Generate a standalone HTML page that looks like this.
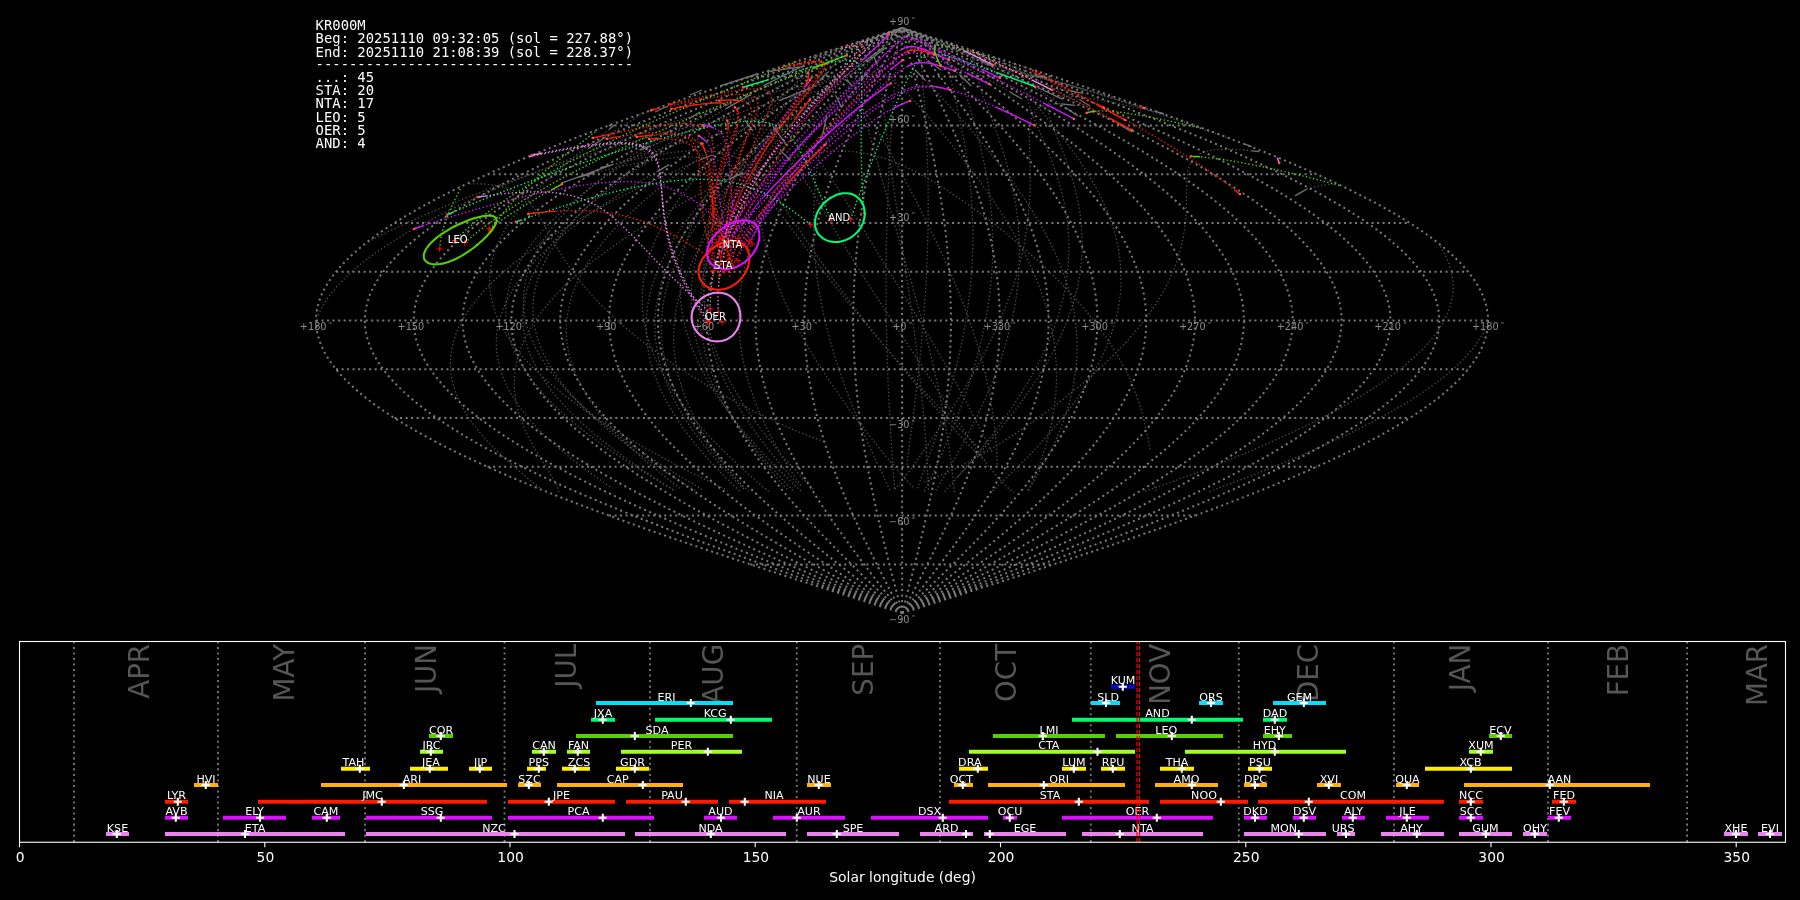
<!DOCTYPE html>
<html><head><meta charset="utf-8"><title>KR000M radiants</title>
<style>html,body{margin:0;padding:0;background:#000;overflow:hidden}svg{display:block;will-change:transform;opacity:0.999}</style>
</head><body>
<svg width="1800" height="900" viewBox="0 0 1800 900">
<rect width="1800" height="900" fill="#000"/>
<path d="M902.1,613.2 922.5,606.7 942.9,600.2 963.3,593.7 983.6,587.2 1003.8,580.7 1023.9,574.2 1043.8,567.7 1063.6,561.1 1083.2,554.6 1102.5,548.1 1121.6,541.6 1140.4,535.1 1159.0,528.6 1177.2,522.1 1195.1,515.6 1212.6,509.1 1229.8,502.6 1246.5,496.1 1262.9,489.6 1278.8,483.1 1294.2,476.6 1309.2,470.1 1323.7,463.6 1337.6,457.1 1351.0,450.6 1363.9,444.1 1376.2,437.6 1387.9,431.1 1399.1,424.6 1409.6,418.1 1419.5,411.6 1428.8,405.1 1437.5,398.5 1445.5,392.0 1452.8,385.5 1459.5,379.0 1465.4,372.5 1470.7,366.0 1475.3,359.5 1479.2,353.0 1482.4,346.5 1484.9,340.0 1486.7,333.5 1487.8,327.0 1488.1,320.5 1487.8,314.0 1486.7,307.5 1484.9,301.0 1482.4,294.5 1479.2,288.0 1475.3,281.5 1470.7,275.0 1465.4,268.5 1459.5,262.0 1452.8,255.5 1445.5,249.0 1437.5,242.5 1428.8,235.9 1419.5,229.4 1409.6,222.9 1399.1,216.4 1387.9,209.9 1376.2,203.4 1363.9,196.9 1351.0,190.4 1337.6,183.9 1323.7,177.4 1309.2,170.9 1294.2,164.4 1278.8,157.9 1262.9,151.4 1246.5,144.9 1229.8,138.4 1212.6,131.9 1195.1,125.4 1177.2,118.9 1159.0,112.4 1140.4,105.9 1121.6,99.4 1102.5,92.9 1083.2,86.4 1063.6,79.9 1043.8,73.3 1023.9,66.8 1003.8,60.3 983.6,53.8 963.3,47.3 942.9,40.8 922.5,34.3 902.1,27.8M902.1,613.2 920.8,606.7 939.5,600.2 958.2,593.7 976.8,587.2 995.4,580.7 1013.8,574.2 1032.0,567.7 1050.1,561.1 1068.1,554.6 1085.8,548.1 1103.3,541.6 1120.6,535.1 1137.6,528.6 1154.3,522.1 1170.7,515.6 1186.8,509.1 1202.5,502.6 1217.8,496.1 1232.8,489.6 1247.4,483.1 1261.5,476.6 1275.3,470.1 1288.5,463.6 1301.3,457.1 1313.6,450.6 1325.4,444.1 1336.7,437.6 1347.5,431.1 1357.7,424.6 1367.3,418.1 1376.4,411.6 1384.9,405.1 1392.9,398.5 1400.2,392.0 1406.9,385.5 1413.0,379.0 1418.5,372.5 1423.3,366.0 1427.6,359.5 1431.1,353.0 1434.1,346.5 1436.4,340.0 1438.0,333.5 1439.0,327.0 1439.3,320.5 1439.0,314.0 1438.0,307.5 1436.4,301.0 1434.1,294.5 1431.1,288.0 1427.6,281.5 1423.3,275.0 1418.5,268.5 1413.0,262.0 1406.9,255.5 1400.2,249.0 1392.9,242.5 1384.9,235.9 1376.4,229.4 1367.3,222.9 1357.7,216.4 1347.5,209.9 1336.7,203.4 1325.4,196.9 1313.6,190.4 1301.3,183.9 1288.5,177.4 1275.3,170.9 1261.5,164.4 1247.4,157.9 1232.8,151.4 1217.8,144.9 1202.5,138.4 1186.8,131.9 1170.7,125.4 1154.3,118.9 1137.6,112.4 1120.6,105.9 1103.3,99.4 1085.8,92.9 1068.1,86.4 1050.1,79.9 1032.0,73.3 1013.8,66.8 995.4,60.3 976.8,53.8 958.2,47.3 939.5,40.8 920.8,34.3 902.1,27.8M902.1,613.2 919.1,606.7 936.1,600.2 953.1,593.7 970.0,587.2 986.9,580.7 1003.6,574.2 1020.2,567.7 1036.7,561.1 1053.0,554.6 1069.1,548.1 1085.0,541.6 1100.7,535.1 1116.2,528.6 1131.3,522.1 1146.3,515.6 1160.9,509.1 1175.2,502.6 1189.1,496.1 1202.7,489.6 1216.0,483.1 1228.9,476.6 1241.3,470.1 1253.4,463.6 1265.0,457.1 1276.2,450.6 1286.9,444.1 1297.2,437.6 1307.0,431.1 1316.2,424.6 1325.0,418.1 1333.3,411.6 1341.0,405.1 1348.2,398.5 1354.9,392.0 1361.0,385.5 1366.6,379.0 1371.5,372.5 1376.0,366.0 1379.8,359.5 1383.0,353.0 1385.7,346.5 1387.8,340.0 1389.3,333.5 1390.2,327.0 1390.5,320.5 1390.2,314.0 1389.3,307.5 1387.8,301.0 1385.7,294.5 1383.0,288.0 1379.8,281.5 1376.0,275.0 1371.5,268.5 1366.6,262.0 1361.0,255.5 1354.9,249.0 1348.2,242.5 1341.0,235.9 1333.3,229.4 1325.0,222.9 1316.2,216.4 1307.0,209.9 1297.2,203.4 1286.9,196.9 1276.2,190.4 1265.0,183.9 1253.4,177.4 1241.3,170.9 1228.9,164.4 1216.0,157.9 1202.7,151.4 1189.1,144.9 1175.2,138.4 1160.9,131.9 1146.3,125.4 1131.3,118.9 1116.2,112.4 1100.7,105.9 1085.0,99.4 1069.1,92.9 1053.0,86.4 1036.7,79.9 1020.2,73.3 1003.6,66.8 986.9,60.3 970.0,53.8 953.1,47.3 936.1,40.8 919.1,34.3 902.1,27.8M902.1,613.2 917.4,606.7 932.7,600.2 948.0,593.7 963.2,587.2 978.4,580.7 993.4,574.2 1008.4,567.7 1023.2,561.1 1037.9,554.6 1052.4,548.1 1066.7,541.6 1080.8,535.1 1094.8,528.6 1108.4,522.1 1121.8,515.6 1135.0,509.1 1147.9,502.6 1160.4,496.1 1172.7,489.6 1184.6,483.1 1196.2,476.6 1207.4,470.1 1218.3,463.6 1228.7,457.1 1238.8,450.6 1248.4,444.1 1257.7,437.6 1266.5,431.1 1274.8,424.6 1282.7,418.1 1290.2,411.6 1297.1,405.1 1303.6,398.5 1309.6,392.0 1315.1,385.5 1320.1,379.0 1324.6,372.5 1328.6,366.0 1332.0,359.5 1334.9,353.0 1337.3,346.5 1339.2,340.0 1340.5,333.5 1341.4,327.0 1341.6,320.5 1341.4,314.0 1340.5,307.5 1339.2,301.0 1337.3,294.5 1334.9,288.0 1332.0,281.5 1328.6,275.0 1324.6,268.5 1320.1,262.0 1315.1,255.5 1309.6,249.0 1303.6,242.5 1297.1,235.9 1290.2,229.4 1282.7,222.9 1274.8,216.4 1266.5,209.9 1257.7,203.4 1248.4,196.9 1238.8,190.4 1228.7,183.9 1218.3,177.4 1207.4,170.9 1196.2,164.4 1184.6,157.9 1172.7,151.4 1160.4,144.9 1147.9,138.4 1135.0,131.9 1121.8,125.4 1108.4,118.9 1094.8,112.4 1080.8,105.9 1066.7,99.4 1052.4,92.9 1037.9,86.4 1023.2,79.9 1008.4,73.3 993.4,66.8 978.4,60.3 963.2,53.8 948.0,47.3 932.7,40.8 917.4,34.3 902.1,27.8M902.1,613.2 915.7,606.7 929.3,600.2 942.9,593.7 956.4,587.2 969.9,580.7 983.3,574.2 996.6,567.7 1009.8,561.1 1022.8,554.6 1035.7,548.1 1048.4,541.6 1061.0,535.1 1073.3,528.6 1085.5,522.1 1097.4,515.6 1109.1,509.1 1120.5,502.6 1131.7,496.1 1142.6,489.6 1153.2,483.1 1163.5,476.6 1173.5,470.1 1183.1,463.6 1192.4,457.1 1201.4,450.6 1210.0,444.1 1218.2,437.6 1226.0,431.1 1233.4,424.6 1240.4,418.1 1247.0,411.6 1253.2,405.1 1259.0,398.5 1264.3,392.0 1269.2,385.5 1273.7,379.0 1277.6,372.5 1281.2,366.0 1284.2,359.5 1286.8,353.0 1289.0,346.5 1290.6,340.0 1291.8,333.5 1292.5,327.0 1292.8,320.5 1292.5,314.0 1291.8,307.5 1290.6,301.0 1289.0,294.5 1286.8,288.0 1284.2,281.5 1281.2,275.0 1277.6,268.5 1273.7,262.0 1269.2,255.5 1264.3,249.0 1259.0,242.5 1253.2,235.9 1247.0,229.4 1240.4,222.9 1233.4,216.4 1226.0,209.9 1218.2,203.4 1210.0,196.9 1201.4,190.4 1192.4,183.9 1183.1,177.4 1173.5,170.9 1163.5,164.4 1153.2,157.9 1142.6,151.4 1131.7,144.9 1120.5,138.4 1109.1,131.9 1097.4,125.4 1085.5,118.9 1073.3,112.4 1061.0,105.9 1048.4,99.4 1035.7,92.9 1022.8,86.4 1009.8,79.9 996.6,73.3 983.3,66.8 969.9,60.3 956.4,53.8 942.9,47.3 929.3,40.8 915.7,34.3 902.1,27.8M902.1,613.2 914.0,606.7 925.9,600.2 937.8,593.7 949.6,587.2 961.4,580.7 973.1,574.2 984.8,567.7 996.3,561.1 1007.7,554.6 1019.0,548.1 1030.1,541.6 1041.1,535.1 1051.9,528.6 1062.6,522.1 1073.0,515.6 1083.2,509.1 1093.2,502.6 1103.0,496.1 1112.5,489.6 1121.8,483.1 1130.8,476.6 1139.5,470.1 1148.0,463.6 1156.1,457.1 1164.0,450.6 1171.5,444.1 1178.6,437.6 1185.5,431.1 1192.0,424.6 1198.1,418.1 1203.9,411.6 1209.3,405.1 1214.4,398.5 1219.0,392.0 1223.3,385.5 1227.2,379.0 1230.7,372.5 1233.8,366.0 1236.5,359.5 1238.7,353.0 1240.6,346.5 1242.1,340.0 1243.1,333.5 1243.7,327.0 1243.9,320.5 1243.7,314.0 1243.1,307.5 1242.1,301.0 1240.6,294.5 1238.7,288.0 1236.5,281.5 1233.8,275.0 1230.7,268.5 1227.2,262.0 1223.3,255.5 1219.0,249.0 1214.4,242.5 1209.3,235.9 1203.9,229.4 1198.1,222.9 1192.0,216.4 1185.5,209.9 1178.6,203.4 1171.5,196.9 1164.0,190.4 1156.1,183.9 1148.0,177.4 1139.5,170.9 1130.8,164.4 1121.8,157.9 1112.5,151.4 1103.0,144.9 1093.2,138.4 1083.2,131.9 1073.0,125.4 1062.6,118.9 1051.9,112.4 1041.1,105.9 1030.1,99.4 1019.0,92.9 1007.7,86.4 996.3,79.9 984.8,73.3 973.1,66.8 961.4,60.3 949.6,53.8 937.8,47.3 925.9,40.8 914.0,34.3 902.1,27.8M902.1,613.2 912.3,606.7 922.5,600.2 932.7,593.7 942.8,587.2 952.9,580.7 963.0,574.2 973.0,567.7 982.8,561.1 992.6,554.6 1002.3,548.1 1011.8,541.6 1021.3,535.1 1030.5,528.6 1039.6,522.1 1048.6,515.6 1057.3,509.1 1065.9,502.6 1074.3,496.1 1082.5,489.6 1090.4,483.1 1098.1,476.6 1105.6,470.1 1112.9,463.6 1119.8,457.1 1126.5,450.6 1133.0,444.1 1139.1,437.6 1145.0,431.1 1150.6,424.6 1155.8,418.1 1160.8,411.6 1165.4,405.1 1169.8,398.5 1173.8,392.0 1177.4,385.5 1180.8,379.0 1183.7,372.5 1186.4,366.0 1188.7,359.5 1190.6,353.0 1192.2,346.5 1193.5,340.0 1194.4,333.5 1194.9,327.0 1195.1,320.5 1194.9,314.0 1194.4,307.5 1193.5,301.0 1192.2,294.5 1190.6,288.0 1188.7,281.5 1186.4,275.0 1183.7,268.5 1180.8,262.0 1177.4,255.5 1173.8,249.0 1169.8,242.5 1165.4,235.9 1160.8,229.4 1155.8,222.9 1150.6,216.4 1145.0,209.9 1139.1,203.4 1133.0,196.9 1126.5,190.4 1119.8,183.9 1112.9,177.4 1105.6,170.9 1098.1,164.4 1090.4,157.9 1082.5,151.4 1074.3,144.9 1065.9,138.4 1057.3,131.9 1048.6,125.4 1039.6,118.9 1030.5,112.4 1021.3,105.9 1011.8,99.4 1002.3,92.9 992.6,86.4 982.8,79.9 973.0,73.3 963.0,66.8 952.9,60.3 942.8,53.8 932.7,47.3 922.5,40.8 912.3,34.3 902.1,27.8M902.1,613.2 910.6,606.7 919.1,600.2 927.6,593.7 936.0,587.2 944.5,580.7 952.8,574.2 961.1,567.7 969.4,561.1 977.5,554.6 985.6,548.1 993.5,541.6 1001.4,535.1 1009.1,528.6 1016.7,522.1 1024.2,515.6 1031.5,509.1 1038.6,502.6 1045.6,496.1 1052.4,489.6 1059.0,483.1 1065.5,476.6 1071.7,470.1 1077.7,463.6 1083.5,457.1 1089.1,450.6 1094.5,444.1 1099.6,437.6 1104.5,431.1 1109.2,424.6 1113.5,418.1 1117.7,411.6 1121.5,405.1 1125.1,398.5 1128.5,392.0 1131.5,385.5 1134.3,379.0 1136.8,372.5 1139.0,366.0 1140.9,359.5 1142.6,353.0 1143.9,346.5 1144.9,340.0 1145.7,333.5 1146.1,327.0 1146.3,320.5 1146.1,314.0 1145.7,307.5 1144.9,301.0 1143.9,294.5 1142.6,288.0 1140.9,281.5 1139.0,275.0 1136.8,268.5 1134.3,262.0 1131.5,255.5 1128.5,249.0 1125.1,242.5 1121.5,235.9 1117.7,229.4 1113.5,222.9 1109.2,216.4 1104.5,209.9 1099.6,203.4 1094.5,196.9 1089.1,190.4 1083.5,183.9 1077.7,177.4 1071.7,170.9 1065.5,164.4 1059.0,157.9 1052.4,151.4 1045.6,144.9 1038.6,138.4 1031.5,131.9 1024.2,125.4 1016.7,118.9 1009.1,112.4 1001.4,105.9 993.5,99.4 985.6,92.9 977.5,86.4 969.4,79.9 961.1,73.3 952.8,66.8 944.5,60.3 936.0,53.8 927.6,47.3 919.1,40.8 910.6,34.3 902.1,27.8M902.1,613.2 908.9,606.7 915.7,600.2 922.5,593.7 929.2,587.2 936.0,580.7 942.7,574.2 949.3,567.7 955.9,561.1 962.4,554.6 968.9,548.1 975.2,541.6 981.5,535.1 987.7,528.6 993.8,522.1 999.7,515.6 1005.6,509.1 1011.3,502.6 1016.9,496.1 1022.3,489.6 1027.6,483.1 1032.8,476.6 1037.8,470.1 1042.6,463.6 1047.2,457.1 1051.7,450.6 1056.0,444.1 1060.1,437.6 1064.0,431.1 1067.7,424.6 1071.2,418.1 1074.6,411.6 1077.6,405.1 1080.5,398.5 1083.2,392.0 1085.6,385.5 1087.9,379.0 1089.9,372.5 1091.6,366.0 1093.2,359.5 1094.5,353.0 1095.5,346.5 1096.3,340.0 1096.9,333.5 1097.3,327.0 1097.4,320.5 1097.3,314.0 1096.9,307.5 1096.3,301.0 1095.5,294.5 1094.5,288.0 1093.2,281.5 1091.6,275.0 1089.9,268.5 1087.9,262.0 1085.6,255.5 1083.2,249.0 1080.5,242.5 1077.6,235.9 1074.6,229.4 1071.2,222.9 1067.7,216.4 1064.0,209.9 1060.1,203.4 1056.0,196.9 1051.7,190.4 1047.2,183.9 1042.6,177.4 1037.8,170.9 1032.8,164.4 1027.6,157.9 1022.3,151.4 1016.9,144.9 1011.3,138.4 1005.6,131.9 999.7,125.4 993.8,118.9 987.7,112.4 981.5,105.9 975.2,99.4 968.9,92.9 962.4,86.4 955.9,79.9 949.3,73.3 942.7,66.8 936.0,60.3 929.2,53.8 922.5,47.3 915.7,40.8 908.9,34.3 902.1,27.8M902.1,613.2 907.2,606.7 912.3,600.2 917.4,593.7 922.5,587.2 927.5,580.7 932.5,574.2 937.5,567.7 942.4,561.1 947.3,554.6 952.2,548.1 956.9,541.6 961.7,535.1 966.3,528.6 970.8,522.1 975.3,515.6 979.7,509.1 984.0,502.6 988.2,496.1 992.3,489.6 996.2,483.1 1000.1,476.6 1003.8,470.1 1007.5,463.6 1010.9,457.1 1014.3,450.6 1017.5,444.1 1020.6,437.6 1023.5,431.1 1026.3,424.6 1029.0,418.1 1031.4,411.6 1033.8,405.1 1035.9,398.5 1037.9,392.0 1039.7,385.5 1041.4,379.0 1042.9,372.5 1044.2,366.0 1045.4,359.5 1046.4,353.0 1047.2,346.5 1047.8,340.0 1048.2,333.5 1048.5,327.0 1048.6,320.5 1048.5,314.0 1048.2,307.5 1047.8,301.0 1047.2,294.5 1046.4,288.0 1045.4,281.5 1044.2,275.0 1042.9,268.5 1041.4,262.0 1039.7,255.5 1037.9,249.0 1035.9,242.5 1033.8,235.9 1031.4,229.4 1029.0,222.9 1026.3,216.4 1023.5,209.9 1020.6,203.4 1017.5,196.9 1014.3,190.4 1010.9,183.9 1007.5,177.4 1003.8,170.9 1000.1,164.4 996.2,157.9 992.3,151.4 988.2,144.9 984.0,138.4 979.7,131.9 975.3,125.4 970.8,118.9 966.3,112.4 961.7,105.9 956.9,99.4 952.2,92.9 947.3,86.4 942.4,79.9 937.5,73.3 932.5,66.8 927.5,60.3 922.5,53.8 917.4,47.3 912.3,40.8 907.2,34.3 902.1,27.8M902.1,613.2 905.5,606.7 908.9,600.2 912.3,593.7 915.7,587.2 919.0,580.7 922.4,574.2 925.7,567.7 929.0,561.1 932.2,554.6 935.5,548.1 938.7,541.6 941.8,535.1 944.9,528.6 947.9,522.1 950.9,515.6 953.8,509.1 956.7,502.6 959.5,496.1 962.2,489.6 964.8,483.1 967.4,476.6 969.9,470.1 972.3,463.6 974.7,457.1 976.9,450.6 979.0,444.1 981.1,437.6 983.0,431.1 984.9,424.6 986.7,418.1 988.3,411.6 989.9,405.1 991.3,398.5 992.6,392.0 993.8,385.5 995.0,379.0 996.0,372.5 996.8,366.0 997.6,359.5 998.3,353.0 998.8,346.5 999.2,340.0 999.5,333.5 999.7,327.0 999.7,320.5 999.7,314.0 999.5,307.5 999.2,301.0 998.8,294.5 998.3,288.0 997.6,281.5 996.8,275.0 996.0,268.5 995.0,262.0 993.8,255.5 992.6,249.0 991.3,242.5 989.9,235.9 988.3,229.4 986.7,222.9 984.9,216.4 983.0,209.9 981.1,203.4 979.0,196.9 976.9,190.4 974.7,183.9 972.3,177.4 969.9,170.9 967.4,164.4 964.8,157.9 962.2,151.4 959.5,144.9 956.7,138.4 953.8,131.9 950.9,125.4 947.9,118.9 944.9,112.4 941.8,105.9 938.7,99.4 935.5,92.9 932.2,86.4 929.0,79.9 925.7,73.3 922.4,66.8 919.0,60.3 915.7,53.8 912.3,47.3 908.9,40.8 905.5,34.3 902.1,27.8M902.1,613.2 903.8,606.7 905.5,600.2 907.2,593.7 908.9,587.2 910.5,580.7 912.2,574.2 913.9,567.7 915.5,561.1 917.2,554.6 918.8,548.1 920.4,541.6 921.9,535.1 923.5,528.6 925.0,522.1 926.5,515.6 927.9,509.1 929.4,502.6 930.8,496.1 932.1,489.6 933.5,483.1 934.7,476.6 936.0,470.1 937.2,463.6 938.4,457.1 939.5,450.6 940.5,444.1 941.6,437.6 942.6,431.1 943.5,424.6 944.4,418.1 945.2,411.6 946.0,405.1 946.7,398.5 947.3,392.0 948.0,385.5 948.5,379.0 949.0,372.5 949.4,366.0 949.8,359.5 950.2,353.0 950.4,346.5 950.6,340.0 950.8,333.5 950.9,327.0 950.9,320.5 950.9,314.0 950.8,307.5 950.6,301.0 950.4,294.5 950.2,288.0 949.8,281.5 949.4,275.0 949.0,268.5 948.5,262.0 948.0,255.5 947.3,249.0 946.7,242.5 946.0,235.9 945.2,229.4 944.4,222.9 943.5,216.4 942.6,209.9 941.6,203.4 940.5,196.9 939.5,190.4 938.4,183.9 937.2,177.4 936.0,170.9 934.7,164.4 933.5,157.9 932.1,151.4 930.8,144.9 929.4,138.4 927.9,131.9 926.5,125.4 925.0,118.9 923.5,112.4 921.9,105.9 920.4,99.4 918.8,92.9 917.2,86.4 915.5,79.9 913.9,73.3 912.2,66.8 910.5,60.3 908.9,53.8 907.2,47.3 905.5,40.8 903.8,34.3 902.1,27.8M902.1,613.2 902.1,606.7 902.1,600.2 902.1,593.7 902.1,587.2 902.1,580.7 902.1,574.2 902.1,567.7 902.1,561.1 902.1,554.6 902.1,548.1 902.1,541.6 902.1,535.1 902.1,528.6 902.1,522.1 902.1,515.6 902.1,509.1 902.1,502.6 902.1,496.1 902.1,489.6 902.1,483.1 902.1,476.6 902.1,470.1 902.1,463.6 902.1,457.1 902.1,450.6 902.1,444.1 902.1,437.6 902.1,431.1 902.1,424.6 902.1,418.1 902.1,411.6 902.1,405.1 902.1,398.5 902.1,392.0 902.1,385.5 902.1,379.0 902.1,372.5 902.1,366.0 902.1,359.5 902.1,353.0 902.1,346.5 902.1,340.0 902.1,333.5 902.1,327.0 902.1,320.5 902.1,314.0 902.1,307.5 902.1,301.0 902.1,294.5 902.1,288.0 902.1,281.5 902.1,275.0 902.1,268.5 902.1,262.0 902.1,255.5 902.1,249.0 902.1,242.5 902.1,235.9 902.1,229.4 902.1,222.9 902.1,216.4 902.1,209.9 902.1,203.4 902.1,196.9 902.1,190.4 902.1,183.9 902.1,177.4 902.1,170.9 902.1,164.4 902.1,157.9 902.1,151.4 902.1,144.9 902.1,138.4 902.1,131.9 902.1,125.4 902.1,118.9 902.1,112.4 902.1,105.9 902.1,99.4 902.1,92.9 902.1,86.4 902.1,79.9 902.1,73.3 902.1,66.8 902.1,60.3 902.1,53.8 902.1,47.3 902.1,40.8 902.1,34.3 902.1,27.8M902.1,613.2 900.4,606.7 898.7,600.2 897.0,593.7 895.3,587.2 893.6,580.7 891.9,574.2 890.2,567.7 888.6,561.1 887.0,554.6 885.4,548.1 883.8,541.6 882.2,535.1 880.6,528.6 879.1,522.1 877.6,515.6 876.2,509.1 874.7,502.6 873.4,496.1 872.0,489.6 870.7,483.1 869.4,476.6 868.1,470.1 866.9,463.6 865.8,457.1 864.6,450.6 863.6,444.1 862.5,437.6 861.6,431.1 860.6,424.6 859.8,418.1 858.9,411.6 858.2,405.1 857.4,398.5 856.8,392.0 856.2,385.5 855.6,379.0 855.1,372.5 854.7,366.0 854.3,359.5 854.0,353.0 853.7,346.5 853.5,340.0 853.3,333.5 853.2,327.0 853.2,320.5 853.2,314.0 853.3,307.5 853.5,301.0 853.7,294.5 854.0,288.0 854.3,281.5 854.7,275.0 855.1,268.5 855.6,262.0 856.2,255.5 856.8,249.0 857.4,242.5 858.2,235.9 858.9,229.4 859.8,222.9 860.6,216.4 861.6,209.9 862.5,203.4 863.6,196.9 864.6,190.4 865.8,183.9 866.9,177.4 868.1,170.9 869.4,164.4 870.7,157.9 872.0,151.4 873.4,144.9 874.7,138.4 876.2,131.9 877.6,125.4 879.1,118.9 880.6,112.4 882.2,105.9 883.8,99.4 885.4,92.9 887.0,86.4 888.6,79.9 890.2,73.3 891.9,66.8 893.6,60.3 895.3,53.8 897.0,47.3 898.7,40.8 900.4,34.3 902.1,27.8M902.1,613.2 898.7,606.7 895.2,600.2 891.8,593.7 888.5,587.2 885.1,580.7 881.8,574.2 878.4,567.7 875.1,561.1 871.9,554.6 868.7,548.1 865.5,541.6 862.3,535.1 859.2,528.6 856.2,522.1 853.2,515.6 850.3,509.1 847.4,502.6 844.6,496.1 841.9,489.6 839.3,483.1 836.7,476.6 834.2,470.1 831.8,463.6 829.5,457.1 827.2,450.6 825.1,444.1 823.0,437.6 821.1,431.1 819.2,424.6 817.5,418.1 815.8,411.6 814.3,405.1 812.8,398.5 811.5,392.0 810.3,385.5 809.2,379.0 808.2,372.5 807.3,366.0 806.5,359.5 805.9,353.0 805.3,346.5 804.9,340.0 804.6,333.5 804.4,327.0 804.4,320.5 804.4,314.0 804.6,307.5 804.9,301.0 805.3,294.5 805.9,288.0 806.5,281.5 807.3,275.0 808.2,268.5 809.2,262.0 810.3,255.5 811.5,249.0 812.8,242.5 814.3,235.9 815.8,229.4 817.5,222.9 819.2,216.4 821.1,209.9 823.0,203.4 825.1,196.9 827.2,190.4 829.5,183.9 831.8,177.4 834.2,170.9 836.7,164.4 839.3,157.9 841.9,151.4 844.6,144.9 847.4,138.4 850.3,131.9 853.2,125.4 856.2,118.9 859.2,112.4 862.3,105.9 865.5,99.4 868.7,92.9 871.9,86.4 875.1,79.9 878.4,73.3 881.8,66.8 885.1,60.3 888.5,53.8 891.8,47.3 895.2,40.8 898.7,34.3 902.1,27.8M902.1,613.2 896.9,606.7 891.8,600.2 886.7,593.7 881.7,587.2 876.6,580.7 871.6,574.2 866.6,567.7 861.7,561.1 856.8,554.6 851.9,548.1 847.2,541.6 842.5,535.1 837.8,528.6 833.3,522.1 828.8,515.6 824.4,509.1 820.1,502.6 815.9,496.1 811.9,489.6 807.9,483.1 804.0,476.6 800.3,470.1 796.7,463.6 793.2,457.1 789.8,450.6 786.6,444.1 783.5,437.6 780.6,431.1 777.8,424.6 775.2,418.1 772.7,411.6 770.4,405.1 768.2,398.5 766.2,392.0 764.4,385.5 762.7,379.0 761.2,372.5 759.9,366.0 758.7,359.5 757.8,353.0 757.0,346.5 756.3,340.0 755.9,333.5 755.6,327.0 755.5,320.5 755.6,314.0 755.9,307.5 756.3,301.0 757.0,294.5 757.8,288.0 758.7,281.5 759.9,275.0 761.2,268.5 762.7,262.0 764.4,255.5 766.2,249.0 768.2,242.5 770.4,235.9 772.7,229.4 775.2,222.9 777.8,216.4 780.6,209.9 783.5,203.4 786.6,196.9 789.8,190.4 793.2,183.9 796.7,177.4 800.3,170.9 804.0,164.4 807.9,157.9 811.9,151.4 815.9,144.9 820.1,138.4 824.4,131.9 828.8,125.4 833.3,118.9 837.8,112.4 842.5,105.9 847.2,99.4 851.9,92.9 856.8,86.4 861.7,79.9 866.6,73.3 871.6,66.8 876.6,60.3 881.7,53.8 886.7,47.3 891.8,40.8 896.9,34.3 902.1,27.8M902.1,613.2 895.2,606.7 888.4,600.2 881.6,593.7 874.9,587.2 868.1,580.7 861.4,574.2 854.8,567.7 848.2,561.1 841.7,554.6 835.2,548.1 828.9,541.6 822.6,535.1 816.4,528.6 810.3,522.1 804.4,515.6 798.5,509.1 792.8,502.6 787.2,496.1 781.8,489.6 776.5,483.1 771.3,476.6 766.4,470.1 761.5,463.6 756.9,457.1 752.4,450.6 748.1,444.1 744.0,437.6 740.1,431.1 736.4,424.6 732.9,418.1 729.6,411.6 726.5,405.1 723.6,398.5 720.9,392.0 718.5,385.5 716.3,379.0 714.3,372.5 712.5,366.0 711.0,359.5 709.7,353.0 708.6,346.5 707.8,340.0 707.2,333.5 706.8,327.0 706.7,320.5 706.8,314.0 707.2,307.5 707.8,301.0 708.6,294.5 709.7,288.0 711.0,281.5 712.5,275.0 714.3,268.5 716.3,262.0 718.5,255.5 720.9,249.0 723.6,242.5 726.5,235.9 729.6,229.4 732.9,222.9 736.4,216.4 740.1,209.9 744.0,203.4 748.1,196.9 752.4,190.4 756.9,183.9 761.5,177.4 766.4,170.9 771.3,164.4 776.5,157.9 781.8,151.4 787.2,144.9 792.8,138.4 798.5,131.9 804.4,125.4 810.3,118.9 816.4,112.4 822.6,105.9 828.9,99.4 835.2,92.9 841.7,86.4 848.2,79.9 854.8,73.3 861.4,66.8 868.1,60.3 874.9,53.8 881.6,47.3 888.4,40.8 895.2,34.3 902.1,27.8M902.1,613.2 893.5,606.7 885.0,600.2 876.5,593.7 868.1,587.2 859.7,580.7 851.3,574.2 843.0,567.7 834.7,561.1 826.6,554.6 818.5,548.1 810.6,541.6 802.7,535.1 795.0,528.6 787.4,522.1 780.0,515.6 772.7,509.1 765.5,502.6 758.5,496.1 751.7,489.6 745.1,483.1 738.7,476.6 732.4,470.1 726.4,463.6 720.6,457.1 715.0,450.6 709.6,444.1 704.5,437.6 699.6,431.1 695.0,424.6 690.6,418.1 686.4,411.6 682.6,405.1 679.0,398.5 675.6,392.0 672.6,385.5 669.8,379.0 667.3,372.5 665.1,366.0 663.2,359.5 661.6,353.0 660.2,346.5 659.2,340.0 658.5,333.5 658.0,327.0 657.9,320.5 658.0,314.0 658.5,307.5 659.2,301.0 660.2,294.5 661.6,288.0 663.2,281.5 665.1,275.0 667.3,268.5 669.8,262.0 672.6,255.5 675.6,249.0 679.0,242.5 682.6,235.9 686.4,229.4 690.6,222.9 695.0,216.4 699.6,209.9 704.5,203.4 709.6,196.9 715.0,190.4 720.6,183.9 726.4,177.4 732.4,170.9 738.7,164.4 745.1,157.9 751.7,151.4 758.5,144.9 765.5,138.4 772.7,131.9 780.0,125.4 787.4,118.9 795.0,112.4 802.7,105.9 810.6,99.4 818.5,92.9 826.6,86.4 834.7,79.9 843.0,73.3 851.3,66.8 859.7,60.3 868.1,53.8 876.5,47.3 885.0,40.8 893.5,34.3 902.1,27.8M902.1,613.2 891.8,606.7 881.6,600.2 871.4,593.7 861.3,587.2 851.2,580.7 841.1,574.2 831.2,567.7 821.3,561.1 811.5,554.6 801.8,548.1 792.3,541.6 782.9,535.1 773.6,528.6 764.5,522.1 755.5,515.6 746.8,509.1 738.2,502.6 729.8,496.1 721.6,489.6 713.7,483.1 706.0,476.6 698.5,470.1 691.3,463.6 684.3,457.1 677.6,450.6 671.1,444.1 665.0,437.6 659.1,431.1 653.5,424.6 648.3,418.1 643.3,411.6 638.7,405.1 634.4,398.5 630.4,392.0 626.7,385.5 623.4,379.0 620.4,372.5 617.7,366.0 615.4,359.5 613.5,353.0 611.9,346.5 610.6,340.0 609.7,333.5 609.2,327.0 609.0,320.5 609.2,314.0 609.7,307.5 610.6,301.0 611.9,294.5 613.5,288.0 615.4,281.5 617.7,275.0 620.4,268.5 623.4,262.0 626.7,255.5 630.4,249.0 634.4,242.5 638.7,235.9 643.3,229.4 648.3,222.9 653.5,216.4 659.1,209.9 665.0,203.4 671.1,196.9 677.6,190.4 684.3,183.9 691.3,177.4 698.5,170.9 706.0,164.4 713.7,157.9 721.6,151.4 729.8,144.9 738.2,138.4 746.8,131.9 755.5,125.4 764.5,118.9 773.6,112.4 782.9,105.9 792.3,99.4 801.8,92.9 811.5,86.4 821.3,79.9 831.2,73.3 841.1,66.8 851.2,60.3 861.3,53.8 871.4,47.3 881.6,40.8 891.8,34.3 902.1,27.8M902.1,613.2 890.1,606.7 878.2,600.2 866.3,593.7 854.5,587.2 842.7,580.7 831.0,574.2 819.4,567.7 807.8,561.1 796.4,554.6 785.1,548.1 774.0,541.6 763.0,535.1 752.2,528.6 741.6,522.1 731.1,515.6 720.9,509.1 710.9,502.6 701.1,496.1 691.6,489.6 682.3,483.1 673.3,476.6 664.6,470.1 656.1,463.6 648.0,457.1 640.2,450.6 632.7,444.1 625.5,437.6 618.6,431.1 612.1,424.6 606.0,418.1 600.2,411.6 594.8,405.1 589.7,398.5 585.1,392.0 580.8,385.5 576.9,379.0 573.4,372.5 570.3,366.0 567.7,359.5 565.4,353.0 563.5,346.5 562.1,340.0 561.0,333.5 560.4,327.0 560.2,320.5 560.4,314.0 561.0,307.5 562.1,301.0 563.5,294.5 565.4,288.0 567.7,281.5 570.3,275.0 573.4,268.5 576.9,262.0 580.8,255.5 585.1,249.0 589.7,242.5 594.8,235.9 600.2,229.4 606.0,222.9 612.1,216.4 618.6,209.9 625.5,203.4 632.7,196.9 640.2,190.4 648.0,183.9 656.1,177.4 664.6,170.9 673.3,164.4 682.3,157.9 691.6,151.4 701.1,144.9 710.9,138.4 720.9,131.9 731.1,125.4 741.6,118.9 752.2,112.4 763.0,105.9 774.0,99.4 785.1,92.9 796.4,86.4 807.8,79.9 819.4,73.3 831.0,66.8 842.7,60.3 854.5,53.8 866.3,47.3 878.2,40.8 890.1,34.3 902.1,27.8M902.1,613.2 888.4,606.7 874.8,600.2 861.2,593.7 847.7,587.2 834.2,580.7 820.8,574.2 807.5,567.7 794.4,561.1 781.3,554.6 768.4,548.1 755.7,541.6 743.1,535.1 730.8,528.6 718.6,522.1 706.7,515.6 695.0,509.1 683.6,502.6 672.4,496.1 661.5,489.6 650.9,483.1 640.6,476.6 630.6,470.1 621.0,463.6 611.7,457.1 602.8,450.6 594.2,444.1 586.0,437.6 578.1,431.1 570.7,424.6 563.7,418.1 557.1,411.6 550.9,405.1 545.1,398.5 539.8,392.0 534.9,385.5 530.5,379.0 526.5,372.5 522.9,366.0 519.9,359.5 517.3,353.0 515.1,346.5 513.5,340.0 512.3,333.5 511.6,327.0 511.3,320.5 511.6,314.0 512.3,307.5 513.5,301.0 515.1,294.5 517.3,288.0 519.9,281.5 522.9,275.0 526.5,268.5 530.5,262.0 534.9,255.5 539.8,249.0 545.1,242.5 550.9,235.9 557.1,229.4 563.7,222.9 570.7,216.4 578.1,209.9 586.0,203.4 594.2,196.9 602.8,190.4 611.7,183.9 621.0,177.4 630.6,170.9 640.6,164.4 650.9,157.9 661.5,151.4 672.4,144.9 683.6,138.4 695.0,131.9 706.7,125.4 718.6,118.9 730.8,112.4 743.1,105.9 755.7,99.4 768.4,92.9 781.3,86.4 794.4,79.9 807.5,73.3 820.8,66.8 834.2,60.3 847.7,53.8 861.2,47.3 874.8,40.8 888.4,34.3 902.1,27.8M902.1,613.2 886.7,606.7 871.4,600.2 856.1,593.7 840.9,587.2 825.7,580.7 810.7,574.2 795.7,567.7 780.9,561.1 766.2,554.6 751.7,548.1 737.4,541.6 723.3,535.1 709.4,528.6 695.7,522.1 682.3,515.6 669.1,509.1 656.3,502.6 643.7,496.1 631.4,489.6 619.5,483.1 607.9,476.6 596.7,470.1 585.9,463.6 575.4,457.1 565.3,450.6 555.7,444.1 546.4,437.6 537.6,431.1 529.3,424.6 521.4,418.1 514.0,411.6 507.0,405.1 500.5,398.5 494.5,392.0 489.0,385.5 484.0,379.0 479.5,372.5 475.6,366.0 472.1,359.5 469.2,353.0 466.8,346.5 464.9,340.0 463.6,333.5 462.8,327.0 462.5,320.5 462.8,314.0 463.6,307.5 464.9,301.0 466.8,294.5 469.2,288.0 472.1,281.5 475.6,275.0 479.5,268.5 484.0,262.0 489.0,255.5 494.5,249.0 500.5,242.5 507.0,235.9 514.0,229.4 521.4,222.9 529.3,216.4 537.6,209.9 546.4,203.4 555.7,196.9 565.3,190.4 575.4,183.9 585.9,177.4 596.7,170.9 607.9,164.4 619.5,157.9 631.4,151.4 643.7,144.9 656.3,138.4 669.1,131.9 682.3,125.4 695.7,118.9 709.4,112.4 723.3,105.9 737.4,99.4 751.7,92.9 766.2,86.4 780.9,79.9 795.7,73.3 810.7,66.8 825.7,60.3 840.9,53.8 856.1,47.3 871.4,40.8 886.7,34.3 902.1,27.8M902.1,613.2 885.0,606.7 868.0,600.2 851.0,593.7 834.1,587.2 817.3,580.7 800.5,574.2 783.9,567.7 767.4,561.1 751.1,554.6 735.0,548.1 719.1,541.6 703.4,535.1 688.0,528.6 672.8,522.1 657.9,515.6 643.2,509.1 629.0,502.6 615.0,496.1 601.4,489.6 588.1,483.1 575.3,476.6 562.8,470.1 550.7,463.6 539.1,457.1 527.9,450.6 517.2,444.1 506.9,437.6 497.2,431.1 487.9,424.6 479.1,418.1 470.8,411.6 463.1,405.1 455.9,398.5 449.2,392.0 443.1,385.5 437.6,379.0 432.6,372.5 428.2,366.0 424.3,359.5 421.1,353.0 418.4,346.5 416.3,340.0 414.8,333.5 414.0,327.0 413.7,320.5 414.0,314.0 414.8,307.5 416.3,301.0 418.4,294.5 421.1,288.0 424.3,281.5 428.2,275.0 432.6,268.5 437.6,262.0 443.1,255.5 449.2,249.0 455.9,242.5 463.1,235.9 470.8,229.4 479.1,222.9 487.9,216.4 497.2,209.9 506.9,203.4 517.2,196.9 527.9,190.4 539.1,183.9 550.7,177.4 562.8,170.9 575.3,164.4 588.1,157.9 601.4,151.4 615.0,144.9 629.0,138.4 643.2,131.9 657.9,125.4 672.8,118.9 688.0,112.4 703.4,105.9 719.1,99.4 735.0,92.9 751.1,86.4 767.4,79.9 783.9,73.3 800.5,66.8 817.3,60.3 834.1,53.8 851.0,47.3 868.0,40.8 885.0,34.3 902.1,27.8M902.1,613.2 883.3,606.7 864.6,600.2 845.9,593.7 827.3,587.2 808.8,580.7 790.4,574.2 772.1,567.7 754.0,561.1 736.0,554.6 718.3,548.1 700.8,541.6 683.5,535.1 666.5,528.6 649.8,522.1 633.4,515.6 617.4,509.1 601.6,502.6 586.3,496.1 571.3,489.6 556.7,483.1 542.6,476.6 528.9,470.1 515.6,463.6 502.8,457.1 490.5,450.6 478.7,444.1 467.4,437.6 456.7,431.1 446.5,424.6 436.8,418.1 427.7,411.6 419.2,405.1 411.3,398.5 403.9,392.0 397.2,385.5 391.1,379.0 385.6,372.5 380.8,366.0 376.6,359.5 373.0,353.0 370.0,346.5 367.8,340.0 366.1,333.5 365.1,327.0 364.8,320.5 365.1,314.0 366.1,307.5 367.8,301.0 370.0,294.5 373.0,288.0 376.6,281.5 380.8,275.0 385.6,268.5 391.1,262.0 397.2,255.5 403.9,249.0 411.3,242.5 419.2,235.9 427.7,229.4 436.8,222.9 446.5,216.4 456.7,209.9 467.4,203.4 478.7,196.9 490.5,190.4 502.8,183.9 515.6,177.4 528.9,170.9 542.6,164.4 556.7,157.9 571.3,151.4 586.3,144.9 601.6,138.4 617.4,131.9 633.4,125.4 649.8,118.9 666.5,112.4 683.5,105.9 700.8,99.4 718.3,92.9 736.0,86.4 754.0,79.9 772.1,73.3 790.4,66.8 808.8,60.3 827.3,53.8 845.9,47.3 864.6,40.8 883.3,34.3 902.1,27.8M902.1,613.2 881.6,606.7 861.2,600.2 840.8,593.7 820.5,587.2 800.3,580.7 780.2,574.2 760.3,567.7 740.5,561.1 721.0,554.6 701.6,548.1 682.5,541.6 663.7,535.1 645.1,528.6 626.9,522.1 609.0,515.6 591.5,509.1 574.3,502.6 557.6,496.1 541.2,489.6 525.3,483.1 509.9,476.6 494.9,470.1 480.5,463.6 466.5,457.1 453.1,450.6 440.2,444.1 427.9,437.6 416.2,431.1 405.0,424.6 394.5,418.1 384.6,411.6 375.3,405.1 366.6,398.5 358.7,392.0 351.3,385.5 344.7,379.0 338.7,372.5 333.4,366.0 328.8,359.5 324.9,353.0 321.7,346.5 319.2,340.0 317.4,333.5 316.3,327.0 316.0,320.5 316.3,314.0 317.4,307.5 319.2,301.0 321.7,294.5 324.9,288.0 328.8,281.5 333.4,275.0 338.7,268.5 344.7,262.0 351.3,255.5 358.7,249.0 366.6,242.5 375.3,235.9 384.6,229.4 394.5,222.9 405.0,216.4 416.2,209.9 427.9,203.4 440.2,196.9 453.1,190.4 466.5,183.9 480.5,177.4 494.9,170.9 509.9,164.4 525.3,157.9 541.2,151.4 557.6,144.9 574.3,138.4 591.5,131.9 609.0,125.4 626.9,118.9 645.1,112.4 663.7,105.9 682.5,99.4 701.6,92.9 721.0,86.4 740.5,79.9 760.3,73.3 780.2,66.8 800.3,60.3 820.5,53.8 840.8,47.3 861.2,40.8 881.6,34.3 902.1,27.8M750.4,564.4 1053.7,564.4M609.0,515.6 1195.1,515.6M487.6,466.8 1316.5,466.8M394.5,418.1 1409.6,418.1M336.0,369.3 1468.2,369.3M316.0,320.5 1488.1,320.5M336.0,271.7 1468.2,271.7M394.5,222.9 1409.6,222.9M487.6,174.2 1316.5,174.2M609.0,125.4 1195.1,125.4M750.4,76.6 1053.7,76.6" fill="none" stroke="#797979" stroke-width="2.0" stroke-dasharray="2.08 3.44"/>
<path d="M612.5,164.7 622.8,161.2 632.9,157.9 643.0,154.7 652.8,151.6 662.5,148.7 672.0,145.9 681.2,143.3 690.2,140.9 698.9,138.7 707.2,136.6 715.3,134.8 723.0,133.3 730.4,131.9 737.4,130.9 744.0,130.0 750.3,129.5 756.2,129.2 761.7,129.2 767.0,129.4 771.9,129.9 776.5,130.7 780.8,131.8 784.8,133.1 788.7,134.6 792.3,136.4 795.7,138.4 799.0,140.6 802.1,143.0 805.1,145.5 808.1,148.3 810.9,151.2 813.6,154.2 816.3,157.4 819.0,160.8 821.6,164.2 824.2,167.8 826.8,171.4 829.3,175.2 831.9,179.0 834.4,182.9 837.0,186.9 839.6,191.0 842.2,195.1 844.8,199.2 847.4,203.5 850.1,207.7 852.7,212.1 855.4,216.4 858.1,220.8 860.8,225.3 863.6,229.7 866.3,234.2 869.1,238.7 871.9,243.3 874.7,247.9 877.6,252.5 880.4,257.1 883.3,261.7 886.1,266.3 889.0,271.0 891.9,275.7 894.8,280.4 897.7,285.0 900.6,289.8 903.5,294.5 906.3,299.2 909.2,303.9 912.1,308.6 915.0,313.4 917.9,318.1 920.8,322.8 923.6,327.5 926.4,332.3 929.3,337.0 932.1,341.7 934.9,346.4 937.6,351.2 940.4,355.9 943.1,360.5 945.8,365.2 948.4,369.9 951.1,374.6 953.7,379.2 956.3,383.8 958.8,388.5 961.3,393.0 963.8,397.6 966.3,402.2 968.7,406.7 971.0,411.2 973.4,415.7 975.7,420.1 978.0,424.5 980.2,428.9 982.4,433.2 984.6,437.4 986.8,441.7 988.9,445.8 991.0,450.0 993.1,454.0M657.5,171.3 648.6,176.5 639.8,181.6 631.3,186.8 622.9,192.0 614.7,197.3 606.8,202.5 599.0,207.7 591.5,213.0 584.2,218.3 577.2,223.5 570.4,228.8 563.9,234.1 557.6,239.4 551.7,244.7 546.0,250.0 540.5,255.4 535.4,260.7 530.6,266.0 526.1,271.3 521.8,276.7 517.9,282.0 514.3,287.3 511.1,292.7 508.1,298.0 505.5,303.4 503.2,308.7 501.2,314.1 499.6,319.4 498.2,324.8 497.3,330.1 496.6,335.4 496.3,340.8 496.3,346.1 496.6,351.5 497.3,356.8 498.3,362.1 499.7,367.5 501.3,372.8 503.3,378.1 505.7,383.5 508.3,388.8 511.3,394.1 514.5,399.4 518.1,404.7 522.0,410.0 526.2,415.3 530.6,420.6 535.4,425.8 540.4,431.1 545.8,436.4 551.3,441.6 557.2,446.8 563.3,452.0 569.6,457.2 576.2,462.4 582.9,467.6 589.9,472.7 597.1,477.8 604.5,482.9 612.0,488.0M1044.8,74.0 1028.4,68.5 1011.9,63.0M809.6,57.5 827.2,52.0 844.8,46.5 862.3,41.1 879.4,35.8 894.3,31.3 898.4,32.5 898.2,37.5 897.8,42.8 897.4,48.3 896.9,53.8 896.5,59.3 896.0,64.8 895.6,70.3 895.2,75.8 894.7,81.3 894.3,86.8 893.9,92.4 893.5,97.9 893.1,103.4 892.7,108.9 892.3,114.5 891.9,120.0 891.6,125.5 891.2,131.0 890.9,136.6 890.5,142.1 890.2,147.6 889.9,153.1 889.6,158.7 889.3,164.2 889.0,169.7 888.7,175.3 888.5,180.8 888.2,186.3 888.0,191.8 887.8,197.4 887.6,202.9 887.4,208.4 887.2,213.9 887.0,219.5 886.8,225.0 886.7,230.5 886.6,236.1 886.4,241.6 886.3,247.1 886.2,252.6 886.2,258.2 886.1,263.7 886.0,269.2 886.0,274.7 886.0,280.3 886.0,285.8 886.0,291.3 886.0,296.9 886.0,302.4 886.1,307.9 886.2,313.4 886.2,319.0 886.3,324.5 886.4,330.0 886.6,335.5 886.7,341.1 886.8,346.6 887.0,352.1 887.2,357.7 887.4,363.2 887.6,368.7 887.8,374.2 888.0,379.8 888.2,385.3 888.5,390.8 888.7,396.4 889.0,401.9 889.3,407.4 889.6,412.9 889.9,418.5 890.2,424.0 890.5,429.5 890.9,435.0 891.2,440.6 891.6,446.1 891.9,451.6 892.3,457.2 892.7,462.7 893.1,468.2 893.5,473.7 893.9,479.3 894.3,484.8 894.7,490.3M609.3,129.3 605.2,132.6 600.7,136.1 596.1,139.8 591.2,143.5 586.2,147.4 581.0,151.4 575.8,155.5 570.6,159.7 565.4,164.0 560.2,168.3 555.1,172.7 550.1,177.2 545.2,181.7 540.4,186.3 535.7,190.9 531.2,195.5 526.9,200.2 522.8,205.0 518.8,209.7 515.1,214.5 511.6,219.3 508.3,224.1 505.3,229.0 502.5,233.9 500.0,238.7 497.7,243.7 495.7,248.6 494.0,253.5 492.5,258.5 491.4,263.4 490.5,268.4 489.9,273.4 489.6,278.4 489.6,283.4 489.8,288.4 490.4,293.4 491.3,298.4 492.4,303.4 493.9,308.4 495.7,313.4 497.7,318.4 500.1,323.5 502.7,328.5 505.6,333.5 508.8,338.5 512.3,343.5 516.1,348.5 520.2,353.5 524.5,358.5 529.1,363.5 534.0,368.5 539.1,373.5 544.5,378.5 550.1,383.4 556.0,388.4 562.0,393.3 568.4,398.2 574.9,403.1 581.7,408.0 588.6,412.9 595.8,417.7 603.1,422.6 610.7,427.4 618.3,432.2 626.2,436.9 634.2,441.6 642.3,446.3 650.5,450.9 658.9,455.5 667.3,460.1 675.8,464.6 684.4,469.1 693.0,473.5 701.7,477.8 710.4,482.0 719.1,486.2 727.7,490.3M605.3,137.3 611.8,133.1 618.1,129.1 624.2,125.2 630.1,121.4 635.6,117.8 640.7,114.4M1152.2,111.1 1139.2,108.2 1127.0,105.5 1115.4,103.0 1104.7,100.9 1094.9,99.2 1086.0,97.8 1078.1,96.8 1071.2,96.2 1065.4,96.1 1060.4,96.3 1056.5,97.0 1053.3,98.1 1051.0,99.6 1049.4,101.5 1048.4,103.7 1048.0,106.2 1048.0,109.0 1048.4,112.1 1049.2,115.3 1050.2,118.8 1051.4,122.5 1052.8,126.3 1054.3,130.3 1055.9,134.3 1057.6,138.5 1059.3,142.8 1061.1,147.2 1062.8,151.7 1064.6,156.2 1066.3,160.8 1067.9,165.5 1069.5,170.2 1071.1,174.9 1072.5,179.7 1073.9,184.6 1075.2,189.4 1076.4,194.3 1077.5,199.3 1078.5,204.2 1079.4,209.2 1080.1,214.2 1080.8,219.2 1081.3,224.2 1081.7,229.3 1082.0,234.3 1082.2,239.4 1082.2,244.5 1082.1,249.6 1081.9,254.7 1081.5,259.8 1081.1,264.9 1080.4,270.0 1079.7,275.2 1078.8,280.3 1077.7,285.5 1076.6,290.6 1075.3,295.8 1073.9,300.9 1072.3,306.1 1070.6,311.2 1068.8,316.4 1066.9,321.6 1064.8,326.7 1062.6,331.9 1060.3,337.0 1057.8,342.2 1055.3,347.4 1052.6,352.5 1049.8,357.7 1046.9,362.8 1043.9,367.9 1040.8,373.1 1037.6,378.2 1034.2,383.3 1030.8,388.4 1027.3,393.5 1023.7,398.6 1020.0,403.7 1016.2,408.8 1012.4,413.8 1008.4,418.9 1004.4,423.9 1000.4,428.9 996.2,433.9 992.0,438.8 987.8,443.8 983.5,448.7 979.1,453.6 974.7,458.4 970.3,463.2 965.9,468.0 961.4,472.8 956.9,477.4M764.0,85.3 753.6,90.6 743.3,95.9 733.0,101.2 722.8,106.5 712.7,111.9 702.7,117.3 692.8,122.7 683.2,128.1 673.6,133.6 664.3,139.0 655.1,144.5 646.2,149.9 637.4,155.4 628.9,160.8 620.6,166.3 612.5,171.8 604.7,177.2 597.1,182.7 589.8,188.2 582.7,193.7 576.0,199.2 569.5,204.7 563.3,210.1 557.4,215.6 551.7,221.1 546.4,226.6 541.4,232.1 536.7,237.6 532.4,243.1 528.3,248.6 524.6,254.1 521.2,259.6 518.1,265.1 515.4,270.6 513.0,276.1 510.9,281.6 509.2,287.1 507.8,292.6 506.8,298.1 506.1,303.6 505.7,309.1 505.7,314.6 506.1,320.1 506.8,325.6 507.8,331.1 509.2,336.6 510.9,342.1 513.0,347.6 515.4,353.1 518.1,358.6 521.2,364.1 524.6,369.6 528.3,375.1 532.4,380.6 536.8,386.1 541.5,391.6 546.5,397.1 551.8,402.6 557.4,408.1 563.4,413.6 569.6,419.1 576.1,424.6 582.9,430.1 589.9,435.6 597.3,441.0 604.8,446.5 612.7,452.0 620.8,457.5 629.1,463.0 637.7,468.4 646.5,473.9 655.5,479.4 664.7,484.9 674.1,490.3M808.7,88.7 818.1,85.1 827.2,81.7 835.7,78.8 843.8,76.2 851.2,74.2 858.0,72.8 864.2,72.0 869.8,71.9 874.9,72.4 879.7,73.7 884.2,75.5 888.4,77.8 892.6,80.6 896.7,83.8 900.7,87.4 904.8,91.2 908.8,95.2 912.9,99.5 917.0,103.9 921.1,108.4 925.2,113.0 929.3,117.8 933.4,122.6 937.5,127.5 941.7,132.4 945.8,137.4 949.9,142.4 953.9,147.5 958.0,152.6 962.0,157.7 966.0,162.9 969.9,168.1 973.8,173.3 977.6,178.5 981.4,183.7 985.2,189.0 988.8,194.3 992.4,199.5 996.0,204.8 999.4,210.1 1002.8,215.4 1006.1,220.7 1009.4,226.1 1012.5,231.4 1015.6,236.7 1018.5,242.1 1021.4,247.4 1024.2,252.8 1026.8,258.1 1029.4,263.5 1031.9,268.8 1034.2,274.2 1036.5,279.6 1038.6,284.9 1040.6,290.3 1042.5,295.7 1044.3,301.1 1046.0,306.4 1047.5,311.8 1049.0,317.2 1050.3,322.6 1051.5,327.9 1052.5,333.3 1053.5,338.7 1054.3,344.0 1055.0,349.4 1055.5,354.8 1056.0,360.2 1056.3,365.5 1056.4,370.9 1056.5,376.3 1056.4,381.6 1056.2,387.0 1055.9,392.3 1055.4,397.7 1054.8,403.0 1054.1,408.3 1053.3,413.7 1052.4,419.0 1051.3,424.3 1050.1,429.6 1048.8,434.9 1047.4,440.2 1045.9,445.5 1044.3,450.8 1042.5,456.0 1040.7,461.3 1038.7,466.5 1036.7,471.7 1034.6,476.9 1032.4,482.1 1030.1,487.2 1027.8,492.3M726.0,108.7 716.9,114.0 707.9,119.3 699.0,124.7 690.2,130.0 681.6,135.4 673.1,140.8 664.8,146.2 656.7,151.6 648.8,157.1 641.1,162.5 633.6,167.9 626.3,173.4 619.3,178.8 612.5,184.3 605.9,189.7 599.6,195.2 593.5,200.6 587.7,206.1 582.2,211.6 576.9,217.0 571.9,222.5 567.2,228.0 562.8,233.5 558.7,238.9 554.9,244.4 551.3,249.9 548.1,255.4 545.2,260.9 542.6,266.3 540.3,271.8 538.3,277.3 536.6,282.8 535.3,288.3 534.2,293.8 533.5,299.2 533.1,304.7 533.0,310.2 533.3,315.7 533.8,321.2 534.7,326.7 535.9,332.2 537.4,337.7 539.2,343.1 541.4,348.6 543.8,354.1 546.6,359.6 549.7,365.1 553.1,370.6 556.7,376.0 560.7,381.5 565.0,387.0 569.6,392.5 574.4,398.0 579.6,403.5 585.0,408.9 590.7,414.4 596.6,419.9 602.8,425.3 609.3,430.8 616.0,436.3 623.0,441.7 630.2,447.2 637.6,452.7 645.2,458.1 653.1,463.6 661.2,469.0 669.5,474.5 677.9,479.9 686.6,485.3 695.4,490.7M868.0,61.3 861.1,66.7 854.3,72.0 847.4,77.5 840.6,82.9 833.8,88.4 827.0,93.8 820.3,99.3 813.7,104.8 807.1,110.3 800.6,115.8 794.2,121.3 787.9,126.8 781.7,132.3 775.6,137.8 769.6,143.3 763.7,148.8 757.9,154.3 752.3,159.9 746.8,165.4 741.4,170.9 736.2,176.4 731.1,181.9 726.1,187.4 721.3,192.9 716.7,198.5 712.2,204.0 707.9,209.5 703.8,215.0 699.8,220.5 696.1,226.1 692.5,231.6 689.0,237.1 685.8,242.6 682.8,248.1 679.9,253.7 677.3,259.2 674.8,264.7 672.5,270.2 670.5,275.8 668.6,281.3 667.0,286.8 665.5,292.3 664.3,297.8 663.3,303.4 662.5,308.9 661.9,314.4 661.5,319.9 661.3,325.4 661.3,331.0 661.6,336.5 662.0,342.0 662.7,347.5 663.5,353.1 664.6,358.6 665.9,364.1 667.4,369.6 669.1,375.1 671.0,380.7 673.1,386.2 675.5,391.7 678.0,397.2 680.7,402.7 683.6,408.3 686.7,413.8 689.9,419.3 693.4,424.8 697.1,430.3 700.9,435.9 704.9,441.4 709.1,446.9 713.4,452.4 717.9,457.9 722.6,463.5 727.4,469.0 732.4,474.5 737.6,480.0 742.8,485.5 748.2,491.0M877.3,64.7 878.2,68.9 879.0,73.5 879.8,78.2 880.4,83.0 881.0,88.0 881.7,93.1 882.3,98.2 882.9,103.4 883.5,108.6 884.2,113.9 884.8,119.2 885.4,124.5 886.1,129.8 886.8,135.2 887.4,140.5 888.1,145.9 888.8,151.3 889.5,156.7 890.3,162.1 891.0,167.5 891.7,173.0 892.5,178.4 893.2,183.8 894.0,189.3 894.7,194.7 895.5,200.2 896.3,205.6 897.1,211.1 897.9,216.5 898.7,222.0 899.5,227.5 900.3,232.9 901.1,238.4 901.9,243.9 902.7,249.3 903.5,254.8 904.3,260.3 905.0,265.7 905.8,271.2 906.6,276.7 907.4,282.2 908.2,287.7 909.0,293.1 909.7,298.6 910.5,304.1 911.3,309.6 912.0,315.0 912.8,320.5 913.5,326.0 914.2,331.5 914.9,337.0 915.6,342.4 916.3,347.9 917.0,353.4 917.6,358.9 918.3,364.4 918.9,369.8 919.5,375.3 920.2,380.8 920.7,386.3 921.3,391.7 921.9,397.2 922.4,402.7 922.9,408.1 923.4,413.6 923.9,419.1 924.4,424.5 924.8,430.0 925.3,435.4 925.7,440.9 926.1,446.3 926.4,451.8 926.8,457.2 927.1,462.7 927.4,468.1 927.7,473.5 928.0,478.9 928.2,484.4 928.5,489.8M852.0,85.3 854.1,88.4 855.9,91.8 857.6,95.5 859.2,99.4 860.7,103.5 862.1,107.8 863.5,112.2 864.8,116.8 866.1,121.4 867.4,126.1 868.8,130.9 870.1,135.7 871.4,140.6 872.7,145.6 874.1,150.6 875.4,155.6 876.8,160.7 878.2,165.8 879.6,170.9 881.0,176.0 882.5,181.2 883.9,186.4 885.4,191.6 886.8,196.8 888.3,202.1 889.8,207.3 891.3,212.6 892.8,217.8 894.3,223.1 895.9,228.4 897.4,233.7 898.9,239.0 900.4,244.3 902.0,249.6 903.5,254.9 905.0,260.2 906.6,265.5 908.1,270.9 909.6,276.2 911.1,281.5 912.6,286.9 914.1,292.2 915.6,297.5 917.1,302.9 918.6,308.2 920.0,313.5 921.5,318.9 922.9,324.2 924.3,329.6 925.7,334.9 927.1,340.3 928.4,345.6 929.7,350.9 931.0,356.3 932.3,361.6 933.6,366.9 934.8,372.3 936.0,377.6 937.2,382.9 938.3,388.2 939.4,393.5 940.5,398.8 941.6,404.1 942.6,409.4 943.6,414.7 944.5,420.0 945.5,425.3 946.4,430.5 947.2,435.8 948.1,441.0 948.9,446.3 949.6,451.5 950.3,456.7 951.0,461.8 951.7,467.0 952.3,472.1 952.9,477.2 953.5,482.3 954.0,487.4 954.5,492.4M861.3,78.7 855.1,83.8 848.8,88.9 842.6,94.2 836.3,99.4 830.1,104.7 823.9,110.1 817.7,115.4 811.6,120.8 805.6,126.2 799.6,131.6 793.7,137.0 787.9,142.4 782.2,147.8 776.5,153.3 771.0,158.7 765.6,164.1 760.3,169.6 755.1,175.1 750.0,180.5 745.1,186.0 740.3,191.5 735.6,196.9 731.1,202.4 726.7,207.9 722.5,213.4 718.4,218.8 714.5,224.3 710.7,229.8 707.1,235.3 703.7,240.8 700.5,246.3 697.4,251.8 694.5,257.2 691.8,262.7 689.2,268.2 686.9,273.7 684.7,279.2 682.7,284.7 680.9,290.2 679.3,295.7 677.9,301.2 676.7,306.7 675.7,312.2 674.9,317.7 674.3,323.2 673.9,328.7 673.7,334.2 673.6,339.6 673.8,345.1 674.2,350.6 674.8,356.1 675.5,361.6 676.5,367.1 677.7,372.6 679.0,378.1 680.6,383.6 682.3,389.1 684.3,394.6 686.4,400.1 688.7,405.5 691.2,411.0 693.9,416.5 696.7,422.0 699.7,427.5 702.9,433.0 706.3,438.4 709.9,443.9 713.6,449.4 717.4,454.8 721.5,460.3 725.6,465.8 730.0,471.2 734.4,476.7 739.0,482.1 743.8,487.6M822.7,134.7 821.7,139.7 820.8,144.8 819.9,149.9 819.1,155.1 818.3,160.2 817.5,165.4 816.8,170.6 816.2,175.9 815.6,181.1 815.1,186.4 814.7,191.6 814.3,196.9 814.0,202.2 813.8,207.5 813.6,212.9 813.5,218.2 813.4,223.5 813.5,228.8 813.6,234.2 813.8,239.5 814.0,244.9 814.3,250.2 814.7,255.6 815.2,261.0 815.7,266.3 816.4,271.7 817.0,277.1 817.8,282.5 818.6,287.8 819.5,293.2 820.5,298.6 821.5,304.0 822.6,309.4 823.7,314.7 825.0,320.1 826.3,325.5 827.6,330.9 829.0,336.3 830.5,341.6 832.0,347.0 833.6,352.4 835.3,357.8 837.0,363.2 838.8,368.5 840.6,373.9 842.4,379.3 844.3,384.6 846.3,390.0 848.3,395.4 850.4,400.7 852.4,406.1 854.6,411.4 856.8,416.7 859.0,422.1 861.2,427.4 863.5,432.7 865.8,438.0 868.1,443.3 870.5,448.6 872.8,453.9 875.2,459.1 877.7,464.4 880.1,469.6 882.6,474.8 885.0,480.0 887.5,485.2 890.0,490.4M773.3,126.7 770.5,124.7 767.4,123.0 764.0,121.6 760.2,120.4 756.0,119.5 751.3,118.9 746.2,118.7 740.6,118.7 734.5,119.1 727.9,119.7 720.7,120.7 713.1,121.9 704.9,123.4 696.3,125.2 687.2,127.3 677.7,129.5 667.8,132.0 657.5,134.7 646.9,137.6 636.0,140.7 624.9,143.9 613.5,147.2 601.9,150.7 590.2,154.4 578.4,158.1 566.5,162.0 554.6,165.9 542.6,169.9 530.7,174.0 518.8,178.2 506.9,182.4 495.2,186.7 483.6,191.1 472.1,195.5 460.7,199.9 449.5,204.4 438.6,209.0 427.8,213.5 417.3,218.1 407.0,222.8 397.0,227.4 387.3,232.1 377.9,236.8 368.7,241.6M1440.4,246.3 1443.2,251.1 1445.7,255.9 1447.8,260.7 1449.6,265.5 1451.0,270.3 1452.1,275.2 1452.8,280.0 1453.1,284.9 1453.1,289.7 1452.7,294.6 1451.9,299.5 1450.7,304.3 1449.2,309.2 1447.2,314.1 1444.9,319.0 1442.3,323.9 1439.2,328.8 1435.8,333.6 1432.1,338.5 1427.9,343.4 1423.5,348.3 1418.6,353.1 1413.4,358.0 1407.9,362.8 1402.0,367.7 1395.8,372.5 1389.3,377.3 1382.4,382.1 1375.3,386.9 1367.9,391.7 1360.1,396.5 1352.1,401.2 1343.8,406.0 1335.3,410.7 1326.5,415.3 1317.5,420.0 1308.3,424.6 1298.8,429.2 1289.2,433.8 1279.4,438.3 1269.4,442.8 1259.3,447.2 1249.1,451.6 1238.7,455.9 1228.3,460.2 1217.8,464.4 1207.3,468.6 1196.7,472.6 1186.1,476.6 1175.6,480.5 1165.1,484.3 1154.7,488.0 1144.3,491.6M728.7,179.3 721.3,182.9 713.9,186.6 706.6,190.3 699.2,194.2 691.9,198.1 684.6,202.0 677.3,206.1 670.2,210.1 663.1,214.3 656.0,218.4 649.1,222.7 642.3,226.9 635.5,231.2 628.9,235.5 622.4,239.9 616.1,244.3 609.9,248.7 603.8,253.1 597.9,257.5 592.2,262.0 586.6,266.5 581.2,271.0 576.0,275.5 570.9,280.1 566.1,284.6 561.5,289.2 557.0,293.8 552.8,298.3 548.8,302.9 545.0,307.5 541.4,312.1 538.0,316.7 534.8,321.3 531.9,325.9 529.2,330.5 526.7,335.1 524.5,339.6 522.5,344.2 520.7,348.8 519.1,353.4 517.7,357.9 516.6,362.5 515.7,367.0 515.1,371.5 514.6,376.0 514.3,380.5 514.3,385.0 514.5,389.4 514.9,393.8 515.4,398.2 516.2,402.6 517.1,407.0 518.3,411.3 519.5,415.6 521.0,419.8 522.6,424.0 524.3,428.1 526.1,432.3 528.1,436.3 530.1,440.3 532.3,444.3 534.5,448.1 536.7,451.9 539.0,455.7 541.2,459.3 543.5,462.9 545.7,466.4 547.8,469.8 549.9,473.0 551.8,476.2 553.5,479.2 555.1,482.1 556.4,484.8 557.4,487.4 558.1,489.9 558.5,492.1M1156.0,491.1 1155.1,488.8 1154.4,486.3 1153.9,483.6 1153.7,480.8M960.0,75.3 954.1,69.8 948.3,64.4 942.4,58.9 936.5,53.5 930.7,48.2 925.0,43.0 919.9,38.1 916.9,34.5 922.3,34.4M875.1,37.9 865.5,42.8 855.1,48.0 844.4,53.3 833.6,58.7 822.7,64.1 811.9,69.6 801.1,75.1 790.4,80.6 779.8,86.0 769.2,91.5 758.8,97.1 748.5,102.6 738.3,108.1 728.2,113.6 718.3,119.1 708.6,124.6 699.0,130.1 689.6,135.7 680.4,141.2 671.4,146.7 662.6,152.2 654.0,157.7 645.6,163.3 637.4,168.8 629.5,174.3 621.8,179.8 614.3,185.3 607.1,190.9 600.2,196.4 593.5,201.9 587.1,207.4 581.0,213.0 575.1,218.5 569.6,224.0 564.3,229.5 559.3,235.1 554.7,240.6 550.3,246.1 546.3,251.6 542.5,257.2 539.1,262.7 536.0,268.2 533.2,273.7 530.7,279.3 528.6,284.8 526.8,290.3 525.3,295.8 524.2,301.4 523.4,306.9 522.9,312.4 522.8,317.9 522.9,323.5 523.5,329.0 524.3,334.5 525.5,340.0 527.0,345.6 528.9,351.1 531.1,356.6 533.6,362.1 536.4,367.7 539.5,373.2 543.0,378.7 546.8,384.2 550.9,389.8 555.3,395.3 560.0,400.8 565.0,406.3 570.3,411.9 575.9,417.4 581.8,422.9 588.0,428.4 594.4,434.0 601.1,439.5 608.1,445.0 615.3,450.5 622.8,456.1 630.5,461.6 638.5,467.1 646.7,472.6 655.1,478.2 663.8,483.7 672.6,489.2M1038.7,88.0 1026.8,82.5 1014.8,77.0 1002.6,71.4 990.4,65.9 978.2,60.4 965.8,54.9 953.5,49.4 941.1,43.9 928.9,38.5 917.2,33.3M896.2,30.5 893.5,34.5 888.9,39.8 884.2,45.3 879.4,50.8 874.7,56.3 869.9,61.8 865.2,67.3 860.5,72.8 855.9,78.3 851.2,83.8 846.7,89.4 842.1,94.9 837.7,100.4 833.2,105.9 828.9,111.5 824.6,117.0 820.4,122.5 816.2,128.0 812.1,133.6 808.1,139.1 804.2,144.6 800.4,150.2 796.6,155.7 793.0,161.2 789.4,166.7 786.0,172.3 782.6,177.8 779.3,183.3 776.2,188.8 773.2,194.4 770.3,199.9 767.5,205.4 764.8,211.0 762.2,216.5 759.8,222.0 757.5,227.5 755.3,233.1 753.2,238.6 751.3,244.1 749.5,249.6 747.8,255.2 746.3,260.7 744.9,266.2 743.7,271.8 742.6,277.3 741.6,282.8 740.8,288.3 740.1,293.9 739.5,299.4 739.1,304.9 738.9,310.5 738.8,316.0 738.8,321.5 739.0,327.0 739.3,332.6 739.8,338.1 740.4,343.6 741.1,349.1 742.0,354.7 743.0,360.2 744.2,365.7 745.5,371.3 746.9,376.8 748.5,382.3 750.2,387.8 752.1,393.4 754.1,398.9 756.2,404.4 758.4,410.0 760.8,415.5 763.3,421.0 765.9,426.5 768.6,432.1 771.5,437.6 774.5,443.1 777.5,448.6 780.7,454.2 784.0,459.7 787.4,465.2 790.9,470.8 794.5,476.3 798.2,481.8 802.0,487.3M1062.0,104.0 1056.2,103.9 1051.2,104.1 1046.8,104.8 1043.1,105.8 1040.0,107.1 1037.4,108.8 1035.3,110.8 1033.6,113.1 1032.3,115.6 1031.3,118.5 1030.6,121.5 1030.0,124.7 1029.7,128.1 1029.5,131.7 1029.4,135.4 1029.4,139.3 1029.4,143.3 1029.5,147.4 1029.7,151.5 1029.8,155.8 1029.9,160.2 1030.1,164.6 1030.2,169.1 1030.2,173.6 1030.3,178.2 1030.2,182.8 1030.1,187.5 1030.0,192.3 1029.8,197.0 1029.6,201.8 1029.2,206.6 1028.8,211.5 1028.3,216.3 1027.8,221.2 1027.1,226.2 1026.4,231.1 1025.6,236.0 1024.7,241.0 1023.8,246.0 1022.7,251.0 1021.6,256.0 1020.4,261.0 1019.1,266.0 1017.7,271.1 1016.2,276.1 1014.6,281.2 1013.0,286.2 1011.3,291.3 1009.5,296.3 1007.6,301.4 1005.7,306.5 1003.6,311.6 1001.5,316.6 999.4,321.7 997.1,326.8 994.8,331.9 992.4,336.9 990.0,342.0 987.4,347.1 984.8,352.1 982.2,357.2 979.5,362.2 976.7,367.3 973.9,372.3 971.1,377.4 968.1,382.4 965.2,387.4 962.2,392.4 959.1,397.4 956.1,402.4 952.9,407.3 949.8,412.3 946.6,417.2 943.4,422.1 940.1,427.0 936.9,431.8 933.6,436.7 930.3,441.5 927.0,446.3 923.6,451.0 920.3,455.7 916.9,460.4 913.6,465.0 910.2,469.6 906.9,474.1 903.5,478.5 900.2,482.9 896.8,487.2 893.4,491.5M1066.0,108.0 1058.2,102.9 1050.4,97.8 1042.7,92.9 1035.0,88.0 1027.5,83.2 1020.3,78.6 1013.4,74.2 1007.1,70.0 1001.5,66.2 997.1,62.9 994.3,60.1 993.5,58.1M813.0,57.0 818.8,56.9 821.7,57.8 822.0,59.7 820.5,62.4 817.5,65.6 813.5,69.4 808.8,73.5 803.5,77.9 798.0,82.5 792.2,87.2 786.3,92.1 780.3,97.0 774.3,102.1 768.2,107.2 762.2,112.3 756.2,117.5 750.3,122.8 744.5,128.0 738.7,133.3 733.1,138.6 727.5,143.9 722.1,149.3 716.8,154.6 711.7,160.0 706.7,165.3 701.8,170.7 697.1,176.1 692.6,181.5 688.2,186.9 684.0,192.3 680.0,197.8 676.2,203.2 672.6,208.6 669.1,214.0 665.9,219.5 662.8,224.9 660.0,230.4 657.3,235.8 654.9,241.3 652.7,246.7 650.7,252.2 648.9,257.6 647.3,263.1 645.9,268.5 644.8,274.0 643.8,279.4 643.1,284.9 642.6,290.3 642.4,295.8 642.3,301.3 642.5,306.7 642.9,312.2 643.6,317.7 644.4,323.1 645.5,328.6 646.8,334.0 648.3,339.5 650.0,345.0 652.0,350.4 654.1,355.9 656.5,361.3 659.1,366.8 661.9,372.3 664.9,377.7 668.1,383.2 671.5,388.6 675.1,394.1 678.9,399.5 682.9,405.0 687.0,410.4 691.4,415.9 695.9,421.3 700.6,426.7 705.5,432.2 710.5,437.6 715.7,443.0 721.0,448.4 726.5,453.8 732.2,459.3 737.9,464.7 743.9,470.0 749.9,475.4 756.0,480.8 762.3,486.2 768.7,491.5M1069.3,90.7 1060.5,89.3 1052.8,88.4 1046.3,88.0 1040.8,88.0 1036.5,88.6 1033.2,89.6 1030.8,91.1 1029.2,93.0 1028.3,95.2 1028.1,97.9 1028.3,100.8 1028.9,104.0 1029.9,107.4 1031.2,111.1 1032.6,115.0 1034.3,119.0 1036.0,123.1 1037.9,127.4 1039.8,131.8 1041.7,136.2 1043.7,140.8 1045.6,145.4 1047.5,150.1 1049.4,154.8 1051.3,159.7 1053.1,164.5 1054.8,169.4 1056.4,174.3 1058.0,179.3 1059.5,184.3 1060.9,189.3 1062.1,194.3 1063.3,199.4 1064.4,204.5 1065.4,209.6 1066.2,214.7 1067.0,219.8 1067.6,224.9 1068.1,230.1 1068.5,235.3 1068.7,240.4 1068.9,245.6 1068.9,250.8 1068.7,256.0 1068.5,261.2 1068.1,266.4 1067.6,271.7 1067.0,276.9 1066.2,282.1 1065.3,287.3 1064.3,292.6 1063.1,297.8 1061.8,303.1 1060.4,308.3 1058.9,313.5 1057.3,318.8 1055.5,324.0 1053.6,329.3 1051.6,334.5 1049.4,339.7 1047.2,345.0 1044.8,350.2 1042.3,355.5 1039.7,360.7 1037.0,365.9 1034.2,371.1 1031.3,376.4 1028.3,381.6 1025.2,386.8 1022.0,392.0 1018.7,397.2 1015.4,402.3 1011.9,407.5 1008.4,412.7 1004.7,417.8 1001.1,423.0 997.3,428.1 993.5,433.2 989.6,438.3 985.6,443.4 981.6,448.4 977.5,453.5 973.4,458.5 969.3,463.4 965.1,468.4 960.9,473.3 956.7,478.2 952.4,483.0 948.1,487.8 943.8,492.5M1155.3,111.3 1138.7,106.2 1122.1,101.2 1105.6,96.2 1089.1,91.3 1072.9,86.5 1056.9,81.9 1041.3,77.5 1026.3,73.2 1012.0,69.3 998.7,65.8 986.7,62.8 976.2,60.4 967.5,58.9 960.8,58.3 955.9,58.6 952.7,59.9 950.8,62.1 949.9,65.0 949.7,68.4 949.9,72.2 950.5,76.4 951.3,80.8 952.2,85.4 953.2,90.1 954.3,95.0 955.4,99.9 956.6,104.9 957.7,110.0 958.8,115.2 959.9,120.3 961.0,125.5 962.0,130.8 963.0,136.1 964.0,141.3 964.9,146.7 965.8,152.0 966.7,157.3 967.5,162.7 968.2,168.0 968.9,173.4 969.5,178.8 970.1,184.2 970.7,189.6 971.1,195.0 971.6,200.4 971.9,205.8 972.2,211.2 972.5,216.7 972.7,222.1 972.8,227.5 972.9,233.0 972.9,238.4 972.8,243.8 972.7,249.3 972.5,254.7 972.3,260.2 972.0,265.6 971.7,271.1 971.3,276.5 970.8,282.0 970.3,287.4 969.7,292.9 969.0,298.3 968.3,303.8 967.6,309.2 966.8,314.7 965.9,320.1 965.0,325.6 964.0,331.0 963.0,336.5 961.9,342.0 960.8,347.4 959.6,352.9 958.3,358.3 957.1,363.8 955.7,369.2 954.4,374.7 952.9,380.1 951.5,385.6 950.0,391.0 948.4,396.4 946.8,401.9 945.2,407.3 943.6,412.8 941.9,418.2 940.1,423.6 938.4,429.0 936.6,434.5 934.8,439.9 932.9,445.3 931.1,450.7 929.2,456.1 927.3,461.5 925.3,466.9 923.4,472.2 921.4,477.6 919.4,483.0 917.4,488.3M1230.1,138.7 1215.0,133.3 1199.6,127.8 1183.9,122.3 1168.1,116.9 1152.0,111.5 1135.7,106.0 1119.3,100.6 1102.8,95.2 1086.2,89.9 1069.5,84.5 1052.7,79.2 1036.0,74.0 1019.4,68.8 1003.0,63.7 987.0,58.8 971.5,54.1 957.0,49.8 944.1,46.1 933.8,43.6 926.8,42.9 923.1,44.0 921.5,46.8 921.0,50.6 921.0,55.0 921.2,59.8 921.5,64.7 921.8,69.8 922.3,75.0 922.7,80.3 923.1,85.6 923.5,90.9 923.9,96.3 924.3,101.7 924.7,107.1 925.0,112.6 925.4,118.0 925.7,123.4 926.0,128.9 926.3,134.4 926.6,139.8 926.8,145.3 927.1,150.8 927.3,156.3 927.5,161.8 927.6,167.2 927.8,172.7 927.9,178.2 928.0,183.7 928.1,189.2 928.1,194.7 928.2,200.2 928.2,205.7 928.2,211.2 928.1,216.7 928.1,222.2 928.0,227.7 927.9,233.2 927.8,238.7 927.6,244.3 927.5,249.8 927.3,255.3 927.1,260.8 926.8,266.3 926.6,271.8 926.3,277.3 926.0,282.8 925.7,288.3 925.3,293.8 925.0,299.3 924.6,304.9 924.2,310.4 923.8,315.9 923.3,321.4 922.9,326.9 922.4,332.4 921.9,337.9 921.4,343.4 920.8,348.9 920.3,354.4 919.7,360.0 919.2,365.5 918.6,371.0 918.0,376.5 917.4,382.0 916.7,387.5 916.1,393.0 915.4,398.5 914.7,404.0 914.1,409.5 913.4,415.0 912.7,420.5 912.0,426.0 911.2,431.5 910.5,437.0 909.8,442.5 909.0,448.0 908.3,453.5 907.5,459.0 906.8,464.5M1251.7,150.8 1244.5,150.1 1237.8,149.6 1231.5,149.3 1225.8,149.2 1220.6,149.3 1215.8,149.7 1211.5,150.2 1207.7,151.0 1204.3,152.0 1201.3,153.1 1198.6,154.5 1196.3,156.1 1194.4,157.8 1192.7,159.7 1191.3,161.8 1190.2,164.0 1189.3,166.4 1188.5,169.0 1187.9,171.6 1187.5,174.4 1187.2,177.3 1187.0,180.4 1186.8,183.5 1186.7,186.7 1186.6,190.1 1186.6,193.5 1186.6,197.0 1186.5,200.5 1186.4,204.2 1186.3,207.9 1186.1,211.7 1185.9,215.5 1185.6,219.4 1185.2,223.3 1184.8,227.3 1184.2,231.3 1183.6,235.3 1182.8,239.4 1181.9,243.6 1180.9,247.7 1179.8,251.9 1178.5,256.1 1177.2,260.4 1175.7,264.6 1174.0,268.9 1172.3,273.2 1170.3,277.5 1168.3,281.9 1166.1,286.2 1163.8,290.6 1161.3,294.9 1158.7,299.3 1155.9,303.7 1153.0,308.1 1150.0,312.5 1146.8,316.9 1143.5,321.3 1140.0,325.7 1136.4,330.1 1132.7,334.4 1128.9,338.8 1124.9,343.2 1120.9,347.6 1116.7,351.9 1112.3,356.3 1107.9,360.6 1103.4,365.0 1098.7,369.3 1094.0,373.6 1089.2,377.9 1084.2,382.1 1079.2,386.3 1074.1,390.5 1068.9,394.7 1063.7,398.9 1058.4,403.0 1053.0,407.1 1047.6,411.1 1042.1,415.1 1036.6,419.1 1031.0,423.0 1025.4,426.8 1019.8,430.7 1014.1,434.4 1008.4,438.1 1002.8,441.7 997.1,445.2 991.4,448.7 985.7,452.1 980.0,455.4 974.3,458.6 968.7,461.7 963.0,464.7 957.4,467.6 951.8,470.3 946.2,472.9 940.7,475.4 935.2,477.7 929.7,479.9 924.2,482.0M1306.7,189.2 1309.9,188.0 1313.4,187.0 1317.2,186.1 1321.2,185.4 1325.4,184.8 1330.0,184.3 1334.9,184.0M469.4,183.8 475.0,183.8 480.2,183.9 485.2,184.2 489.9,184.6 494.3,185.2 498.4,185.9 502.3,186.8 505.9,187.8 509.2,188.9 512.4,190.1 515.3,191.5 518.0,193.1 520.6,194.7 523.0,196.5 525.2,198.3 527.4,200.3 529.4,202.4 531.3,204.6 533.1,206.9 534.8,209.3 536.5,211.8 538.2,214.3 539.8,217.0 541.4,219.7 542.9,222.5 544.5,225.4 546.1,228.3 547.8,231.3 549.4,234.3 551.1,237.5 552.9,240.6 554.7,243.8 556.6,247.1 558.5,250.4 560.6,253.8 562.7,257.1 564.9,260.6 567.2,264.0 569.6,267.5 572.1,271.0 574.8,274.6 577.5,278.1 580.3,281.7 583.3,285.3 586.3,289.0 589.5,292.6 592.8,296.3 596.2,299.9 599.7,303.6 603.4,307.3 607.1,311.0 611.0,314.7 615.0,318.4 619.1,322.1 623.3,325.8 627.6,329.5 632.1,333.2 636.6,336.9 641.2,340.5 646.0,344.2 650.8,347.9 655.7,351.5 660.8,355.1 665.9,358.8 671.1,362.4 676.3,365.9 681.7,369.5 687.1,373.0 692.6,376.5 698.1,379.9 703.7,383.4 709.4,386.8 715.1,390.1 720.8,393.4 726.6,396.7 732.4,399.9 738.3,403.1 744.2,406.2 750.1,409.3 756.0,412.3 761.9,415.2 767.8,418.1 773.8,420.9 779.7,423.6 785.6,426.3 791.5,428.9 797.4,431.4 803.3,433.8 809.2,436.1 815.0,438.3 820.8,440.4 826.6,442.4M612.7,164.7 621.5,162.5 630.1,160.5 638.4,158.6 646.5,157.0 654.3,155.5 661.8,154.2 669.0,153.0 675.9,152.1 682.4,151.4 688.7,150.9 694.7,150.6 700.3,150.5 705.7,150.7 710.7,151.0 715.5,151.5 720.1,152.3 724.4,153.3 728.4,154.4 732.3,155.8 735.9,157.3 739.4,159.0 742.7,160.9 745.8,162.9 748.8,165.2 751.8,167.5 754.6,170.0 757.3,172.7 760.0,175.4 762.6,178.3 765.2,181.3 767.7,184.4 770.2,187.6 772.7,190.9 775.1,194.3 777.6,197.7 780.1,201.3 782.6,204.9 785.1,208.6 787.6,212.3 790.1,216.1 792.7,219.9 795.3,223.8 798.0,227.8 800.6,231.8 803.3,235.8 806.1,239.9 808.8,244.0 811.7,248.1 814.5,252.2 817.4,256.4 820.4,260.6 823.3,264.9 826.3,269.1 829.4,273.4 832.5,277.7 835.6,282.0 838.7,286.3 841.9,290.7 845.2,295.0 848.4,299.4 851.7,303.7 855.0,308.1 858.3,312.5 861.7,316.8 865.1,321.2 868.5,325.6 871.9,329.9 875.3,334.3 878.8,338.7 882.2,343.0 885.7,347.4 889.2,351.7 892.7,356.0 896.2,360.4 899.7,364.7 903.2,368.9 906.7,373.2 910.2,377.5 913.7,381.7 917.1,385.9 920.6,390.1 924.1,394.2 927.6,398.4 931.0,402.4 934.5,406.5 937.9,410.5 941.3,414.5 944.7,418.4 948.1,422.3 951.5,426.1 954.8,429.9 958.2,433.6 961.5,437.3 964.9,440.9 968.2,444.4 971.6,447.8 974.9,451.2 978.2,454.4 981.6,457.6 985.0,460.7M594.0,173.0 602.8,170.8 611.4,168.7 619.7,166.8 627.9,165.0 635.8,163.4 643.4,161.9 650.8,160.7 657.9,159.6 664.7,158.7 671.2,158.0 677.5,157.5 683.5,157.2 689.2,157.1 694.6,157.1 699.8,157.4 704.7,157.9 709.4,158.5 713.8,159.4 718.0,160.4 722.0,161.7 725.9,163.1 729.5,164.6 733.1,166.4 736.4,168.3 739.7,170.3 742.8,172.5 745.8,174.8 748.8,177.3 751.7,179.9 754.5,182.6 757.2,185.4 760.0,188.3 762.7,191.4 765.4,194.5 768.0,197.7 770.7,201.0 773.4,204.4 776.0,207.8 778.7,211.3 781.4,214.9 784.1,218.5 786.9,222.2 789.6,226.0 792.4,229.8 795.3,233.6 798.1,237.5 801.0,241.4 804.0,245.4 806.9,249.3 810.0,253.4 813.0,257.4 816.1,261.5 819.2,265.6 822.4,269.7 825.6,273.9 828.8,278.0 832.1,282.2 835.4,286.4 838.7,290.6 842.1,294.8 845.5,299.1 848.9,303.3 852.4,307.5 855.8,311.8 859.4,316.0 862.9,320.3 866.4,324.5 870.0,328.8 873.6,333.0 877.2,337.3 880.8,341.5 884.4,345.7 888.0,349.9 891.7,354.2 895.3,358.4 899.0,362.5 902.6,366.7 906.3,370.8 909.9,375.0 913.5,379.1 917.2,383.2 920.8,387.2 924.4,391.2 928.0,395.2 931.6,399.2 935.2,403.1 938.8,407.0 942.4,410.8 945.9,414.6 949.5,418.4 953.0,422.1 956.6,425.7 960.1,429.3 963.6,432.8 967.1,436.3 970.6,439.7 974.1,443.0 977.6,446.2 981.1,449.3 984.6,452.4M1035.0,76.0 1029.3,75.9 1025.1,76.5 1022.5,77.6 1021.1,79.3 1020.9,81.5 1021.6,84.2 1023.1,87.2 1025.2,90.6 1027.8,94.2 1030.7,98.1 1034.0,102.2 1037.4,106.4 1041.1,110.8 1044.8,115.3 1048.6,119.9 1052.4,124.6 1056.3,129.4 1060.1,134.3 1063.9,139.2 1067.7,144.1 1071.3,149.1 1075.0,154.1 1078.5,159.2 1081.9,164.3 1085.2,169.4 1088.4,174.6 1091.5,179.8 1094.5,184.9 1097.3,190.1 1100.0,195.4 1102.5,200.6 1104.9,205.8 1107.1,211.1 1109.2,216.4 1111.1,221.6 1112.9,226.9 1114.5,232.2 1115.9,237.5 1117.2,242.8 1118.2,248.1 1119.1,253.5 1119.9,258.8 1120.4,264.1 1120.8,269.4 1121.0,274.8 1121.0,280.1 1120.9,285.4 1120.6,290.8 1120.1,296.1 1119.4,301.5 1118.5,306.8 1117.4,312.1 1116.2,317.5 1114.8,322.8 1113.2,328.2 1111.5,333.5 1109.6,338.9 1107.5,344.2 1105.2,349.6 1102.8,354.9 1100.2,360.2 1097.4,365.6 1094.5,370.9 1091.5,376.2 1088.2,381.6 1084.9,386.9 1081.3,392.2 1077.7,397.5 1073.9,402.8 1069.9,408.1 1065.8,413.4 1061.6,418.7 1057.3,424.0 1052.9,429.2 1048.3,434.5 1043.6,439.8 1038.9,445.0 1034.0,450.2 1029.0,455.4 1023.9,460.6 1018.8,465.8 1013.6,470.9 1008.3,476.0 1002.9,481.1 997.5,486.2 992.1,491.3M803.3,66.7 807.1,67.4 809.1,68.8 809.7,70.9 809.1,73.6 807.6,76.7 805.4,80.3 802.7,84.1 799.5,88.2 796.1,92.5 792.5,97.0 788.7,101.6 784.8,106.3 780.9,111.1 777.0,116.0 773.0,120.9 769.1,126.0 765.2,131.0 761.4,136.1 757.6,141.3 753.9,146.4 750.3,151.6 746.8,156.8 743.4,162.1 740.1,167.3 736.9,172.6 733.9,177.9 730.9,183.2 728.1,188.5 725.4,193.8 722.9,199.2 720.5,204.5 718.2,209.9 716.1,215.2 714.2,220.6 712.4,226.0 710.7,231.3 709.2,236.7 707.9,242.1 706.7,247.5 705.7,252.9 704.8,258.3 704.1,263.7 703.6,269.1 703.3,274.5 703.1,279.9 703.1,285.3 703.2,290.7 703.5,296.1 704.0,301.5 704.6,306.9 705.4,312.3 706.4,317.7 707.6,323.1 708.9,328.5 710.3,333.9 712.0,339.3 713.8,344.8 715.7,350.2 717.8,355.6 720.1,361.0 722.5,366.4 725.0,371.8 727.8,377.2 730.6,382.6 733.6,388.0 736.8,393.3 740.0,398.7 743.4,404.1 747.0,409.5 750.6,414.9 754.4,420.2 758.4,425.6 762.4,431.0 766.5,436.3 770.8,441.6 775.1,447.0 779.6,452.3 784.1,457.6 788.7,462.9 793.5,468.2 798.2,473.5 803.1,478.8 808.1,484.0 813.0,489.2M741.3,174.0 748.4,171.3 755.5,168.8 762.5,166.4 769.3,164.1 776.1,162.0 782.7,160.1 789.3,158.4 795.7,156.8 802.0,155.4 808.2,154.1 814.2,153.1 820.2,152.3 826.0,151.7 831.7,151.3 837.4,151.1 842.9,151.1 848.3,151.3 853.7,151.7 859.0,152.4 864.2,153.2 869.4,154.3 874.6,155.5 879.7,156.9 884.8,158.5 889.9,160.3 894.9,162.3 900.0,164.4 905.0,166.7 910.1,169.1 915.2,171.6 920.2,174.3 925.3,177.1 930.4,180.0 935.5,183.1 940.6,186.2 945.7,189.4 950.8,192.7 955.9,196.2 961.0,199.6 966.1,203.2 971.2,206.8 976.3,210.5 981.4,214.3 986.5,218.1 991.5,221.9 996.5,225.8 1001.5,229.8 1006.5,233.8 1011.4,237.8 1016.2,241.9 1021.1,246.0 1025.8,250.1 1030.6,254.3 1035.2,258.5 1039.8,262.7 1044.4,266.9 1048.8,271.2 1053.2,275.5 1057.6,279.8 1061.8,284.1 1066.0,288.4 1070.0,292.7 1074.0,297.0 1077.9,301.4 1081.7,305.7 1085.4,310.1 1089.0,314.5 1092.5,318.8 1095.8,323.2 1099.1,327.5 1102.3,331.9 1105.4,336.3 1108.3,340.6 1111.2,345.0 1113.9,349.3 1116.5,353.6 1119.0,357.9 1121.4,362.2 1123.7,366.5 1125.9,370.8 1127.9,375.0 1129.9,379.3 1131.7,383.5 1133.4,387.7 1135.1,391.8 1136.6,395.9 1138.0,400.0 1139.4,404.1 1140.6,408.1 1141.8,412.1 1142.9,416.1 1143.9,420.0 1144.8,423.8 1145.7,427.6 1146.5,431.3 1147.3,435.0 1148.1,438.6 1148.8,442.2 1149.6,445.6 1150.3,449.0M668.0,106.0 678.1,101.4M1112.7,96.9 1096.7,92.6 1081.2,88.4 1066.2,84.5 1051.9,80.9 1038.6,77.6 1026.2,74.7 1015.2,72.3 1005.5,70.5 997.4,69.4 990.9,68.9 985.9,69.2 982.4,70.2 980.0,71.8 978.7,74.1 978.3,76.8 978.5,80.0 979.1,83.5 980.1,87.4 981.4,91.5 982.9,95.8 984.6,100.2 986.3,104.8 988.1,109.5 989.9,114.2 991.8,119.1 993.6,124.0 995.4,129.0 997.2,134.0 999.0,139.1 1000.7,144.2 1002.4,149.4 1004.0,154.5 1005.6,159.7 1007.0,165.0 1008.5,170.2 1009.8,175.4 1011.1,180.7 1012.2,186.0 1013.3,191.3 1014.3,196.6 1015.3,201.9 1016.1,207.2 1016.9,212.6 1017.5,217.9 1018.1,223.3 1018.6,228.6 1018.9,234.0 1019.2,239.3 1019.4,244.7 1019.5,250.1 1019.5,255.4 1019.4,260.8 1019.2,266.2 1018.9,271.6 1018.5,277.0 1018.0,282.4 1017.4,287.7 1016.7,293.1 1016.0,298.5 1015.1,303.9 1014.1,309.3 1013.0,314.7 1011.9,320.1 1010.6,325.5 1009.3,330.9 1007.9,336.3 1006.3,341.7 1004.7,347.1 1003.0,352.5 1001.3,357.9 999.4,363.2 997.5,368.6 995.4,374.0 993.4,379.4 991.2,384.8 988.9,390.1 986.6,395.5 984.2,400.9 981.8,406.3 979.2,411.6 976.7,417.0 974.0,422.3 971.3,427.7 968.6,433.0 965.8,438.3 962.9,443.6 960.0,448.9 957.0,454.2 954.1,459.5 951.0,464.8 948.0,470.0 944.9,475.3 941.7,480.5 938.6,485.7 935.4,490.9M690.0,118.0 681.9,123.0 673.8,128.0 665.8,133.0 657.8,138.1 650.0,143.2 642.4,148.4 634.8,153.6 627.5,158.8 620.3,164.0 613.3,169.3 606.5,174.6 600.0,179.8 593.6,185.1 587.5,190.4 581.6,195.8 576.0,201.1 570.6,206.4 565.5,211.8 560.7,217.1 556.1,222.5 551.9,227.8 547.9,233.2 544.2,238.6 540.7,244.0 537.6,249.3 534.8,254.7 532.3,260.1 530.1,265.5 528.2,270.9 526.6,276.3 525.4,281.7 524.4,287.1 523.8,292.5 523.5,297.9 523.5,303.3 523.8,308.7 524.4,314.1 525.4,319.5 526.6,324.9 528.2,330.3 530.1,335.7 532.4,341.1 534.9,346.5 537.7,351.9 540.8,357.3 544.3,362.7 548.0,368.1 552.1,373.5 556.4,378.9 561.0,384.3 565.9,389.7 571.1,395.0 576.5,400.4 582.2,405.8 588.2,411.2 594.5,416.5 600.9,421.9 607.7,427.2 614.6,432.6 621.8,437.9 629.2,443.3 636.9,448.6 644.7,453.9 652.7,459.2 660.9,464.5 669.3,469.7 677.9,475.0 686.6,480.2 695.4,485.5 704.4,490.7M836.0,96.0 833.8,93.3 831.3,90.9 828.3,88.9 824.8,87.4 820.8,86.3 816.1,85.7 810.7,85.7 804.5,86.1 797.5,87.0 789.7,88.4 781.1,90.3 771.7,92.5 761.7,95.2 751.1,98.1 739.9,101.3 728.3,104.8 716.2,108.5 703.9,112.4 691.2,116.4 678.4,120.6 665.4,124.9 652.3,129.3 639.1,133.9 626.0,138.5 612.8,143.1 599.6,147.9 586.6,152.6 573.6,157.5 560.8,162.4 548.1,167.3 535.6,172.2 523.3,177.2 511.2,182.2 499.4,187.3 487.8,192.4 476.5,197.5 465.4,202.6 454.7,207.7 444.3,212.8 434.2,218.0 424.4,223.1 415.0,228.3 406.0,233.5 397.3,238.7 389.0,243.9 381.1,249.1 373.6,254.4 366.5,259.6 359.8,264.8 353.6,270.1 347.7,275.3 342.4,280.6 337.4,285.8 332.9,291.1 328.9,296.3 325.3,301.6 322.2,306.9 319.5,312.1 317.3,317.4M1487.7,322.7 1485.6,327.9 1483.0,333.2 1479.9,338.4 1476.4,343.7 1472.5,349.0 1468.0,354.2 1463.2,359.5 1457.9,364.7 1452.1,370.0 1446.0,375.2 1439.4,380.5 1432.3,385.7 1424.9,390.9 1417.1,396.1 1408.8,401.3 1400.2,406.5 1391.2,411.7 1381.9,416.9 1372.2,422.1 1362.1,427.2 1351.8,432.4 1341.1,437.5 1330.1,442.6 1318.8,447.7 1307.2,452.8 1295.4,457.8 1283.4,462.9 1271.1,467.9 1258.6,472.8 1246.0,477.8 1233.2,482.6 1220.2,487.5 1207.2,492.3M925.0,80.0 929.7,84.9 934.5,89.9 939.3,95.0 944.1,100.2 948.9,105.4 953.7,110.6 958.4,115.9 963.2,121.2 967.9,126.5 972.5,131.9 977.1,137.2 981.6,142.6 986.1,148.0 990.6,153.4 994.9,158.8 999.2,164.2 1003.4,169.6 1007.5,175.0 1011.5,180.5 1015.5,185.9 1019.3,191.4 1023.1,196.8 1026.7,202.3 1030.3,207.7 1033.7,213.2 1037.0,218.6 1040.2,224.1 1043.3,229.6 1046.3,235.0 1049.1,240.5 1051.9,246.0 1054.5,251.4 1056.9,256.9 1059.2,262.4 1061.4,267.9 1063.5,273.3 1065.4,278.8 1067.2,284.3 1068.8,289.8 1070.3,295.2 1071.6,300.7 1072.8,306.2 1073.9,311.7 1074.8,317.2 1075.5,322.6 1076.1,328.1 1076.6,333.6 1076.9,339.1 1077.0,344.6 1077.0,350.0 1076.9,355.5 1076.6,361.0 1076.1,366.5 1075.5,371.9 1074.7,377.4 1073.8,382.9 1072.8,388.4 1071.6,393.8 1070.2,399.3 1068.8,404.8 1067.1,410.2 1065.3,415.7 1063.4,421.2 1061.4,426.6 1059.2,432.1 1056.9,437.6 1054.4,443.0 1051.9,448.5 1049.1,453.9 1046.3,459.3 1043.4,464.8 1040.3,470.2 1037.1,475.6 1033.9,481.0 1030.5,486.4 1027.0,491.8M1010.0,92.0 1000.5,86.5 990.9,81.0 981.2,75.5 971.5,70.1 961.8,64.6 952.1,59.2 942.4,53.9 932.8,48.6 923.4,43.5 914.6,38.8 907.0,35.4 901.3,35.2 895.5,38.4 889.1,43.1 882.2,48.1 875.2,53.4 868.1,58.8 861.0,64.2 853.9,69.6 846.8,75.1 839.8,80.5 832.7,86.0 825.8,91.5 818.9,97.0 812.0,102.5 805.3,108.0 798.6,113.5 792.0,119.0 785.5,124.5 779.1,130.1 772.8,135.6 766.6,141.1 760.6,146.6 754.6,152.1 748.8,157.6 743.2,163.2 737.6,168.7 732.2,174.2 727.0,179.7 721.9,185.3 717.0,190.8 712.2,196.3 707.6,201.8 703.1,207.3 698.9,212.9 694.8,218.4 690.9,223.9 687.2,229.4 683.7,235.0 680.3,240.5 677.2,246.0 674.2,251.5 671.5,257.1 669.0,262.6 666.6,268.1 664.5,273.6 662.6,279.1 660.9,284.7 659.4,290.2 658.1,295.7 657.0,301.2 656.2,306.8 655.5,312.3 655.1,317.8 654.9,323.3 654.9,328.9 655.2,334.4 655.6,339.9 656.3,345.4 657.2,351.0 658.3,356.5 659.6,362.0 661.1,367.5 662.8,373.1 664.8,378.6 666.9,384.1 669.3,389.6 671.9,395.2 674.6,400.7 677.6,406.2 680.8,411.7 684.1,417.3 687.7,422.8 691.4,428.3 695.3,433.8 699.4,439.3 703.7,444.9 708.2,450.4 712.8,455.9 717.6,461.4 722.6,467.0 727.7,472.5 732.9,478.0 738.4,483.5 743.9,489.0M790.0,160.0 792.5,163.1 795.0,166.2 797.4,169.5 799.9,172.9 802.2,176.4 804.6,180.1 807.0,183.7 809.4,187.5 811.7,191.4 814.1,195.3 816.5,199.2 818.9,203.3 821.4,207.4 823.9,211.5 826.3,215.7 828.9,219.9 831.4,224.2 834.0,228.5 836.6,232.9 839.2,237.2 841.9,241.6 844.6,246.1 847.3,250.5 850.1,255.0 852.9,259.5 855.7,264.0 858.5,268.6 861.4,273.1 864.3,277.7 867.2,282.3 870.1,286.8 873.1,291.4 876.0,296.0 879.0,300.7 882.0,305.3 885.0,309.9 888.0,314.5 891.1,319.1 894.1,323.8 897.1,328.4 900.2,333.0 903.2,337.6 906.3,342.2 909.3,346.8 912.3,351.4 915.4,356.0 918.4,360.6 921.4,365.2 924.4,369.7 927.4,374.3 930.4,378.8 933.3,383.3 936.3,387.8 939.2,392.3 942.1,396.7 945.0,401.2 947.8,405.5 950.7,409.9 953.5,414.2 956.3,418.5 959.1,422.8 961.8,427.0 964.6,431.2 967.3,435.3 970.0,439.4 972.6,443.4 975.3,447.3 977.9,451.2 980.6,455.0 983.2,458.8 985.9,462.4 988.5,466.0 991.2,469.5 993.9,472.8 996.6,476.1 999.3,479.2 1002.1,482.2 1005.0,485.1 1007.9,487.8 1011.0,490.3 1014.1,492.7M650.0,146.0 661.5,141.5 673.0,137.0 684.5,132.6 695.9,128.4 707.2,124.2 718.4,120.2 729.4,116.3 740.1,112.6 750.6,109.1 760.7,105.8 770.4,102.8 779.7,100.0 788.6,97.6 796.9,95.5 804.7,93.7 811.8,92.4 818.5,91.5 824.5,91.1 830.0,91.2 835.0,91.6 839.5,92.6 843.7,94.0 847.5,95.8 851.0,97.9 854.3,100.4 857.4,103.2 860.3,106.3 863.2,109.6 866.0,113.2 868.7,116.9 871.3,120.8 874.0,124.8 876.6,129.0 879.2,133.3 881.8,137.7 884.4,142.1 887.0,146.7 889.6,151.3 892.2,156.0 894.8,160.7 897.4,165.5 900.0,170.3 902.6,175.2 905.2,180.1 907.8,185.0 910.4,190.0 913.0,195.0 915.6,200.0 918.2,205.0 920.7,210.1 923.3,215.2 925.8,220.2 928.4,225.3 930.9,230.5 933.4,235.6 935.8,240.7 938.3,245.9 940.7,251.0 943.1,256.2 945.4,261.4 947.7,266.6 950.0,271.7 952.3,276.9 954.5,282.1 956.6,287.3 958.8,292.5 960.8,297.7 962.9,303.0 964.9,308.2 966.8,313.4 968.7,318.6 970.5,323.8 972.3,329.0 974.0,334.2 975.7,339.4 977.3,344.6 978.9,349.9 980.4,355.1 981.8,360.3 983.2,365.5 984.5,370.6 985.7,375.8 986.9,381.0 988.0,386.2 989.1,391.3 990.1,396.5 991.0,401.6 991.9,406.8 992.7,411.9 993.4,417.0 994.1,422.1 994.7,427.2 995.2,432.3 995.7,437.3 996.1,442.4 996.4,447.4 996.7,452.3 997.0,457.3 997.1,462.2 997.3,467.1M700.0,160.0 691.2,163.8 682.3,167.6 673.5,171.6 664.6,175.6 655.8,179.7 647.0,183.9 638.2,188.2 629.5,192.5 621.0,196.8 612.5,201.2 604.1,205.6 595.8,210.1 587.7,214.6 579.7,219.2 571.9,223.8 564.3,228.4 556.8,233.0 549.5,237.7 542.5,242.4 535.6,247.1 529.0,251.8 522.6,256.6 516.4,261.3 510.5,266.1 504.8,270.9 499.4,275.7 494.2,280.5 489.4,285.3 484.7,290.1 480.4,294.9 476.3,299.8 472.6,304.6 469.1,309.5 465.9,314.3 463.0,319.1 460.4,324.0 458.1,328.8 456.1,333.7 454.4,338.5 453.0,343.4 451.9,348.2 451.1,353.0 450.6,357.8 450.4,362.6 450.5,367.4 450.9,372.2 451.5,377.0 452.5,381.8 453.7,386.5 455.3,391.3 457.0,396.0 459.1,400.7 461.4,405.4 464.0,410.0 466.8,414.6 469.8,419.2 473.0,423.8 476.5,428.3 480.2,432.9 484.0,437.3 488.0,441.7 492.2,446.1 496.5,450.4 500.9,454.7 505.4,458.9 510.0,463.1 514.7,467.2 519.3,471.2 524.0,475.1 528.6,478.9 533.1,482.6 537.6,486.2 541.8,489.7M864.7,61.3 857.4,66.7 850.1,72.1 842.8,77.5 835.5,83.0 828.3,88.4 821.1,93.9 814.0,99.4 807.0,104.9 800.0,110.4 793.1,115.9 786.3,121.4 779.6,126.9 773.0,132.4 766.6,137.9 760.2,143.4 754.0,148.9 747.8,154.5 741.9,160.0 736.0,165.5 730.3,171.0 724.8,176.5 719.4,182.0 714.2,187.6 709.1,193.1 704.2,198.6 699.5,204.1 695.0,209.6 690.6,215.2 686.4,220.7 682.4,226.2 678.6,231.7 675.1,237.2 671.7,242.8 668.5,248.3 665.5,253.8 662.7,259.3 660.1,264.9 657.7,270.4 655.6,275.9 653.7,281.4 652.0,286.9 650.5,292.5 649.2,298.0 648.1,303.5 647.3,309.0 646.7,314.6 646.3,320.1 646.2,325.6 646.3,331.1 646.5,336.6 647.1,342.2 647.8,347.7 648.8,353.2 650.0,358.7 651.4,364.3 653.0,369.8 654.9,375.3 656.9,380.8 659.2,386.4 661.7,391.9 664.4,397.4 667.3,402.9 670.5,408.4 673.8,414.0 677.3,419.5 681.0,425.0 684.9,430.5 689.1,436.0 693.3,441.6 697.8,447.1 702.5,452.6 707.3,458.1 712.3,463.6 717.5,469.2 722.8,474.7 728.3,480.2 733.9,485.7 739.7,491.2M930.0,62.0 923.4,57.4 917.1,53.1 911.1,49.4 905.5,46.6 900.1,45.1 894.4,45.4 888.1,47.3 881.0,50.4 873.1,54.3 864.7,58.7 856.0,63.5 847.1,68.4 838.0,73.4 828.8,78.6 819.6,83.8 810.3,89.1 801.1,94.4 791.9,99.8 782.8,105.1 773.8,110.5 764.8,115.9 756.0,121.3 747.2,126.8 738.6,132.2 730.0,137.7 721.7,143.1 713.4,148.6 705.4,154.0 697.5,159.5 689.7,165.0 682.2,170.5 674.8,175.9 667.6,181.4 660.7,186.9 653.9,192.4 647.3,197.9 641.0,203.4 634.9,208.9 629.0,214.4 623.3,219.9 617.9,225.4 612.8,230.9 607.9,236.4 603.2,241.9 598.8,247.4 594.7,252.9 590.9,258.4 587.3,263.9 584.0,269.4 580.9,274.9 578.2,280.4 575.7,285.9 573.5,291.4 571.6,296.9 570.0,302.4 568.7,307.9 567.6,313.4 566.9,318.9 566.4,324.4 566.3,329.9 566.4,335.4 566.8,340.9 567.6,346.4 568.6,351.9 569.9,357.4 571.5,362.9 573.4,368.4 575.5,373.9 578.0,379.4 580.7,385.0 583.7,390.5 587.0,396.0 590.6,401.5 594.4,407.0 598.5,412.5 602.9,417.9 607.5,423.4 612.4,428.9 617.6,434.4 622.9,439.9 628.6,445.4 634.4,450.9 640.5,456.4 646.8,461.9 653.3,467.4 660.1,472.8 667.0,478.3 674.1,483.8 681.5,489.3M1120.0,125.0 1110.7,119.7 1101.4,114.5 1091.9,109.2 1082.4,104.1 1072.9,98.9 1063.4,93.8 1053.9,88.9 1044.5,83.9 1035.4,79.2 1026.6,74.6 1018.2,70.1 1010.6,66.0 1004.1,62.3 999.0,59.1M815.6,56.6 825.5,55.0 832.4,54.5 836.4,55.1 837.9,56.8 837.4,59.3 835.6,62.6 832.8,66.3 829.3,70.5 825.4,74.9 821.2,79.5 816.8,84.3 812.3,89.2 807.7,94.2 803.1,99.3 798.5,104.5 793.9,109.6 789.4,114.9 784.9,120.1 780.5,125.4 776.1,130.7 771.8,136.1 767.6,141.4 763.5,146.8 759.5,152.1 755.6,157.5 751.8,162.9 748.2,168.3 744.6,173.7 741.2,179.1 737.9,184.6 734.8,190.0 731.8,195.4 728.9,200.9 726.2,206.3 723.6,211.8 721.2,217.2 718.9,222.7 716.8,228.1 714.9,233.6 713.1,239.0 711.4,244.5 710.0,249.9 708.7,255.4 707.5,260.9 706.5,266.3 705.7,271.8 705.1,277.3 704.6,282.7 704.3,288.2 704.2,293.7 704.2,299.2 704.5,304.6 704.8,310.1 705.4,315.6 706.1,321.0 707.0,326.5 708.1,332.0 709.3,337.5 710.7,342.9 712.3,348.4 714.0,353.9 715.9,359.3 717.9,364.8 720.1,370.3 722.5,375.7 725.0,381.2 727.6,386.7 730.5,392.1 733.4,397.6 736.5,403.1 739.8,408.5 743.2,414.0 746.7,419.4 750.3,424.9 754.1,430.3 758.0,435.8 762.0,441.2 766.2,446.6 770.4,452.1 774.8,457.5 779.3,462.9 783.8,468.3 788.5,473.7 793.3,479.1 798.1,484.5M1085.9,90.0 1070.0,85.5 1054.6,81.3 1039.7,77.2 1025.6,73.5 1012.5,70.2 1000.7,67.4 990.2,65.1 981.4,63.6 974.4,62.8 969.1,63.0 965.4,63.9 963.0,65.7 961.7,68.1 961.3,71.1 961.4,74.6 962.0,78.4 962.9,82.5 963.9,86.8 965.2,91.3 966.5,96.0 967.9,100.7 969.4,105.6 970.8,110.5 972.3,115.6 973.7,120.6 975.1,125.7 976.5,130.9 977.9,136.1 979.2,141.3 980.5,146.5 981.7,151.8 982.9,157.1 984.0,162.4 985.1,167.7 986.1,173.0 987.0,178.3 987.9,183.7 988.7,189.0 989.4,194.4 990.0,199.8 990.6,205.1 991.2,210.5 991.6,215.9 992.0,221.3 992.3,226.7 992.5,232.1 992.6,237.5 992.7,242.9 992.7,248.3 992.6,253.8 992.5,259.2 992.3,264.6 991.9,270.0 991.6,275.4 991.1,280.9 990.6,286.3 990.0,291.7 989.3,297.2 988.5,302.6 987.7,308.0 986.8,313.5 985.8,318.9 984.8,324.3 983.6,329.7 982.5,335.2 981.2,340.6 979.9,346.0 978.5,351.5 977.0,356.9 975.5,362.3 973.9,367.7 972.3,373.2 970.6,378.6 968.9,384.0 967.0,389.4 965.2,394.8 963.3,400.3 961.3,405.7 959.3,411.1 957.2,416.5 955.1,421.9 952.9,427.3 950.7,432.7 948.5,438.0 946.2,443.4 943.9,448.8 941.6,454.1 939.2,459.5 936.8,464.8 934.3,470.2 931.9,475.5 929.4,480.8 926.9,486.1 924.4,491.4M752.0,130.0 752.9,132.9 753.7,136.0 754.2,139.3 754.7,142.7 755.0,146.3 755.3,150.0 755.5,153.8 755.7,157.7 755.8,161.7 756.0,165.8 756.1,169.9 756.2,174.2 756.4,178.5 756.6,182.8 756.9,187.3 757.2,191.7 757.5,196.3 758.0,200.8 758.4,205.4 759.0,210.1 759.6,214.7 760.3,219.4 761.1,224.1 762.0,228.9 762.9,233.7 763.9,238.5 765.0,243.3 766.2,248.1 767.5,252.9 768.9,257.8 770.3,262.7 771.9,267.6 773.5,272.4 775.2,277.4 777.0,282.3 778.9,287.2 780.9,292.1 782.9,297.0 785.1,302.0 787.3,306.9 789.6,311.8 792.0,316.8 794.5,321.7 797.0,326.7 799.6,331.6 802.3,336.5 805.0,341.5 807.9,346.4 810.8,351.3 813.7,356.3 816.7,361.2 819.8,366.1 822.9,371.0 826.1,375.9 829.3,380.8 832.6,385.6 835.9,390.5 839.3,395.3 842.7,400.1 846.1,404.9 849.6,409.7 853.1,414.5 856.7,419.2 860.2,423.9 863.8,428.6 867.4,433.3 871.0,437.9 874.7,442.4 878.3,447.0 882.0,451.5 885.6,455.9 889.3,460.3 893.0,464.7 896.6,468.9 900.3,473.2 904.0,477.3 907.7,481.3 911.4,485.3 915.0,489.1M820.0,80.0 815.0,85.0 810.0,90.0 804.9,95.1 799.8,100.3 794.7,105.5 789.7,110.8 784.7,116.1 779.8,121.4 774.9,126.7 770.1,132.1 765.5,137.4 760.9,142.8 756.4,148.2 752.1,153.6 747.8,159.0 743.7,164.5 739.7,169.9 735.8,175.3 732.1,180.8 728.5,186.2 725.1,191.7 721.8,197.1 718.7,202.6 715.7,208.0 712.9,213.5 710.2,219.0 707.7,224.4 705.4,229.9 703.2,235.4 701.3,240.8 699.4,246.3 697.8,251.8 696.3,257.3 695.0,262.7 693.9,268.2 693.0,273.7 692.2,279.2 691.7,284.7 691.3,290.1 691.1,295.6 691.0,301.1 691.2,306.6 691.5,312.1 692.1,317.5 692.8,323.0 693.6,328.5 694.7,334.0 696.0,339.5 697.4,345.0 699.0,350.4 700.8,355.9 702.7,361.4 704.8,366.9 707.1,372.4 709.6,377.8 712.2,383.3 715.0,388.8 718.0,394.3 721.1,399.7 724.3,405.2 727.8,410.7 731.3,416.2 735.0,421.6 738.9,427.1 742.9,432.5 747.0,438.0 751.3,443.5 755.7,448.9 760.2,454.4 764.8,459.8 769.6,465.2 774.4,470.7 779.4,476.1 784.4,481.5 789.6,486.9 794.8,492.4M1080.0,100.0 1072.4,95.5 1065.1,91.1 1058.2,86.9 1051.7,82.9 1046.0,79.2 1041.1,75.9 1037.4,73.0 1035.1,70.6M779.3,68.7 788.0,67.6 794.6,67.2 799.2,67.6 801.9,68.7 803.0,70.5 802.6,72.8 801.2,75.7 799.0,79.1 796.1,82.7 792.7,86.7 789.0,90.9 785.0,95.2 780.8,99.8 776.4,104.4 772.0,109.2 767.6,114.0 763.1,118.9 758.7,123.9 754.2,128.9 749.9,134.0 745.6,139.1 741.3,144.3 737.2,149.4 733.2,154.6 729.2,159.9 725.4,165.1 721.7,170.4 718.1,175.6 714.7,180.9 711.4,186.2 708.3,191.5 705.3,196.9 702.4,202.2 699.7,207.5 697.2,212.9 694.8,218.3 692.6,223.6 690.6,229.0 688.7,234.4 687.1,239.7 685.6,245.1 684.2,250.5 683.1,255.9 682.1,261.3 681.3,266.7 680.7,272.1 680.3,277.5 680.1,282.9 680.1,288.3 680.2,293.7 680.5,299.1 681.1,304.5 681.8,309.9 682.7,315.3 683.7,320.7 685.0,326.1 686.4,331.5 688.1,336.9 689.9,342.3 691.8,347.7 694.0,353.1 696.3,358.5 698.8,363.9 701.5,369.3 704.4,374.7 707.4,380.1 710.5,385.5 713.9,390.9 717.4,396.3 721.0,401.6 724.8,407.0 728.7,412.4 732.8,417.8 737.0,423.1 741.3,428.5 745.8,433.8 750.4,439.2 755.1,444.5 760.0,449.8 764.9,455.1 769.9,460.4 775.1,465.7 780.3,471.0 785.6,476.3 791.0,481.5 796.5,486.7 802.0,491.9M980.0,60.0 969.9,54.9 960.2,50.1 951.6,45.6 945.1,42.0M867.9,39.8 872.9,40.0 872.6,42.5 869.4,46.3 864.9,50.8 859.9,55.7 854.7,60.8 849.3,66.0 843.8,71.3 838.3,76.7 832.8,82.0 827.3,87.4 821.9,92.9 816.5,98.3 811.2,103.8 806.0,109.2 800.8,114.7 795.7,120.2 790.7,125.6 785.8,131.1 781.0,136.6 776.3,142.1 771.7,147.6 767.2,153.1 762.8,158.6 758.5,164.1 754.4,169.6 750.4,175.1 746.5,180.6 742.7,186.1 739.1,191.6 735.7,197.2 732.4,202.7 729.2,208.2 726.2,213.7 723.3,219.2 720.6,224.7 718.0,230.2 715.7,235.8 713.4,241.3 711.4,246.8 709.5,252.3 707.7,257.8 706.2,263.3 704.8,268.8 703.6,274.4 702.5,279.9 701.7,285.4 701.0,290.9 700.5,296.4 700.2,301.9 700.0,307.5 700.0,313.0 700.2,318.5 700.6,324.0 701.1,329.5 701.9,335.1 702.8,340.6 703.8,346.1 705.1,351.6 706.5,357.1 708.1,362.6 709.9,368.2 711.8,373.7 713.9,379.2 716.2,384.7 718.6,390.2 721.2,395.7 723.9,401.2 726.8,406.8 729.9,412.3 733.1,417.8 736.4,423.3 739.9,428.8 743.6,434.3 747.4,439.8 751.3,445.4 755.3,450.9 759.5,456.4 763.8,461.9 768.2,467.4 772.7,472.9 777.4,478.4 782.1,483.9 787.0,489.4" fill="none" stroke="#808080" stroke-opacity="0.62" stroke-width="1.3" stroke-dasharray="1.39 2.29"/>
<path d="M724.3,267.3 721.9,265.7 719.5,264.1 717.2,262.5 714.8,260.9 712.5,259.3 710.2,257.7 707.9,256.2 705.6,254.7 703.3,253.2 701.0,251.7 698.7,250.2 696.4,248.7 694.1,247.3 691.8,245.9 689.5,244.5 687.3,243.1 685.0,241.8 682.7,240.4 680.4,239.1 678.2,237.8 675.9,236.5 673.6,235.3 671.3,234.1 669.0,232.9 666.7,231.7 664.4,230.6 662.1,229.4 659.8,228.4 657.4,227.3 655.1,226.3 652.7,225.2 650.3,224.3 647.9,223.3 645.5,222.4 643.1,221.5 640.6,220.7 638.2,219.8 635.7,219.0 633.2,218.3 630.6,217.6 628.1,216.9 625.5,216.2 622.8,215.6 620.2,215.0 617.5,214.4 614.8,213.9 612.0,213.4 609.2,213.0 606.4,212.6 603.5,212.2 600.6,211.9 597.7,211.6 594.7,211.3 591.7,211.1 588.7,210.9 585.5,210.8 582.4,210.7 579.2,210.6 576.0,210.6 572.7,210.6 569.4,210.6 566.0,210.7 562.6,210.8 559.1,211.0 555.6,211.2M721.4,261.7 720.7,258.9 719.9,256.2 719.2,253.4 718.5,250.6 717.9,247.8 717.3,245.1 716.7,242.3 716.2,239.5 715.7,236.8 715.3,234.1 714.9,231.3 714.5,228.6 714.1,225.9 713.8,223.2 713.6,220.5 713.3,217.9 713.1,215.2 712.9,212.5 712.8,209.9 712.6,207.3 712.5,204.7 712.5,202.1 712.4,199.5 712.4,196.9 712.4,194.4 712.4,191.9 712.5,189.4 712.5,186.9 712.6,184.4 712.7,182.0 712.7,179.5 712.8,177.1 712.9,174.8 713.1,172.4 713.2,170.1 713.3,167.8 713.4,165.6 713.4,163.4 713.5,161.2 713.6,159.0 713.6,156.9 713.6,154.9 713.6,152.8 713.5,150.9 713.4,148.9 713.3,147.1 713.1,145.2 712.8,143.5 712.5,141.7 712.1,140.1 711.6,138.5 711.1,137.0 710.4,135.5 709.6,134.1 708.8,132.8 707.8,131.6 706.7,130.4 705.4,129.3 704.1,128.4 702.5,127.5 700.8,126.7 699.0,125.9 696.9,125.3 694.7,124.8 692.3,124.4 689.7,124.0 686.9,123.8 683.9,123.7 680.7,123.6 677.2,123.7 673.6,123.9 669.7,124.2 665.6,124.6 661.3,125.0 656.8,125.6 652.1,126.3 647.1,127.0 642.0,127.9 636.6,128.8 631.1,129.9 625.3,131.0 619.4,132.2 613.3,133.4M714.4,263.1 713.5,260.4 712.6,257.7 711.7,254.9 710.9,252.2 710.1,249.5 709.3,246.8 708.6,244.1 708.0,241.5 707.3,238.8 706.7,236.1 706.1,233.5 705.6,230.9 705.1,228.2 704.6,225.6 704.2,223.0 703.8,220.4 703.4,217.8 703.0,215.3 702.7,212.7 702.4,210.2 702.1,207.7 701.9,205.2 701.7,202.7 701.4,200.2 701.3,197.8 701.1,195.3 700.9,192.9 700.8,190.5 700.7,188.2 700.6,185.9 700.4,183.5 700.3,181.3 700.2,179.0 700.1,176.8 700.0,174.6 699.9,172.4 699.8,170.3 699.6,168.2 699.5,166.1 699.3,164.1 699.1,162.2 698.8,160.2 698.5,158.3 698.2,156.5 697.9,154.7 697.4,153.0 697.0,151.3 696.4,149.6 695.8,148.1 695.2,146.5 694.4,145.1 693.6,143.7 692.6,142.4 691.6,141.1 690.5,140.0 689.2,138.9 687.8,137.8 686.3,136.9 684.7,136.0 682.9,135.2 681.0,134.5 678.9,133.9 676.6,133.4 674.2,132.9 671.6,132.6 668.8,132.3 665.8,132.2 662.7,132.1 659.4,132.1 655.8,132.2 652.1,132.4 648.2,132.7 644.1,133.1 639.8,133.6 635.3,134.2 630.6,134.8 625.7,135.6 620.6,136.4M734.8,269.4 733.7,266.7 732.6,264.0 731.5,261.4 730.5,258.7 729.5,256.0 728.5,253.3 727.6,250.7 726.7,248.0 725.8,245.4 725.0,242.7 724.1,240.1 723.4,237.5 722.6,234.9 721.9,232.3 721.2,229.7 720.6,227.1 719.9,224.6 719.3,222.0 718.8,219.5 718.2,216.9 717.7,214.4 717.2,211.9 716.7,209.5 716.2,207.0 715.8,204.6 715.4,202.1 715.0,199.7 714.6,197.3 714.2,195.0 713.9,192.6 713.5,190.3 713.2,188.0 712.8,185.7 712.5,183.5 712.2,181.3 711.9,179.1 711.5,176.9 711.2,174.8 710.9,172.7 710.5,170.6 710.1,168.6 709.7,166.6 709.3,164.7 708.9,162.7 708.4,160.9 707.9,159.1 707.3,157.3 706.8,155.6 706.1,153.9 705.4,152.3 704.7,150.7 703.9,149.2 703.0,147.8 702.0,146.4 700.9,145.1 699.8,143.8 698.6,142.6 697.2,141.5 695.8,140.5 694.2,139.5 692.6,138.6 690.8,137.8 688.8,137.1 686.8,136.4 684.5,135.8 682.2,135.4 679.6,135.0 677.0,134.7 674.1,134.4 671.1,134.3 667.9,134.3 664.6,134.3 661.0,134.4 657.3,134.7 653.4,135.0M734.4,267.8 733.2,265.2 732.1,262.5 730.9,259.9 729.8,257.3 728.8,254.6 727.7,252.0 726.7,249.4 725.8,246.8 724.8,244.3 723.9,241.7 723.0,239.1 722.2,236.6 721.4,234.0 720.6,231.5 719.8,229.0 719.0,226.5 718.3,224.0 717.6,221.5 717.0,219.0 716.3,216.5 715.7,214.1 715.1,211.7 714.5,209.3 714.0,206.9 713.4,204.5 712.9,202.2 712.4,199.8 711.9,197.5 711.4,195.2 710.9,193.0 710.5,190.7 710.0,188.5 709.6,186.3 709.1,184.2 708.6,182.1 708.2,180.0 707.7,177.9 707.2,175.9 706.7,173.8 706.2,171.9 705.7,170.0 705.1,168.1 704.6,166.2 704.0,164.4 703.3,162.7 702.6,160.9 701.9,159.3 701.2,157.7 700.3,156.1 699.5,154.6 698.5,153.1 697.5,151.7 696.4,150.4 695.3,149.1 694.0,147.9 692.7,146.7 691.3,145.7 689.7,144.7 688.1,143.7 686.4,142.9 684.5,142.1 682.5,141.4 680.4,140.7 678.1,140.2 675.8,139.7 673.2,139.3 670.5,139.0 667.7,138.8 664.7,138.6 661.6,138.5M728.4,267.4 728.2,264.3 728.0,261.2 727.9,258.1 727.8,255.0 727.7,251.9 727.7,248.9 727.8,245.8 727.9,242.7 728.0,239.6 728.2,236.6 728.4,233.5 728.7,230.4 729.0,227.4 729.4,224.3 729.8,221.3 730.3,218.2 730.8,215.2 731.3,212.2 731.9,209.1 732.5,206.1 733.2,203.1 733.9,200.1 734.6,197.1 735.4,194.1 736.2,191.1 737.1,188.1 737.9,185.2 738.9,182.2 739.8,179.3 740.8,176.3 741.8,173.4 742.9,170.5 743.9,167.6 745.0,164.7 746.2,161.8 747.3,159.0 748.5,156.1 749.6,153.3 750.8,150.5 752.1,147.7 753.3,144.9 754.5,142.2 755.7,139.5 756.9,136.8 758.2,134.2 759.4,131.5 760.6,129.0 761.7,126.4 762.9,123.9 764.0,121.4 765.1,119.0 766.1,116.6 767.1,114.3 768.0,112.1 768.8,109.9 769.6,107.8 770.2,105.7 770.7,103.8 771.1,101.9 771.4,100.1 771.5,98.4 771.4,96.9 771.1,95.4 770.5,94.1 769.8,92.9 768.7,91.9 767.4,91.0 765.8,90.2 763.8,89.6 761.4,89.2 758.7,88.9 755.7,88.8 752.2,88.9 748.3,89.2 744.0,89.6 739.3,90.2 734.3,90.9 728.8,91.8 722.9,92.9 716.7,94.0 710.1,95.4 703.3,96.8 696.0,98.4 688.5,100.0 680.8,101.8 672.8,103.7M710.8,272.1 710.4,269.0 709.9,266.0 709.5,263.0 709.2,260.0 708.9,257.1 708.6,254.1 708.4,251.1 708.3,248.1 708.2,245.1 708.1,242.1 708.1,239.2 708.2,236.2 708.2,233.2 708.4,230.3 708.5,227.3 708.8,224.4 709.0,221.5 709.3,218.5 709.7,215.6 710.1,212.7 710.5,209.8 711.0,206.9 711.5,204.0 712.0,201.2 712.6,198.3 713.3,195.4 713.9,192.6 714.6,189.8 715.3,186.9 716.1,184.1 716.9,181.4 717.7,178.6 718.5,175.8 719.4,173.1 720.3,170.4 721.2,167.7 722.1,165.0 723.0,162.3 723.9,159.7 724.9,157.1 725.8,154.5 726.8,151.9 727.8,149.4 728.7,146.9 729.6,144.4 730.5,142.0 731.4,139.6 732.3,137.3 733.1,135.0 733.9,132.7 734.7,130.5 735.4,128.4 736.0,126.3 736.5,124.2 737.0,122.3 737.4,120.4 737.7,118.5 737.9,116.8 737.9,115.1 737.8,113.5 737.6,112.0 737.1,110.6 736.5,109.3 735.8,108.1 734.8,107.1 733.5,106.1 732.1,105.2 730.4,104.5 728.4,103.9 726.1,103.5 723.5,103.2M729.5,270.7 729.0,267.7 728.5,264.7 728.1,261.7 727.8,258.7 727.4,255.7 727.2,252.7 726.9,249.8 726.7,246.8 726.6,243.8 726.5,240.8 726.4,237.9 726.4,234.9 726.4,232.0 726.5,229.0 726.6,226.1 726.8,223.1 727.0,220.2 727.2,217.3 727.5,214.4 727.8,211.5 728.1,208.6 728.5,205.7 728.9,202.8 729.3,199.9 729.8,197.0 730.3,194.2 730.9,191.3 731.5,188.5 732.1,185.7 732.7,182.9 733.4,180.1 734.1,177.3 734.8,174.5 735.5,171.8 736.3,169.0 737.1,166.3 737.9,163.6 738.7,161.0 739.5,158.3 740.3,155.7 741.2,153.1 742.0,150.5 742.8,147.9 743.7,145.4 744.5,142.9 745.3,140.5 746.1,138.1 746.8,135.7 747.6,133.3 748.3,131.0 749.0,128.8 749.6,126.6 750.1,124.5 750.6,122.4 751.1,120.4 751.4,118.4 751.7,116.5 751.8,114.7 751.8,113.0 751.8,111.3 751.5,109.8 751.1,108.3 750.6,107.0 749.9,105.7 748.9,104.6 747.8,103.5 746.4,102.6 744.8,101.9 742.9,101.2 740.8,100.7M713.0,253.9 712.7,250.9 712.5,247.9 712.4,245.0 712.3,242.0 712.2,239.0 712.2,236.0 712.3,233.1 712.4,230.1 712.5,227.1 712.7,224.2 712.9,221.3 713.1,218.3 713.4,215.4 713.8,212.5 714.2,209.6 714.6,206.7 715.0,203.8 715.5,200.9 716.1,198.0 716.6,195.2 717.2,192.3 717.9,189.5 718.5,186.7 719.2,183.9 720.0,181.1 720.7,178.3 721.5,175.5 722.3,172.8 723.1,170.1 723.9,167.4 724.8,164.7 725.6,162.0 726.5,159.4 727.4,156.8 728.3,154.2 729.2,151.7 730.0,149.1 730.9,146.6 731.8,144.2 732.6,141.8 733.4,139.4 734.2,137.1 734.9,134.8 735.6,132.5 736.3,130.4 736.9,128.2 737.4,126.1 737.9,124.1 738.3,122.2 738.5,120.3 738.7,118.5 738.8,116.8 738.7,115.1 738.5,113.6 738.1,112.1M714.9,260.5 714.4,257.6 714.0,254.6 713.6,251.7 713.3,248.7 712.9,245.8 712.7,242.9 712.5,240.0 712.3,237.0 712.2,234.1 712.1,231.2 712.0,228.3 712.0,225.4 712.1,222.6 712.1,219.7 712.2,216.8 712.4,214.0 712.6,211.1 712.8,208.3 713.1,205.5 713.4,202.7 713.7,199.9 714.1,197.1 714.5,194.3 714.9,191.6 715.4,188.8 715.8,186.1 716.3,183.4 716.9,180.7 717.4,178.0 718.0,175.4 718.6,172.7 719.2,170.1 719.8,167.5 720.4,165.0 721.0,162.4 721.7,159.9 722.3,157.5 722.9,155.0 723.5,152.6 724.1,150.2 724.7,147.9 725.2,145.6 725.8,143.3 726.3,141.1 726.7,139.0 727.1,136.8 727.5,134.8 727.7,132.8 728.0,130.8M727.5,264.8 726.5,262.1 725.5,259.3 724.5,256.6 723.6,253.9 722.8,251.2 721.9,248.5 721.1,245.8 720.3,243.2 719.6,240.5 718.9,237.8 718.2,235.2 717.6,232.6 717.0,229.9 716.4,227.3 715.9,224.7 715.4,222.1 714.9,219.5 714.4,217.0 714.0,214.4 713.6,211.9 713.2,209.4 712.8,206.8 712.5,204.4 712.2,201.9 711.9,199.4 711.6,197.0 711.3,194.6 711.1,192.2 710.9,189.8 710.6,187.5 710.4,185.1 710.2,182.8 710.0,180.6 709.8,178.3 709.6,176.1 709.4,173.9 709.1,171.8 708.9,169.7 708.7,167.6 708.4,165.5 708.1,163.5 707.8,161.6 707.5,159.7 707.1,157.8 706.7,156.0 706.2,154.2 705.7,152.5 705.1,150.8M729.5,258.5 729.8,255.3 730.1,252.1 730.5,249.0 730.9,245.8 731.3,242.6 731.8,239.4 732.4,236.3 733.0,233.1 733.7,229.9 734.4,226.8 735.1,223.6 735.9,220.4 736.8,217.3 737.7,214.1 738.6,211.0 739.6,207.8 740.6,204.7 741.7,201.5 742.8,198.4 743.9,195.2 745.1,192.1 746.4,189.0 747.7,185.9 749.0,182.7 750.4,179.6 751.8,176.5 753.2,173.4 754.7,170.3 756.2,167.2 757.7,164.1 759.3,161.0 760.9,158.0 762.5,154.9 764.2,151.8 765.9,148.8 767.6,145.8 769.4,142.7 771.2,139.7 772.9,136.7 774.8,133.7 776.6,130.8 778.4,127.8 780.3,124.9 782.1,122.0 784.0,119.1 785.8,116.2 787.7,113.4 789.5,110.6 791.3,107.8 793.1,105.1 794.9,102.4 796.6,99.7 798.3,97.1 799.9,94.6 801.5,92.1 802.9,89.7 804.3,87.3M727.4,269.7 727.8,266.5 728.2,263.2 728.7,260.0 729.2,256.7 729.8,253.5 730.4,250.2 731.1,247.0 731.8,243.8 732.6,240.5 733.4,237.3 734.3,234.1 735.2,230.8 736.2,227.6 737.2,224.4 738.3,221.1 739.4,217.9 740.6,214.7 741.8,211.4 743.0,208.2 744.4,205.0 745.7,201.8 747.1,198.5 748.6,195.3 750.1,192.1 751.6,188.9 753.2,185.7 754.8,182.4 756.5,179.2 758.2,176.0 760.0,172.8 761.7,169.6 763.6,166.4 765.4,163.2 767.4,160.0 769.3,156.8 771.3,153.6 773.3,150.4 775.3,147.3 777.4,144.1 779.5,140.9 781.7,137.8 783.8,134.6 786.0,131.5 788.2,128.3 790.5,125.2 792.8,122.1 795.0,118.9M718.7,279.0 720.3,275.8 721.9,272.7 723.6,269.5 725.4,266.3 727.1,263.1 729.0,260.0 730.9,256.8 732.8,253.6 734.8,250.5 736.8,247.3 738.9,244.1 741.0,241.0 743.2,237.8 745.4,234.7 747.7,231.5 750.0,228.4 752.3,225.2 754.7,222.1 757.1,218.9 759.6,215.8 762.1,212.6 764.6,209.5 767.2,206.4 769.8,203.2 772.5,200.1 775.2,197.0 777.9,193.9 780.7,190.8 783.4,187.7 786.2,184.6M729.2,276.5 730.4,273.3 731.6,270.1 732.8,266.8 734.1,263.6 735.5,260.4 736.9,257.1 738.3,253.9 739.8,250.7 741.4,247.4 743.0,244.2 744.6,241.0 746.3,237.7 748.1,234.5 749.8,231.3 751.7,228.0 753.5,224.8 755.5,221.6 757.4,218.3 759.4,215.1 761.5,211.9 763.6,208.7 765.7,205.4 767.9,202.2 770.1,199.0 772.4,195.7 774.6,192.5 777.0,189.3 779.3,186.1 781.7,182.9 784.2,179.6 786.6,176.4 789.1,173.2 791.7,170.0 794.2,166.8 796.8,163.6 799.5,160.4 802.1,157.2 804.8,154.0 807.5,150.8 810.3,147.6 813.0,144.4 815.8,141.2 818.6,138.0 821.5,134.8 824.3,131.6 827.2,128.5 830.1,125.3 833.0,122.1 835.9,119.0 838.8,115.8 841.8,112.7 844.8,109.5 847.7,106.4 850.7,103.3 853.7,100.2 856.7,97.1 859.7,94.0 862.7,91.0 865.7,87.9 868.7,84.9 871.6,81.9 874.6,79.0 877.6,76.1 880.5,73.2 883.4,70.4 886.3,67.7 889.2,65.0 892.0,62.5 894.8,60.0 897.6,57.8 900.3,55.7 903.0,53.8 905.8,52.3M717.6,257.7 718.1,254.5 718.6,251.3 719.2,248.1 719.9,244.9 720.6,241.8 721.3,238.6 722.1,235.4 722.9,232.2 723.8,229.0 724.8,225.8 725.8,222.7 726.9,219.5 728.0,216.3 729.1,213.1 730.3,210.0 731.6,206.8 732.9,203.6 734.2,200.5 735.6,197.3 737.0,194.2 738.5,191.0 740.1,187.8 741.6,184.7 743.2,181.5 744.9,178.4 746.6,175.3 748.3,172.1 750.1,169.0 751.9,165.9 753.8,162.7 755.7,159.6 757.6,156.5 759.6,153.4 761.6,150.3 763.6,147.2 765.7,144.1 767.8,141.0 769.9,138.0 772.0,134.9 774.2,131.9 776.4,128.8 778.6,125.8 780.8,122.8 783.0,119.8 785.3,116.8 787.5,113.9 789.8,110.9 792.1,108.0 794.3,105.1 796.5,102.3 798.8,99.5 801.0,96.7 803.1,93.9 805.2,91.2 807.3,88.5 809.3,85.9 811.2,83.4 813.0,81.0 814.6,78.6 816.2,76.3 817.5,74.2 818.6,72.2 819.4,70.3 819.9,68.6 820.0,67.1 819.7,65.8 818.9,64.8 817.5,64.0 815.5,63.5 812.7,63.3 809.3,63.4 805.1,63.8 800.1,64.4 794.4,65.3 788.0,66.5 780.9,67.9 773.3,69.5M1036.1,71.3 1039.3,73.2 1042.9,75.3 1046.9,77.5 1051.1,79.9 1055.6,82.3 1060.3,84.8 1065.1,87.3 1070.1,90.0 1075.2,92.7 1080.4,95.4 1085.6,98.2 1090.9,101.0 1096.2,103.8M720.1,264.1 720.5,260.9 721.0,257.6 721.5,254.4 722.0,251.2 722.6,248.0 723.3,244.7 724.0,241.5 724.8,238.3 725.6,235.1 726.5,231.8 727.5,228.6 728.4,225.4 729.5,222.2 730.6,219.0 731.7,215.8 732.9,212.5 734.1,209.3 735.4,206.1 736.7,202.9 738.1,199.7 739.5,196.5 741.0,193.3 742.5,190.1 744.1,186.9 745.7,183.7 747.4,180.5 749.0,177.3 750.8,174.2 752.6,171.0 754.4,167.8 756.2,164.6 758.1,161.5 760.1,158.3 762.0,155.2 764.0,152.0 766.1,148.9 768.1,145.7 770.2,142.6 772.4,139.5 774.5,136.4 776.7,133.2 778.9,130.1 781.1,127.1 783.4,124.0 785.7,120.9 787.9,117.9 790.2,114.9 792.5,111.8 794.8,108.9 797.1,105.9 799.4,102.9 801.7,100.0 804.0,97.1 806.3,94.3 808.5,91.5 810.6,88.7 812.8,86.0 814.8,83.4 816.8,80.8 818.6,78.3 820.3,75.9 821.9,73.6 823.2,71.4 824.3,69.3 825.1,67.5 825.6,65.8 825.6,64.3 825.1,63.1 824.1,62.1 822.4,61.5 819.9,61.1 816.7,61.1 812.7,61.4 807.9,62.0 802.2,62.9 795.8,64.0 788.7,65.4 780.9,67.1M1029.0,68.9 1032.4,70.9 1036.3,73.1 1040.4,75.3 1044.9,77.7 1049.6,80.2 1054.6,82.8 1059.6,85.4 1064.8,88.1 1070.2,90.9 1075.6,93.7 1081.0,96.5 1086.5,99.4 1092.1,102.3 1097.6,105.2M730.9,268.0 731.5,264.8 732.1,261.5 732.8,258.3 733.5,255.0 734.3,251.8 735.1,248.5 736.0,245.3 737.0,242.1 737.9,238.8 739.0,235.6 740.1,232.3 741.2,229.1 742.4,225.8 743.6,222.6 744.9,219.4 746.2,216.1 747.6,212.9 749.0,209.6 750.5,206.4 752.0,203.2 753.6,199.9 755.2,196.7 756.8,193.5 758.5,190.2 760.2,187.0 762.0,183.8 763.8,180.5 765.7,177.3 767.6,174.1 769.5,170.8 771.5,167.6 773.5,164.4 775.6,161.1 777.7,157.9 779.8,154.7 782.0,151.5 784.2,148.2 786.4,145.0 788.7,141.8 790.9,138.6 793.3,135.4 795.6,132.2 798.0,128.9 800.4,125.7 802.9,122.5 805.3,119.3 807.8,116.1 810.3,113.0 812.9,109.8 815.4,106.6 818.0,103.4 820.6,100.2 823.2,97.1 825.8,93.9 828.5,90.8 831.1,87.7 833.8,84.5 836.4,81.4 839.0,78.4 841.7,75.3 844.3,72.3 846.9,69.3 849.4,66.3 851.9,63.4 854.3,60.6 856.6,57.9 858.7,55.2 860.6,52.7 862.2,50.4 863.3,48.4 863.8,46.7 863.4,45.5 861.8,44.8 858.8,44.7 854.1,45.2 848.0,46.3 840.4,47.9M969.7,49.8 974.0,52.0 979.0,54.5 984.3,57.1 990.0,59.8 995.9,62.6 1002.0,65.5 1008.2,68.4 1014.5,71.4 1020.9,74.4 1027.3,77.5 1033.8,80.5 1040.2,83.6 1046.7,86.7 1053.1,89.9 1059.5,93.0 1065.9,96.1 1072.3,99.3 1078.7,102.5 1085.0,105.6 1091.3,108.8 1097.5,112.0 1103.7,115.2 1109.9,118.4M719.5,255.7 719.4,252.6 719.3,249.6 719.3,246.6 719.3,243.6 719.4,240.6 719.5,237.6 719.7,234.6 719.9,231.6 720.1,228.6 720.4,225.6 720.8,222.6 721.1,219.6 721.6,216.7 722.0,213.7 722.5,210.7 723.1,207.8 723.7,204.9 724.3,201.9 725.0,199.0 725.7,196.1 726.4,193.2 727.2,190.2 728.0,187.4 728.9,184.5 729.7,181.6 730.6,178.7 731.6,175.9 732.5,173.1 733.5,170.2 734.5,167.4 735.6,164.7 736.6,161.9 737.7,159.1 738.8,156.4 739.9,153.7 741.0,151.0 742.1,148.3 743.3,145.7 744.4,143.1 745.5,140.5 746.6,138.0 747.7,135.4 748.8,133.0 749.8,130.5 750.9,128.1 751.9,125.7 752.8,123.4 753.7,121.2 754.5,119.0 755.3,116.8 756.0,114.7 756.6,112.7 757.1,110.8 757.5,108.9 757.8,107.2 757.9,105.5 757.8,103.9 757.6,102.4 757.2,101.0 756.6,99.8 755.8,98.6 754.7,97.6 753.4,96.7 751.7,96.0 749.8,95.4 747.6,94.9 745.0,94.6 742.1,94.4 738.9,94.4 735.2,94.6 731.3,94.9 726.9,95.3 722.2,95.9 717.2,96.7 711.8,97.6 706.0,98.6 700.0,99.7 693.6,101.0 686.9,102.3 679.9,103.8 672.7,105.4 665.2,107.1 657.5,108.8M719.1,276.7 719.3,273.5 719.5,270.3 719.8,267.1 720.1,264.0 720.5,260.8 721.0,257.6 721.5,254.4 722.0,251.2 722.6,248.0 723.3,244.8 724.0,241.6 724.7,238.4 725.5,235.2 726.4,232.0 727.3,228.8 728.2,225.6 729.3,222.5 730.3,219.3 731.4,216.1 732.6,212.9 733.8,209.7 735.0,206.6 736.3,203.4 737.7,200.2 739.1,197.0 740.5,193.9 742.0,190.7 743.5,187.5 745.1,184.4 746.7,181.2 748.4,178.1 750.1,174.9 751.8,171.8 753.6,168.6 755.4,165.5 757.3,162.4 759.1,159.2 761.1,156.1 763.0,153.0 765.0,149.9 767.1,146.8 769.1,143.7 771.2,140.6 773.3,137.5 775.5,134.4 777.6,131.4 779.8,128.3 782.0,125.3 784.2,122.2 786.5,119.2 788.7,116.2 791.0,113.2 793.2,110.3 795.5,107.3 797.8,104.4 800.0,101.5 802.2,98.7 804.5,95.8 806.6,93.1 808.8,90.3 810.9,87.6 812.9,85.0 814.9,82.4 816.7,79.9 818.4,77.5 820.0,75.2 821.4,73.0 822.6,70.9 823.5,69.0 824.1,67.2 824.3,65.6 824.1,64.3 823.4,63.2 822.1,62.4 820.1,61.9 817.4,61.7 813.9,61.7 809.6,62.1 804.6,62.8 798.8,63.8 792.2,65.0 785.0,66.5 777.2,68.1M1031.8,70.0 1035.3,72.0 1039.1,74.2 1043.3,76.4 1047.7,78.8 1052.4,81.3 1057.3,83.8 1062.3,86.4 1067.5,89.1 1072.7,91.8 1078.0,94.6 1083.4,97.4 1088.8,100.2 1094.3,103.1 1099.8,106.0 1105.3,109.0 1110.8,111.9 1116.3,114.9 1121.8,117.9 1127.3,120.9 1132.7,123.9 1138.1,126.9 1143.5,130.0 1148.8,133.0 1154.1,136.1 1159.3,139.2 1164.5,142.3 1169.6,145.4 1174.7,148.5 1179.7,151.6 1184.6,154.7 1189.5,157.8 1194.3,161.0 1199.0,164.1 1203.7,167.2 1208.2,170.4 1212.7,173.5 1217.1,176.7 1221.4,179.8 1225.7,183.0 1229.8,186.1 1233.9,189.3" fill="none" stroke="#ff1c00" stroke-width="1.39" stroke-dasharray="1.39 2.29"/>
<path d="M735.6,237.6 733.7,235.7 731.9,233.8 730.0,232.0 728.2,230.1 726.4,228.3 724.6,226.5 722.7,224.8 720.9,223.0 719.1,221.3 717.3,219.6 715.5,218.0 713.7,216.3 711.9,214.7 710.1,213.1 708.3,211.5 706.4,210.0 704.6,208.5 702.8,207.0 700.9,205.6 699.0,204.2 697.1,202.8 695.2,201.5 693.3,200.2 691.4,198.9 689.4,197.7 687.4,196.5 685.4,195.4 683.3,194.3 681.3,193.2 679.2,192.2 677.0,191.2 674.8,190.3 672.6,189.4 670.3,188.5 668.0,187.7 665.7,187.0 663.2,186.3 660.8,185.6 658.3,185.0 655.7,184.4 653.1,183.9 650.4,183.5 647.6,183.1 644.8,182.7 642.0,182.4 639.0,182.1 636.0,181.9 632.9,181.8 629.8,181.7 626.6,181.6 623.3,181.7 619.9,181.7 616.5,181.8 613.0,182.0 609.4,182.2 605.7,182.5 602.0,182.8 598.2,183.2 594.3,183.6 590.3,184.1 586.3,184.6 582.2,185.2 578.0,185.9 573.8,186.5 569.5,187.3 565.1,188.0 560.6,188.9 556.1,189.7 551.5,190.6 546.9,191.6 542.2,192.6 537.5,193.6 532.6,194.7 527.8,195.8 522.9,197.0 517.9,198.2 512.9,199.4 507.9,200.7 502.8,202.0 497.7,203.4 492.5,204.8 487.4,206.2 482.2,207.6 476.9,209.1 471.7,210.6 466.4,212.2 461.1,213.7 455.8,215.3 450.6,217.0 445.2,218.6 439.9,220.3 434.6,222.0 429.3,223.7 424.0,225.5M737.0,231.6 736.5,228.9 735.9,226.2 735.4,223.5 734.9,220.8 734.5,218.2 734.1,215.5 733.7,212.8 733.3,210.2 733.0,207.6 732.6,205.0 732.3,202.4 732.1,199.8 731.8,197.2 731.6,194.7 731.3,192.2 731.1,189.7 731.0,187.2 730.8,184.7 730.6,182.3 730.5,179.9 730.3,177.5 730.2,175.1 730.0,172.8 729.9,170.5 729.7,168.2 729.6,165.9 729.4,163.7 729.3,161.6 729.1,159.4 728.9,157.3 728.6,155.3 728.4,153.3 728.1,151.3 727.7,149.4 727.3,147.5 726.9,145.7 726.4,143.9 725.9,142.2 725.3,140.6 724.6,139.0 723.8,137.5 723.0,136.0 722.0,134.7 721.0,133.4 719.8,132.1 718.5,131.0 717.1,129.9 715.6,129.0 713.9,128.1M733.8,257.0 732.8,254.3 731.9,251.6 731.0,248.8 730.1,246.1 729.3,243.4 728.5,240.7 727.7,238.0 727.0,235.4 726.3,232.7 725.6,230.0 725.0,227.4 724.4,224.8 723.8,222.1 723.2,219.5 722.7,216.9 722.2,214.4 721.7,211.8 721.3,209.2 720.8,206.7 720.4,204.2 720.0,201.7 719.7,199.2 719.3,196.8 719.0,194.3 718.7,191.9 718.4,189.5 718.1,187.1 717.8,184.8 717.5,182.5 717.2,180.2 716.9,177.9 716.6,175.7 716.3,173.5 716.0,171.3 715.7,169.2 715.4,167.1 715.1,165.0 714.7,163.0 714.3,161.0 713.9,159.1 713.5,157.2 713.0,155.4 712.4,153.6 711.8,151.9 711.2,150.2 710.5,148.6 709.7,147.0 708.9,145.5 707.9,144.1 706.9,142.7 705.8,141.4M718.3,242.3 719.6,239.0 721.0,235.8 722.5,232.5 724.0,229.3 725.6,226.0 727.2,222.8 728.9,219.5 730.7,216.3 732.5,213.0 734.3,209.8 736.2,206.5 738.1,203.2 740.1,200.0 742.2,196.7 744.3,193.5 746.4,190.2 748.6,187.0 750.8,183.7 753.1,180.5 755.4,177.2 757.8,174.0 760.2,170.7 762.7,167.5 765.2,164.2 767.7,160.9 770.3,157.7 772.9,154.4 775.6,151.2 778.3,147.9 781.0,144.7 783.8,141.4 786.6,138.2 789.4,134.9 792.3,131.7 795.2,128.4 798.2,125.2 801.1,121.9 804.1,118.7 807.2,115.4 810.2,112.2 813.3,108.9 816.5,105.7 819.6,102.4 822.8,99.2 825.9,95.9 829.2,92.7 832.4,89.4 835.6,86.2 838.9,83.0 842.2,79.7 845.5,76.5 848.8,73.3 852.2,70.0 855.5,66.8 858.8,63.6 862.2,60.4M732.2,236.0 734.6,232.8 737.0,229.5 739.5,226.3 742.0,223.0 744.6,219.7 747.2,216.5 749.9,213.2 752.6,210.0 755.3,206.7 758.1,203.5 761.0,200.2 763.9,197.0M738.8,244.0 741.3,241.0 743.8,238.0 746.4,235.0 749.0,232.0 751.6,229.0 754.3,226.0 757.0,223.0 759.8,220.0 762.5,217.0 765.3,214.1 768.2,211.1 771.1,208.2 774.0,205.2 776.9,202.3 779.8,199.3 782.8,196.4 785.8,193.5 788.8,190.6 791.9,187.7 795.0,184.8 798.1,182.0 801.2,179.1 804.3,176.3 807.4,173.5 810.6,170.7 813.7,167.9 816.9,165.1 820.1,162.4 823.3,159.6 826.5,156.9 829.7,154.2 832.9,151.5 836.1,148.9 839.3,146.3 842.5,143.7 845.7,141.2 848.9,138.7 852.1,136.2 855.3,133.7 858.5,131.3 861.6,129.0 864.8,126.7 867.9,124.4 871.0,122.2 874.2,120.1 877.3,118.0 880.4,116.0 883.4,114.0 886.5,112.2 889.5,110.4 892.6,108.7M721.0,251.7 723.2,248.6 725.5,245.5 727.9,242.4 730.3,239.4 732.7,236.3 735.2,233.2 737.7,230.2 740.3,227.1 742.9,224.1 745.6,221.0 748.3,218.0 751.0,215.0 753.8,211.9 756.6,208.9 759.4,205.9 762.3,202.9 765.2,199.8 768.1,196.8 771.1,193.8 774.1,190.9 777.1,187.9 780.2,184.9 783.3,181.9 786.4,179.0 789.5,176.0 792.7,173.1 795.8,170.2 799.0,167.2 802.2,164.3 805.5,161.5 808.7,158.6 812.0,155.7 815.2,152.9 818.5,150.0 821.8,147.2 825.1,144.5 828.4,141.7 831.7,138.9 835.0,136.2 838.3,133.5 841.6,130.9 844.9,128.2 848.2,125.7 851.4,123.1 854.7,120.6 858.0,118.1 861.2,115.7 864.4,113.3 867.6,111.0 870.8,108.7 874.0,106.5 877.2,104.4 880.3,102.3 883.4,100.4 886.5,98.5 889.6,96.7 892.6,95.0 895.7,93.5 898.7,92.0 901.7,90.7 904.8,89.6 907.8,88.6 910.8,87.7 913.9,87.0 917.0,86.4 920.1,86.1 923.3,85.9 926.6,85.9 929.9,86.0 933.3,86.4M739.9,254.0 741.5,250.7 743.1,247.5 744.8,244.2 746.6,240.9 748.4,237.7 750.2,234.4 752.1,231.2 754.0,227.9 756.0,224.6 758.0,221.4 760.1,218.1 762.2,214.9 764.4,211.6 766.6,208.4 768.8,205.1 771.1,201.9 773.4,198.6 775.8,195.4 778.1,192.1 780.6,188.9 783.0,185.6 785.5,182.4 788.1,179.2 790.6,175.9 793.2,172.7 795.8,169.5 798.5,166.2 801.2,163.0 803.9,159.8 806.6,156.6 809.4,153.4 812.2,150.1 815.0,146.9 817.9,143.7 820.7,140.5 823.6,137.4 826.5,134.2 829.4,131.0 832.4,127.8 835.3,124.7 838.3,121.5 841.2,118.4 844.2,115.2 847.2,112.1 850.2,109.0 853.2,105.9 856.2,102.9 859.3,99.8 862.3,96.8 865.3,93.8 868.3,90.8 871.3,87.9 874.2,84.9 877.2,82.1 880.2,79.3 883.1,76.5 886.0,73.8 888.9,71.3 891.7,68.8M746.2,247.9 748.0,244.7 749.8,241.5 751.7,238.3 753.7,235.0 755.6,231.8 757.6,228.6 759.7,225.4 761.8,222.1 764.0,218.9 766.1,215.7 768.4,212.5 770.6,209.3 772.9,206.1 775.3,202.8 777.7,199.6 780.1,196.4 782.5,193.2 785.0,190.0 787.5,186.8 790.1,183.6 792.6,180.4 795.2,177.3 797.9,174.1 800.5,170.9 803.2,167.7 805.9,164.5 808.7,161.4 811.5,158.2 814.2,155.1 817.1,151.9 819.9,148.8 822.7,145.6 825.6,142.5 828.5,139.4 831.4,136.3 834.3,133.2 837.2,130.1 840.2,127.0 843.1,124.0 846.1,120.9 849.0,117.9 852.0,114.9 854.9,111.9 857.9,108.9 860.9,106.0 863.8,103.0 866.8,100.2 869.7,97.3 872.7,94.5 875.6,91.7 878.5,89.0 881.4,86.3 884.3,83.7 887.2,81.2 890.0,78.8 892.8,76.4 895.6,74.2 898.4,72.1 901.2,70.2 903.9,68.4 906.7,66.8M734.4,232.4 736.3,229.2 738.3,225.9 740.3,222.6 742.3,219.4 744.4,216.1 746.6,212.9 748.8,209.6 751.0,206.3 753.3,203.1 755.6,199.8 758.0,196.5 760.4,193.3 762.9,190.0 765.4,186.8 767.9,183.5 770.5,180.3 773.1,177.0 775.8,173.7 778.5,170.5 781.2,167.2 784.0,164.0 786.8,160.7 789.7,157.5 792.5,154.2 795.5,151.0 798.4,147.8 801.4,144.5 804.4,141.3 807.4,138.0 810.4,134.8 813.5,131.6 816.6,128.4 819.7,125.1 822.9,121.9 826.0,118.7 829.2,115.5 832.4,112.3 835.6,109.1 838.9,105.9 842.1,102.7 845.4,99.6 848.6,96.4 851.9,93.2 855.2,90.1 858.4,87.0 861.7,83.9 865.0,80.8 868.3,77.7 871.5,74.7 874.7,71.7 878.0,68.8 881.1,65.9 884.3,63.1 887.4,60.3 890.5,57.7 893.5,55.2 896.5,52.9 899.4,50.9 902.3,49.1M739.8,238.3 742.2,235.2 744.6,232.1 747.1,229.1 749.7,226.0 752.3,222.9 754.9,219.9 757.5,216.8 760.2,213.8 763.0,210.7 765.7,207.7 768.5,204.6 771.4,201.6 774.2,198.6 777.1,195.6 780.0,192.6 783.0,189.6 786.0,186.6 789.0,183.6 792.0,180.6 795.0,177.7 798.1,174.7 801.2,171.8 804.3,168.8 807.4,165.9 810.5,163.0 813.7,160.1 816.9,157.3 820.0,154.4 823.2,151.6 826.4,148.7 829.6,145.9 832.8,143.2 836.0,140.4 839.2,137.7 842.4,135.0 845.6,132.3 848.8,129.7 852.0,127.0 855.2,124.5 858.4,121.9 861.6,119.5 864.7,117.0 867.9,114.6 871.0,112.3 874.1,110.0 877.2,107.8 880.3,105.7 883.4,103.6 886.4,101.6 889.5,99.7 892.5,97.9 895.5,96.2 898.5,94.7 901.5,93.2 904.5,91.9 907.4,90.7 910.5,89.7 913.5,88.8 916.5,88.0 919.6,87.5 922.8,87.1 926.0,86.9 929.2,86.8 932.6,87.0 936.0,87.3 939.5,87.7 943.2,88.4 946.9,89.2 950.7,90.2 954.7,91.3 958.7,92.5 962.9,93.9 967.2,95.4 971.6,97.1 976.1,98.8 980.6,100.7 985.3,102.6 990.0,104.6 994.9,106.7M729.1,232.9 730.9,229.6 732.7,226.3 734.6,223.1 736.5,219.8 738.5,216.5 740.6,213.3 742.7,210.0 744.8,206.7 747.0,203.4 749.3,200.2 751.6,196.9 753.9,193.6 756.3,190.3 758.7,187.1 761.2,183.8 763.7,180.5 766.2,177.3 768.8,174.0 771.5,170.7 774.1,167.4 776.9,164.2 779.6,160.9 782.4,157.6 785.2,154.4 788.1,151.1 791.0,147.8 793.9,144.6 796.9,141.3 799.9,138.0 802.9,134.8 806.0,131.5 809.0,128.3 812.2,125.0 815.3,121.7 818.5,118.5 821.6,115.2 824.9,112.0 828.1,108.7 831.3,105.5 834.6,102.2 837.9,99.0 841.2,95.7 844.5,92.5 847.9,89.3 851.2,86.1 854.6,82.8 857.9,79.6 861.3,76.4 864.7,73.2 868.0,70.1 871.4,66.9 874.7,63.8 878.1,60.7 881.4,57.6 884.7,54.6 888.0,51.6 891.2,48.8 894.3,46.0 897.3,43.5 900.3,41.4 903.2,39.8 906.2,38.9 909.5,38.9 913.4,39.9 918.0,41.6 923.2,43.8 928.8,46.4 934.7,49.1 940.7,52.0 946.9,54.9 953.2,58.0 959.6,61.1 966.0,64.2 972.5,67.3 978.9,70.5 985.4,73.6 991.9,76.8 998.3,80.0 1004.8,83.2 1011.2,86.5 1017.6,89.7 1024.0,92.9 1030.3,96.2 1036.7,99.4 1043.0,102.6M723.7,239.4 725.6,236.2 727.6,233.0 729.7,229.7 731.8,226.5 734.0,223.3 736.2,220.0 738.4,216.8 740.7,213.6 743.1,210.4 745.5,207.1 747.9,203.9 750.4,200.7 753.0,197.5 755.6,194.3 758.2,191.0 760.9,187.8 763.6,184.6 766.3,181.4 769.1,178.2 771.9,175.0 774.8,171.8 777.7,168.6 780.6,165.4 783.6,162.2 786.6,159.0 789.6,155.8 792.7,152.6 795.8,149.4 798.9,146.2 802.1,143.0 805.2,139.8 808.4,136.7 811.6,133.5 814.9,130.3 818.2,127.2 821.4,124.0 824.7,120.9 828.1,117.8 831.4,114.6 834.7,111.5 838.1,108.4 841.4,105.4 844.8,102.3 848.2,99.2 851.5,96.2 854.9,93.2 858.3,90.2 861.6,87.2 865.0,84.3 868.3,81.4 871.6,78.5 874.9,75.7 878.2,73.0 881.4,70.3 884.6,67.8 887.7,65.3 890.8,63.0 893.9,60.8 896.9,58.8 899.8,57.0 902.8,55.5 905.8,54.4 908.8,53.6 911.9,53.1 915.2,53.1 918.6,53.6 922.4,54.4 926.4,55.6 930.7,57.0 935.2,58.8 940.0,60.8 945.0,63.0 950.2,65.3 955.5,67.8 961.0,70.4 966.6,73.0M741.8,231.4 743.4,228.1 745.1,224.9 746.9,221.6 748.7,218.4 750.5,215.1 752.4,211.9 754.3,208.6 756.3,205.4 758.3,202.1 760.4,198.9 762.5,195.6 764.6,192.4 766.8,189.1 769.1,185.9 771.3,182.6 773.6,179.4 776.0,176.1 778.4,172.9 780.8,169.6 783.3,166.4 785.8,163.1 788.3,159.9 790.9,156.6 793.5,153.4 796.1,150.2 798.8,146.9 801.5,143.7 804.2,140.4 807.0,137.2 809.8,133.9 812.6,130.7 815.4,127.5 818.3,124.2 821.2,121.0 824.1,117.7 827.0,114.5 830.0,111.3 832.9,108.0 835.9,104.8 839.0,101.6 842.0,98.3 845.0,95.1 848.1,91.9 851.2,88.7 854.3,85.5 857.4,82.2 860.5,79.0 863.6,75.8 866.7,72.6 869.8,69.5 873.0,66.3 876.1,63.1 879.2,60.0 882.3,56.9 885.4,53.8 888.4,50.8 891.5,47.8 894.4,45.0 897.3,42.3 900.1,39.9 902.9,38.0 905.7,36.9 909.0,36.9 913.1,38.0 918.0,39.9 923.6,42.3 929.5,45.0 935.8,47.8 942.2,50.8 948.7,53.8 955.3,56.9 962.0,60.0 968.7,63.1 975.4,66.3 982.1,69.5M720.2,246.8 720.8,243.7 721.5,240.5 722.2,237.3 722.9,234.2 723.7,231.0 724.6,227.8 725.5,224.7 726.4,221.5 727.4,218.3 728.5,215.2 729.6,212.0 730.7,208.8 731.9,205.7 733.2,202.5 734.4,199.4 735.8,196.2 737.2,193.1 738.6,190.0 740.0,186.8 741.6,183.7 743.1,180.6 744.7,177.4 746.3,174.3 748.0,171.2 749.7,168.1 751.5,165.0 753.3,161.9 755.1,158.8 756.9,155.7 758.8,152.6 760.8,149.6 762.7,146.5 764.7,143.5 766.7,140.4 768.7,137.4 770.8,134.4 772.8,131.4 774.9,128.4 777.0,125.4 779.2,122.4 781.3,119.5 783.4,116.6 785.6,113.7 787.7,110.8 789.8,107.9 791.9,105.1 794.0,102.3 796.1,99.6 798.1,96.9 800.1,94.2 802.0,91.6 803.9,89.1 805.6,86.6M745.9,249.8 747.5,246.5 749.0,243.2 750.6,240.0 752.3,236.7 754.0,233.4 755.8,230.2 757.6,226.9 759.4,223.7 761.3,220.4 763.2,217.1 765.2,213.9 767.2,210.6 769.2,207.4 771.3,204.1 773.5,200.8 775.6,197.6 777.8,194.3 780.1,191.1 782.4,187.8 784.7,184.6 787.0,181.3 789.4,178.1 791.8,174.8 794.3,171.6 796.8,168.3 799.3,165.1 801.8,161.8 804.4,158.6 807.0,155.4 809.6,152.1 812.3,148.9 815.0,145.7 817.7,142.4 820.4,139.2 823.2,136.0 825.9,132.8 828.7,129.6 831.5,126.4 834.4,123.2 837.2,120.0 840.1,116.8 843.0,113.6 845.8,110.4 848.7,107.2 851.6,104.1 854.6,100.9 857.5,97.8 860.4,94.7 863.3,91.6 866.2,88.5 869.2,85.4 872.1,82.4 875.0,79.4 877.9,76.4 880.8,73.5 883.6,70.6 886.5,67.8 889.3,65.1 892.1,62.4 894.8,59.9 897.6,57.5 900.3,55.3 902.9,53.4 905.6,51.7 908.4,50.4 911.3,49.5 914.3,49.1 917.7,49.2 921.4,49.8 925.5,50.9 930.0,52.3 934.9,54.1 940.1,56.1" fill="none" stroke="#dc11ff" stroke-width="1.39" stroke-dasharray="1.39 2.29"/>
<path d="M489.2,228.7 493.7,225.5 498.4,222.3 503.1,219.0 508.0,215.8 513.0,212.6 518.1,209.4 523.3,206.2 528.7,203.0 534.1,199.7 539.7,196.5 545.3,193.3 551.1,190.1M464.7,242.7 468.5,239.4 472.3,236.2 476.4,232.9 480.5,229.7 484.8,226.4 489.2,223.1 493.7,219.9 498.4,216.6 503.1,213.4 508.0,210.1 513.1,206.9 518.2,203.6 523.4,200.3 528.8,197.1 534.3,193.8 539.9,190.6 545.6,187.3 551.4,184.1 557.3,180.8 563.3,177.6 569.5,174.3 575.7,171.1 582.0,167.8 588.4,164.6 594.9,161.3 601.5,158.1 608.2,154.8 615.0,151.6 621.9,148.3 628.8,145.1 635.8,141.8 642.9,138.6 650.1,135.4 657.3,132.1 664.7,128.9 672.0,125.7 679.5,122.4 687.0,119.2 694.6,116.0 702.2,112.8 709.8,109.5 717.6,106.3 725.3,103.1 733.1,99.9 740.9,96.7 748.8,93.6 756.7,90.4 764.6,87.2 772.5,84.1 780.5,80.9 788.4,77.8 796.3,74.7 804.2,71.6 812.0,68.6M454.7,240.5 458.0,237.2 461.5,234.0 465.1,230.7 468.8,227.4 472.6,224.2 476.6,220.9 480.7,217.7 485.0,214.4 489.4,211.1 493.9,207.9 498.5,204.6 503.2,201.4 508.1,198.1 513.1,194.8 518.2,191.6 523.4,188.3 528.7,185.1 534.2,181.8 539.7,178.5 545.4,175.3 551.2,172.0 557.0,168.8 563.0,165.5 569.1,162.3 575.3,159.0 581.6,155.8 587.9,152.6 594.4,149.3 600.9,146.1 607.6,142.8 614.3,139.6 621.1,136.4 628.0,133.1 634.9,129.9 642.0,126.7 649.1,123.4 656.2,120.2 663.5,117.0 670.8,113.8 678.1,110.6 685.5,107.4 692.9,104.2 700.4,101.0 708.0,97.8 715.5,94.7 723.1,91.5 730.7,88.4 738.3,85.2 745.9,82.1 753.5,79.0 761.0,76.0 768.5,72.9 776.0,69.9 783.3,67.0 790.5,64.1 797.6,61.2M996.4,58.5 986.5,55.9 977.0,53.4 968.1,51.1 959.9,49.1 952.7,47.4 946.5,46.2 941.7,45.5 938.2,45.4 935.9,45.8M490.8,230.8 492.6,227.9 494.4,225.1 496.3,222.3 498.3,219.4 500.4,216.6 502.6,213.8 504.8,211.0 507.1,208.2 509.5,205.5 511.9,202.7 514.5,199.9 517.0,197.2 519.7,194.5 522.4,191.8 525.1,189.1 528.0,186.4 530.8,183.7 533.7,181.1 536.7,178.4 539.6,175.8 542.6,173.2 545.7,170.7 548.7,168.1 551.8,165.6 554.9,163.1 558.0,160.6 561.1,158.2 564.1,155.8 567.2,153.4 570.2,151.1 573.3,148.8 576.2,146.5 579.1,144.3 582.0,142.1 584.8,139.9 587.5,137.8 590.1,135.8 592.6,133.8 595.1,131.9 597.3,130.0M1200.9,128.2 1193.5,126.5 1186.3,124.8 1179.2,123.2 1172.3,121.7 1165.6,120.3 1159.2,119.0 1152.9,117.7 1146.9,116.5 1141.1,115.5 1135.6,114.5 1130.3,113.7 1125.3,112.9 1120.6,112.3 1116.1,111.8 1111.9,111.4 1108.0,111.1 1104.4,110.9 1101.0,110.9 1097.9,111.0 1095.1,111.2M439.7,249.0 439.8,246.7 440.1,244.3 440.4,241.9 440.7,239.6 441.1,237.2 441.6,234.9 442.1,232.6 442.7,230.3 443.3,228.1 444.0,225.8 444.7,223.6 445.5,221.4 446.3,219.1 447.1,217.0 447.9,214.8 448.8,212.7 449.7,210.5 450.7,208.4 451.6,206.4 452.6,204.3 453.6,202.3 454.5,200.3 455.5,198.3 456.5,196.4 457.5,194.5 458.4,192.6 459.3,190.7 460.3,188.9 461.1,187.1M1339.2,185.4 1332.9,183.7 1326.5,182.0 1320.3,180.4 1314.1,178.8 1307.9,177.2 1301.8,175.7 1295.8,174.3 1289.8,172.8 1284.0,171.5 1278.2,170.2 1272.5,168.9 1266.9,167.7 1261.4,166.5 1256.0,165.4 1250.7,164.4 1245.5,163.4 1240.4,162.4 1235.5,161.6 1230.7,160.7 1225.9,160.0 1221.4,159.3 1216.9,158.7 1212.6,158.1 1208.4,157.7 1204.3,157.2 1200.3,156.9" fill="none" stroke="#59d100" stroke-width="1.39" stroke-dasharray="1.39 2.29"/>
<path d="M831.3,220.0 830.1,217.3 828.9,214.6 827.7,212.0 826.5,209.3 825.4,206.7 824.2,204.0 823.1,201.4 822.0,198.8 820.9,196.2 819.7,193.7 818.7,191.1 817.6,188.6 816.5,186.1 815.4,183.6 814.3,181.1 813.3,178.7 812.2,176.2 811.2,173.8 810.1,171.5 809.1,169.1 808.0,166.8 807.0,164.5 805.9,162.3 804.8,160.1 803.8,157.9 802.7,155.7 801.6,153.6 800.5,151.6 799.3,149.6 798.2,147.6 797.0,145.7 795.8,143.8 794.5,142.0 793.3,140.2 791.9,138.5 790.6,136.9 789.2,135.3 787.7,133.8 786.2,132.4 784.6,131.0 782.9,129.7 781.1,128.5 779.3,127.4 777.4,126.4 775.4,125.4 773.2,124.6 771.0,123.8 768.6,123.1 766.2,122.6 763.6,122.1 760.8,121.7 757.9,121.5 754.9,121.3 751.7,121.3 748.4,121.3 744.9,121.5 741.3,121.7 737.5,122.1 733.5,122.5 729.4,123.1 725.1,123.7 720.7,124.5 716.1,125.3 711.3,126.2 706.4,127.3 701.4,128.4 696.2,129.6 690.9,130.8 685.4,132.2 679.8,133.6 674.1,135.1 668.3,136.7 662.4,138.3 656.3,140.0 650.2,141.8 644.0,143.6 637.7,145.4 631.4,147.3 624.9,149.3 618.5,151.3 611.9,153.4 605.3,155.5 598.7,157.6 592.1,159.8 585.4,162.0 578.7,164.2 571.9,166.5 565.2,168.8 558.5,171.2 551.7,173.5 545.0,175.9 538.3,178.3 531.6,180.8 524.9,183.3 518.3,185.7 511.7,188.3 505.1,190.8 498.5,193.3 492.0,195.9 485.6,198.5 479.2,201.1 472.8,203.7 466.6,206.3 460.4,209.0 454.2,211.6M810.7,224.7 808.5,222.9 806.2,221.1 804.0,219.4 801.7,217.7 799.5,216.0 797.3,214.3 795.0,212.6 792.8,211.0 790.5,209.4 788.3,207.9 786.0,206.4 783.8,204.9 781.5,203.4 779.2,202.0 776.9,200.6 774.6,199.2 772.3,197.9 770.0,196.6 767.6,195.4 765.3,194.2 762.9,193.0 760.5,191.9 758.1,190.8 755.6,189.8 753.2,188.8 750.7,187.9 748.2,187.0 745.6,186.1 743.0,185.3 740.4,184.5 737.7,183.8 735.1,183.2 732.3,182.6 729.6,182.0 726.7,181.5 723.9,181.1 721.0,180.7 718.0,180.3 715.0,180.0 712.0,179.8 708.9,179.6 705.7,179.5 702.5,179.4 699.2,179.4 695.9,179.4 692.5,179.5 689.1,179.7 685.6,179.9 682.0,180.1 678.4,180.4 674.7,180.8 671.0,181.2 667.2,181.6 663.4,182.2 659.4,182.7 655.5,183.4 651.5,184.0 647.4,184.8 643.2,185.5 639.0,186.3 634.8,187.2 630.5,188.1 626.1,189.1 621.7,190.1 617.3,191.1 612.8,192.2 608.3,193.3 603.7,194.5 599.1,195.7 594.4,197.0 589.7,198.3 585.0,199.6 580.3,201.0 575.5,202.4 570.7,203.8 565.9,205.3 561.0,206.8 556.1,208.3 551.3,209.9 546.4,211.5 541.5,213.1 536.5,214.7 531.6,216.4 526.7,218.1 521.8,219.9M864.0,213.3 863.8,210.1 863.5,206.9 863.3,203.7 863.1,200.6 862.9,197.4 862.7,194.2 862.5,191.0 862.4,187.8 862.2,184.7 862.1,181.5 861.9,178.3 861.8,175.2 861.7,172.0 861.6,168.9 861.5,165.7 861.4,162.6 861.4,159.4 861.3,156.3 861.2,153.1 861.2,150.0 861.2,146.9 861.2,143.8 861.2,140.7 861.1,137.6 861.2,134.5 861.2,131.4 861.2,128.3 861.2,125.3 861.3,122.2 861.3,119.2 861.4,116.1 861.4,113.1 861.5,110.1 861.5,107.2 861.6,104.2 861.6,101.3 861.7,98.4 861.7,95.5 861.7,92.7 861.8,89.9 861.8,87.2 861.7,84.5 861.7,81.8 861.6,79.3 861.4,76.8 861.2,74.4 860.8,72.1 860.4,70.0 859.9,68.0 859.1,66.2 858.2,64.5 857.0,63.1 855.4,61.9 853.5,61.0 851.2,60.5 848.4,60.2 845.0,60.2 841.1,60.6 836.7,61.3 831.6,62.3 826.0,63.5 819.9,65.0 813.4,66.7 806.4,68.6 799.1,70.6 791.5,72.8 783.5,75.1 775.4,77.6 767.0,80.1M850.7,219.3 851.8,216.1 852.9,212.8 854.0,209.6 855.1,206.3 856.2,203.1 857.4,199.8 858.5,196.6 859.7,193.3 860.9,190.1 862.1,186.9 863.3,183.6 864.5,180.4 865.8,177.2 867.0,173.9 868.3,170.7 869.5,167.5 870.8,164.3 872.1,161.0 873.4,157.8 874.7,154.6 876.0,151.4 877.3,148.2 878.6,145.0 880.0,141.8 881.3,138.6 882.6,135.4 884.0,132.2 885.3,129.0 886.7,125.9 888.0,122.7 889.4,119.6 890.7,116.4 892.1,113.3 893.5,110.1 894.8,107.0 896.2,103.9 897.5,100.9 898.9,97.8 900.3,94.8 901.6,91.7 903.0,88.7 904.4,85.8 905.7,82.9 907.1,80.0 908.5,77.2 909.9,74.4 911.2,71.7 912.6,69.1 914.1,66.6 915.5,64.2 917.1,61.9 918.6,59.9 920.3,58.0 922.2,56.4 924.3,55.1 926.6,54.2 929.3,53.6 932.5,53.5 936.1,53.8 940.2,54.5 944.9,55.5 950.1,56.9 955.8,58.6 961.9,60.5 968.3,62.6 975.1,64.9 982.1,67.4 989.3,69.9 996.7,72.6" fill="none" stroke="#00fa72" stroke-width="1.39" stroke-dasharray="1.39 2.29"/>
<path d="M707.7,321.9 705.8,319.2 704.0,316.6 702.2,313.9 700.4,311.3 698.7,308.6 697.0,305.9 695.4,303.3 693.8,300.6 692.2,298.0 690.7,295.3 689.2,292.7 687.8,290.0 686.4,287.4 685.1,284.8 683.7,282.1 682.5,279.5 681.3,276.9 680.1,274.3 679.0,271.6 677.9,269.0 676.8,266.4 675.8,263.8 674.8,261.2 673.9,258.7 673.0,256.1 672.2,253.5 671.4,250.9 670.6,248.4 669.9,245.8 669.2,243.3 668.5,240.8 667.9,238.3 667.4,235.8 666.8,233.3 666.3,230.8 665.8,228.3 665.4,225.9 665.0,223.4 664.6,221.0 664.2,218.6 663.9,216.2 663.6,213.8 663.3,211.5 663.1,209.1 662.8,206.8 662.6,204.5 662.4,202.2 662.2,200.0 662.1,197.7 661.9,195.5 661.7,193.3 661.6,191.2 661.5,189.0 661.3,186.9 661.2,184.8 661.0,182.8 660.9,180.8 660.7,178.8 660.5,176.8 660.3,174.9 660.1,173.1 659.8,171.2 659.5,169.4 659.2,167.7 658.8,166.0 658.4,164.3 658.0,162.7 657.5,161.1 656.9,159.6 656.2,158.1 655.5,156.7 654.7,155.4 653.9,154.1 652.9,152.8 651.9,151.7 650.7,150.5 649.5,149.5 648.1,148.5 646.6,147.6 645.0,146.8 643.2,146.0 641.4,145.3 639.3,144.7 637.2,144.2 634.9,143.7 632.4,143.3 629.8,143.0 627.0,142.8 624.0,142.7 620.9,142.6 617.6,142.6 614.1,142.7 610.5,142.9 606.7,143.1 602.7,143.5 598.5,143.9 594.1,144.4 589.6,144.9 584.9,145.6 580.1,146.3 575.0,147.1 569.8,148.0 564.5,148.9 559.0,149.9 553.3,151.0 547.5,152.1 541.6,153.3M722.2,322.2 719.7,320.2 717.2,318.1 714.7,316.0 712.2,313.9 709.8,311.8 707.4,309.7 705.0,307.7 702.6,305.6 700.3,303.5 697.9,301.4 695.6,299.4 693.4,297.3 691.1,295.3 688.9,293.2 686.7,291.2 684.5,289.1 682.4,287.1 680.3,285.1 678.2,283.0 676.1,281.0 674.1,279.0 672.0,277.0 670.0,275.0 668.1,273.0 666.1,271.1 664.2,269.1 662.3,267.1 660.4,265.2 658.5,263.3 656.7,261.4 654.8,259.4 653.0,257.6 651.3,255.7 649.5,253.8 647.7,252.0 646.0,250.1 644.3,248.3 642.6,246.5 640.9,244.7 639.2,242.9 637.6,241.2 635.9,239.5 634.3,237.7 632.7,236.1 631.1,234.4 629.4,232.7 627.8,231.1 626.2,229.5 624.6,227.9 623.0,226.3 621.4,224.8 619.8,223.3 618.2,221.8 616.6,220.4 614.9,218.9 613.3,217.5 611.6,216.2 610.0,214.8 608.3,213.5 606.6,212.2 604.9,211.0 603.1,209.8 601.4,208.6 599.6,207.4 597.8,206.3 595.9,205.3 594.0,204.2 592.1,203.2 590.2,202.3 588.2,201.3 586.1,200.4 584.0,199.6 581.9,198.8 579.7,198.0 577.5,197.3 575.2,196.6 572.9,196.0 570.5,195.4 568.0,194.9 565.5,194.4 563.0,193.9 560.3,193.5 557.6,193.1 554.8,192.8 552.0,192.5 549.0,192.3 546.1,192.1 543.0,192.0 539.8,191.9 536.6,191.9 533.3,191.9 529.9,192.0 526.5,192.1 523.0,192.2 519.4,192.4 515.7,192.7 511.9,193.0 508.1,193.3 504.1,193.7 500.1,194.1 496.1,194.6 491.9,195.1 487.7,195.7M710.1,309.2 710.1,306.0 710.2,302.7 710.3,299.5 710.5,296.2 710.8,293.0 711.0,289.7 711.4,286.5 711.8,283.2 712.3,279.9 712.8,276.7 713.4,273.4 714.0,270.2 714.7,266.9 715.5,263.7 716.3,260.4 717.2,257.2 718.1,253.9 719.1,250.7 720.1,247.4 721.2,244.2 722.4,240.9 723.6,237.7 724.9,234.4 726.2,231.1 727.5,227.9 729.0,224.6 730.4,221.4 732.0,218.1 733.5,214.9 735.2,211.6 736.8,208.4 738.6,205.1 740.3,201.9 742.2,198.6 744.1,195.4 746.0,192.1 747.9,188.9 750.0,185.6 752.0,182.4 754.1,179.1 756.3,175.9 758.5,172.6 760.7,169.4 763.0,166.2 765.3,162.9 767.7,159.7 770.1,156.4 772.5,153.2 775.0,149.9 777.5,146.7 780.1,143.5 782.7,140.2 785.3,137.0 788.0,133.8 790.7,130.5 793.4,127.3 796.2,124.1 798.9,120.8 801.8,117.6 804.6,114.4 807.5,111.2 810.4,107.9 813.3,104.7 816.2,101.5 819.2,98.3 822.2,95.1 825.2,91.9 828.2,88.7 831.2,85.5 834.2,82.4 837.3,79.2 840.3,76.1 843.4,72.9 846.4,69.8 849.4,66.7 852.4,63.7 855.3,60.7 858.2,57.7 861.0,54.8 863.7,52.0 866.2,49.3 868.3,46.8 870.0,44.6 871.0,42.7 870.9,41.4 869.1,40.8 865.3,41.0 859.4,42.0M950.6,43.6 954.2,45.6 958.8,48.0 963.9,50.6M718.3,312.3 718.1,309.1 718.0,305.8 718.0,302.6 718.0,299.3 718.0,296.1 718.2,292.8 718.3,289.6 718.6,286.3 718.9,283.1 719.2,279.8 719.6,276.6 720.1,273.3 720.6,270.1 721.1,266.8 721.8,263.6 722.4,260.3 723.2,257.1 724.0,253.8 724.8,250.6 725.7,247.3 726.6,244.1 727.6,240.8 728.7,237.6 729.8,234.4 730.9,231.1 732.2,227.9 733.4,224.6 734.7,221.4 736.1,218.1 737.5,214.9 739.0,211.6 740.5,208.4 742.0,205.2 743.6,201.9 745.3,198.7 747.0,195.4 748.7,192.2 750.5,189.0 752.4,185.7 754.3,182.5 756.2,179.2 758.1,176.0 760.2,172.8 762.2,169.5 764.3,166.3 766.4,163.1 768.6,159.9 770.8,156.6 773.1,153.4 775.4,150.2 777.7,147.0 780.1,143.7 782.5,140.5 784.9,137.3 787.3,134.1 789.8,130.9 792.4,127.7 794.9,124.5 797.5,121.3 800.1,118.1 802.7,114.9 805.4,111.7 808.0,108.5 810.7,105.4 813.4,102.2 816.2,99.1 818.9,95.9 821.7,92.8 824.4,89.7 827.2,86.6 829.9,83.5 832.7,80.4 835.4,77.4 838.1,74.4 840.8,71.4 843.4,68.5 846.0,65.6 848.5,62.8 850.8,60.1 853.0,57.5 855.0,55.1 856.7,52.8 857.9,50.7 858.5,49.0 858.4,47.7 857.2,46.8 854.8,46.5 850.9,46.7 845.5,47.5 838.8,48.7M972.7,50.4 976.1,52.4 980.3,54.6 985.1,57.1 990.3,59.7 995.7,62.4 1001.4,65.1 1007.3,68.0 1013.3,70.9 1019.3,73.9 1025.5,76.9 1031.6,79.9M710.0,322.2 708.1,319.6 706.2,316.9 704.4,314.3 702.6,311.6 700.8,308.9 699.1,306.3 697.4,303.6 695.8,301.0 694.2,298.3 692.6,295.7 691.1,293.0 689.7,290.4 688.2,287.7 686.9,285.1 685.5,282.5 684.2,279.8 683.0,277.2 681.7,274.6 680.6,272.0 679.4,269.4 678.4,266.8 677.3,264.2 676.3,261.6 675.3,259.0 674.4,256.4 673.5,253.8 672.7,251.3 671.9,248.7 671.1,246.2 670.4,243.7 669.7,241.1 669.0,238.6 668.4,236.1 667.8,233.6 667.3,231.2 666.7,228.7 666.3,226.3 665.8,223.8 665.4,221.4 665.0,219.0 664.6,216.6 664.2,214.2 663.9,211.9 663.6,209.5 663.3,207.2 663.1,204.9 662.8,202.7 662.6,200.4 662.4,198.2 662.2,196.0 662.0,193.8 661.8,191.6 661.6,189.5 661.4,187.4 661.2,185.3 661.0,183.3 660.8,181.3 660.5,179.3 660.3,177.4 660.0,175.5 659.7,173.6 659.4,171.8 659.1,170.0 658.7,168.3 658.3,166.6 657.8,164.9 657.3,163.3 656.7,161.8 656.0,160.3 655.3,158.8 654.6,157.5 653.7,156.1 652.8,154.8 651.7,153.6 650.6,152.5 649.4,151.4 648.1,150.4 646.6,149.4 645.1,148.5 643.4,147.7 641.6,147.0 639.6,146.3 637.5,145.7 635.3,145.2 632.9,144.8 630.4,144.4 627.7,144.1 624.8,143.9 621.8,143.8 618.6,143.8 615.2,143.8 611.7,143.9 608.0,144.1 604.1,144.4 600.1,144.8 595.8,145.2 591.4,145.7 586.9,146.3 582.1,147.0 577.2,147.7 572.1,148.5 566.9,149.4 561.5,150.3 556.0,151.4 550.3,152.4 544.5,153.6 538.5,154.8 532.5,156.1" fill="none" stroke="#ec84ee" stroke-width="1.39" stroke-dasharray="1.39 2.29"/>
<path d="M612.5,164.7 560.8,183.3M657.5,171.3 669.2,164.7M757.3,74.0 720.0,86.0M609.3,129.3 614.7,124.7M605.3,137.3 588.0,148.7M764.0,85.3 802.7,66.0M808.7,88.7 779.3,100.7M726.0,108.7 750.7,94.7M868.0,61.3 885.3,48.0M877.3,64.7 874.0,56.7M852.0,85.3 845.3,79.3M861.3,78.7 868.0,73.3M822.7,134.7 826.7,115.3M773.3,126.7 786.7,145.3M728.7,179.3 742.7,172.7M960.0,75.3 971.3,86.0M1038.7,88.0 1062.7,99.3M1062.0,104.0 1075.3,105.3M1066.0,108.0 1078.0,116.0M1069.3,90.7 1083.3,93.3M1155.3,111.3 1164.0,114.0M1245.0,144.2 1251.7,146.7M1251.7,150.8 1259.2,151.7M1306.7,189.2 1295.0,195.8M612.7,164.7 600.0,168.0M594.0,173.0 579.0,177.0M1035.0,76.0 1047.0,77.3M803.3,66.7 766.7,71.7M741.3,174.0 729.3,178.7M668.0,106.0 655.0,112.0M690.0,118.0 700.0,112.0M836.0,96.0 842.0,108.0M925.0,80.0 915.0,70.0M1010.0,92.0 1022.0,99.0M790.0,160.0 780.0,150.0M650.0,146.0 640.0,150.0M700.0,160.0 712.0,155.0M864.7,61.3 884.0,47.3M930.0,62.0 941.0,70.0M1120.0,125.0 1132.0,132.0M702.0,90.0 690.0,95.0M752.0,130.0 745.0,120.0M820.0,80.0 828.0,72.0M1080.0,100.0 1090.0,106.0M980.0,60.0 992.0,66.0" fill="none" stroke="#717171" stroke-width="1.35"/>
<path d="M555.6,211.2 553.7,211.3 551.9,211.4 550.0,211.6 548.1,211.7 546.1,211.9 544.2,212.1 542.3,212.2 540.3,212.4 538.3,212.6 536.4,212.8 534.4,213.1 532.4,213.3 530.3,213.5 528.3,213.8M613.3,133.4 610.0,134.1 606.6,134.9 603.2,135.6 599.7,136.4 596.2,137.2 592.7,138.0M620.6,136.4 617.9,136.9 615.2,137.3 612.4,137.8 609.6,138.4 606.7,138.9M653.4,135.0 651.2,135.2 648.9,135.4 646.6,135.7 644.2,136.0 641.7,136.3 639.2,136.6 636.7,137.0M661.6,138.5 659.9,138.6 658.3,138.6 656.6,138.6 654.8,138.7 653.0,138.8 651.2,138.9 649.3,139.0M672.8,103.7 668.3,104.7M1140.2,105.8 1141.9,106.9 1143.7,108.0M723.5,103.2 722.2,103.0 720.7,103.0 719.1,102.9 717.5,102.9 715.8,102.9 714.0,103.0 712.1,103.1 710.2,103.2 708.1,103.4 706.0,103.6 703.8,103.8 701.5,104.1 699.2,104.4 696.7,104.7 694.2,105.0 691.6,105.4 689.0,105.9 686.2,106.3 683.4,106.8 680.5,107.3 677.5,107.8 674.4,108.4 671.3,109.0M740.8,100.7 739.6,100.5 738.3,100.3 737.0,100.2 735.6,100.1 734.1,100.0 732.5,100.0 730.9,100.0 729.1,100.0 727.3,100.1 725.5,100.2 723.5,100.3 721.4,100.5 719.3,100.7M738.1,112.1 737.9,111.4 737.6,110.8 737.2,110.1 736.8,109.5 736.4,108.9 735.9,108.3 735.3,107.8 734.7,107.3M728.0,130.8 728.0,129.9 728.1,129.0 728.1,128.1 728.2,127.2 728.1,126.3 728.1,125.4 728.0,124.6 728.0,123.8 727.8,123.0 727.7,122.2 727.5,121.4 727.3,120.7M705.1,150.8 704.8,150.0 704.5,149.2 704.2,148.4 703.8,147.6 703.5,146.9 703.1,146.1 702.7,145.4 702.2,144.7 701.8,144.0 701.3,143.3M804.3,87.3 804.9,86.2 805.6,85.0 806.1,83.9 806.6,82.8 807.1,81.8 807.6,80.8 807.9,79.8 808.2,78.8 808.5,77.9 808.7,77.0 808.8,76.2 808.8,75.4 808.8,74.6 808.6,73.9 808.4,73.3 808.0,72.7M795.0,118.9 796.3,117.3 797.5,115.6 798.7,114.0 800.0,112.3 801.2,110.7 802.5,109.0 803.7,107.4 805.0,105.8 806.2,104.1 807.5,102.5 808.7,100.9 810.0,99.3M786.2,184.6 787.7,183.0 789.1,181.5 790.6,179.9 792.0,178.4 793.5,176.8 794.9,175.3 796.4,173.7 797.9,172.2 799.3,170.6 800.8,169.1 802.3,167.5 803.8,166.0 805.3,164.4 806.8,162.9 808.4,161.4 809.9,159.8 811.4,158.3 812.9,156.8 814.5,155.3 816.0,153.8 817.5,152.2 819.1,150.7 820.6,149.2 822.2,147.7 823.7,146.2 825.3,144.7M905.8,52.3 907.2,51.6 908.7,51.1 910.2,50.6 911.7,50.3 913.3,50.1 915.0,50.0 916.7,50.1 918.6,50.3 920.5,50.6 922.5,51.0 924.6,51.5 926.8,52.2 929.1,52.9 931.5,53.8 934.0,54.7M1096.2,103.8 1100.1,105.9 1104.0,108.0M1097.6,105.2 1100.7,106.9 1103.7,108.5 1106.8,110.1 1109.8,111.7 1112.9,113.4 1115.9,115.0 1118.9,116.7 1122.0,118.3 1125.0,120.0M1109.9,118.4 1113.0,120.0 1116.2,121.7 1119.3,123.4 1122.4,125.0 1125.5,126.7 1128.6,128.3 1131.7,130.0M657.5,108.8 651.2,110.3M1233.9,189.3 1235.9,190.9 1238.0,192.6 1240.0,194.2" fill="none" stroke="#ff1c00" stroke-width="1.45"/>
<path d="M424.0,225.5 420.8,226.6 417.5,227.7 414.2,228.8M713.9,128.1 713.0,127.7 712.0,127.3 711.0,126.9 710.0,126.5 708.9,126.2 707.7,125.9 706.5,125.7 705.3,125.4 704.0,125.2 702.7,125.0M705.8,141.4 705.3,140.8 704.6,140.2 704.0,139.6 703.3,139.0 702.6,138.4 701.9,137.9 701.2,137.4 700.4,136.9 699.6,136.4 698.7,136.0M862.2,60.4 863.9,58.7 865.6,57.1 867.2,55.5 868.9,53.9 870.6,52.3 872.3,50.8 873.9,49.2 875.6,47.6 877.2,46.0 878.8,44.5 880.5,43.0 882.0,41.4 883.6,40.0 885.0,38.5 886.4,37.1 887.6,35.9 888.5,34.7 889.0,33.8 888.7,33.3M763.9,197.0 765.3,195.4 766.7,193.9 768.1,192.3 769.6,190.8 771.0,189.2 772.5,187.6 773.9,186.1 775.4,184.5 776.9,182.9 778.4,181.4 779.9,179.8 781.4,178.3 782.9,176.7 784.4,175.2 785.9,173.6 787.5,172.1 789.0,170.5 790.5,169.0 792.1,167.4 793.7,165.9 795.2,164.4 796.8,162.8 798.4,161.3 800.0,159.8 801.5,158.2 803.1,156.7 804.7,155.2 806.3,153.7 807.9,152.1 809.6,150.6 811.2,149.1 812.8,147.6 814.4,146.1 816.1,144.6 817.7,143.1 819.3,141.6 821.0,140.1 822.6,138.6 824.2,137.1 825.9,135.6 827.5,134.2 829.2,132.7 830.8,131.2 832.5,129.8 834.1,128.3 835.8,126.8 837.5,125.4 839.1,123.9 840.8,122.5 842.4,121.1 844.1,119.7 845.7,118.2 847.4,116.8 849.0,115.4 850.7,114.0 852.3,112.6 854.0,111.3 855.6,109.9 857.3,108.5 858.9,107.2 860.6,105.9 862.2,104.5 863.8,103.2 865.4,101.9 867.1,100.6 868.7,99.4 870.3,98.1 871.9,96.9 873.5,95.6 875.1,94.4 876.7,93.2 878.3,92.1 879.8,90.9 881.4,89.8 883.0,88.7 884.5,87.6 886.1,86.5 887.6,85.5 889.2,84.5 890.7,83.5M892.6,108.7 894.2,107.9 895.8,107.1 897.3,106.3 898.9,105.5 900.5,104.8 902.1,104.1 903.7,103.4 905.2,102.7 906.8,102.1 908.4,101.5 910.0,101.0M933.3,86.4 935.1,86.6 936.9,86.9 938.7,87.2 940.5,87.6 942.3,88.0 944.2,88.4 946.1,88.9 948.0,89.4 950.0,90.0M891.7,68.8 893.2,67.5 894.7,66.3 896.1,65.1 897.6,64.0 899.0,62.9 900.4,61.9 901.9,60.9 903.3,60.0M906.7,66.8 908.1,66.1 909.5,65.5 910.9,64.9 912.4,64.4 913.9,63.9 915.3,63.5 916.8,63.2 918.4,63.0 920.0,62.8 921.6,62.7 923.2,62.7 924.9,62.8 926.7,62.9 928.5,63.2 930.4,63.5 932.3,63.8 934.3,64.3 936.3,64.8 938.4,65.4 940.6,66.0 942.8,66.7 945.1,67.5 947.4,68.3 949.8,69.1 952.2,70.0 954.7,71.0M902.3,49.1 903.7,48.4 905.2,47.8 906.7,47.3 908.2,46.9 909.7,46.7 911.3,46.6 913.0,46.6 914.8,46.8 916.7,47.1 918.6,47.6 920.7,48.2 922.8,48.9 925.1,49.7 927.5,50.6 929.9,51.6 932.5,52.6 935.1,53.7 937.7,54.9 940.5,56.1 943.3,57.4 946.1,58.7 949.0,60.0M994.9,106.7 997.4,107.8 999.9,109.0 1002.4,110.1 1005.0,111.3 1007.6,112.5 1010.2,113.7 1012.8,114.9 1015.4,116.1 1018.0,117.4 1020.7,118.6 1023.3,119.9 1026.0,121.2 1028.6,122.5 1031.3,123.8 1034.0,125.1M1043.0,102.6 1046.1,104.3 1049.3,105.9 1052.4,107.5 1055.5,109.2 1058.6,110.8 1061.7,112.4 1064.8,114.1 1067.9,115.7 1070.9,117.4 1074.0,119.0M966.6,73.0 969.7,74.5 972.9,76.1 976.1,77.6 979.3,79.2 982.5,80.8 985.7,82.4 989.0,84.0M982.1,69.5 985.7,71.2 989.3,72.9 992.8,74.6 996.4,76.3 1000.0,78.0M805.6,86.6 806.6,85.2 807.5,83.9 808.4,82.5 809.2,81.3 810.0,80.0M940.1,56.1 942.9,57.3 945.8,58.5 948.7,59.7" fill="none" stroke="#dc11ff" stroke-width="1.45"/>
<path d="M551.1,190.1 554.7,188.2 558.3,186.2 562.0,184.2M812.0,68.6 816.0,67.0 819.9,65.5 823.9,64.0 827.7,62.5 831.6,61.0 835.4,59.6 839.2,58.1 843.0,56.7 846.7,55.3M935.9,45.8 935.1,46.3 934.6,46.9 934.3,47.6 934.2,48.4 934.2,49.4 934.3,50.4 934.6,51.4 934.9,52.6 935.3,53.7 935.8,55.0 936.3,56.3 936.8,57.6 937.4,58.9 938.0,60.3 938.7,61.7 939.3,63.1 940.0,64.5 940.7,66.0M1095.1,111.2 1093.7,111.3 1092.3,111.5 1091.1,111.7 1089.9,112.0 1088.8,112.2 1087.7,112.6 1086.7,112.9M1200.3,156.9 1198.4,156.7 1196.4,156.6 1194.5,156.5 1192.6,156.4 1190.8,156.3" fill="none" stroke="#59d100" stroke-width="1.45"/>
<path d="M454.2,211.6 450.7,213.2 447.2,214.7M521.8,219.9 518.8,220.9 515.8,222.0M767.0,80.1 762.4,81.5 757.7,82.9 752.9,84.3 748.1,85.8 743.3,87.3M996.7,72.6 1000.5,73.9 1004.2,75.3 1008.0,76.7 1011.9,78.0 1015.7,79.5 1019.6,80.9 1023.5,82.3 1027.4,83.8 1031.4,85.2 1035.3,86.7" fill="none" stroke="#00fa72" stroke-width="1.45"/>
<path d="M541.6,153.3 538.3,154.0 535.0,154.7 531.6,155.4M487.7,195.7 485.2,196.1 482.6,196.4 480.1,196.8 477.5,197.2M963.9,50.6 966.9,52.1 970.1,53.6 973.2,55.2 976.5,56.8 979.8,58.4 983.1,60.0 986.5,61.7 989.9,63.3 993.3,65.0M1031.6,79.9 1035.0,81.6 1038.4,83.2 1041.8,84.9 1045.2,86.6 1048.6,88.3 1052.0,90.0M532.5,156.1 529.2,156.8M1277.4,157.5 1277.5,158.2 1277.8,158.9 1278.0,159.7 1278.3,160.4 1278.5,161.2 1278.9,162.0 1279.2,162.8" fill="none" stroke="#ec84ee" stroke-width="1.45"/>
<path d="M527.1,212.7h2.3v2.3h-2.3zM591.6,136.8h2.3v2.3h-2.3zM605.6,137.8h2.3v2.3h-2.3zM635.6,135.8h2.3v2.3h-2.3zM648.1,137.8h2.3v2.3h-2.3zM1142.5,106.8h2.3v2.3h-2.3zM670.2,107.8h2.3v2.3h-2.3zM718.1,99.5h2.3v2.3h-2.3zM733.6,106.2h2.3v2.3h-2.3zM726.1,119.5h2.3v2.3h-2.3zM700.1,142.2h2.3v2.3h-2.3zM806.9,71.5h2.3v2.3h-2.3zM808.9,98.2h2.3v2.3h-2.3zM824.1,143.5h2.3v2.3h-2.3zM932.8,53.5h2.3v2.3h-2.3zM1102.8,106.8h2.3v2.3h-2.3zM1123.8,118.8h2.3v2.3h-2.3zM1130.5,128.8h2.3v2.3h-2.3zM650.1,109.2h2.3v2.3h-2.3zM1238.8,193.0h2.3v2.3h-2.3zM413.0,227.7h2.3v2.3h-2.3zM701.6,123.9h2.3v2.3h-2.3zM697.6,134.8h2.3v2.3h-2.3zM887.6,32.1h2.3v2.3h-2.3zM889.6,82.3h2.3v2.3h-2.3zM908.9,99.8h2.3v2.3h-2.3zM948.9,88.8h2.3v2.3h-2.3zM902.1,58.9h2.3v2.3h-2.3zM953.6,69.8h2.3v2.3h-2.3zM947.9,58.9h2.3v2.3h-2.3zM1032.8,123.9h2.3v2.3h-2.3zM1072.8,117.8h2.3v2.3h-2.3zM987.9,82.8h2.3v2.3h-2.3zM998.9,76.8h2.3v2.3h-2.3zM808.9,78.8h2.3v2.3h-2.3zM947.5,58.5h2.3v2.3h-2.3zM560.9,183.0h2.3v2.3h-2.3zM845.6,54.2h2.3v2.3h-2.3zM939.6,64.8h2.3v2.3h-2.3zM1085.5,111.7h2.3v2.3h-2.3zM1189.6,155.2h2.3v2.3h-2.3zM446.1,213.5h2.3v2.3h-2.3zM514.6,220.8h2.3v2.3h-2.3zM742.1,86.1h2.3v2.3h-2.3zM1034.1,85.6h2.3v2.3h-2.3zM530.5,154.2h2.3v2.3h-2.3zM476.4,196.0h2.3v2.3h-2.3zM992.1,63.8h2.3v2.3h-2.3zM1050.8,88.8h2.3v2.3h-2.3zM1278.0,161.6h2.3v2.3h-2.3z" fill="#ff5648"/>
<path d="M486.2,228.7 h6 M489.2,225.7 v6M461.7,242.7 h6 M464.7,239.7 v6M451.7,240.5 h6 M454.7,237.5 v6M487.8,230.8 h6 M490.8,227.8 v6M436.7,249.0 h6 M439.7,246.0 v6M828.3,220.0 h6 M831.3,217.0 v6M807.7,224.7 h6 M810.7,221.7 v6M861.0,213.3 h6 M864.0,210.3 v6M847.7,219.3 h6 M850.7,216.3 v6M704.7,321.9 h6 M707.7,318.9 v6M719.2,322.2 h6 M722.2,319.2 v6M707.1,309.2 h6 M710.1,306.2 v6M715.3,312.3 h6 M718.3,309.3 v6M707.0,322.2 h6 M710.0,319.2 v6M735.0,238.3 h6 M738.0,235.3 v6M746.3,241.3 h6 M749.3,238.3 v6M749.0,244.0 h6 M752.0,241.0 v6M735.0,260.7 h6 M738.0,257.7 v6M711.0,270.7 h6 M714.0,267.7 v6M721.5,271.0 h6 M724.5,268.0 v6M713.7,242.7 h6 M716.7,239.7 v6M718.0,238.5 h6 M721.0,235.5 v6" stroke="#ff0000" stroke-width="1" fill="none"/>
<path d="M748.3,265.8 747.6,267.9 746.7,270.0 745.7,272.0 744.6,274.0 743.3,276.0 741.9,277.8 740.3,279.6 738.7,281.2 736.9,282.8 735.1,284.2 733.2,285.4 731.2,286.5 729.1,287.5 727.0,288.3 724.9,288.9 722.7,289.3 720.6,289.6 718.4,289.7 716.3,289.6 714.3,289.3 712.3,288.9 710.3,288.3 708.5,287.5 706.8,286.5 705.2,285.4 703.7,284.2 702.5,282.8 701.3,281.2 700.4,279.6 699.6,277.8 699.1,276.0 698.7,274.0 698.6,272.0 698.6,270.0 698.9,267.9 699.4,265.8 700.2,263.7 701.1,261.6 702.2,259.5 703.5,257.4 705.0,255.4 706.7,253.5 708.5,251.7 710.4,249.9 712.4,248.3 714.6,246.8 716.8,245.5 719.0,244.3 721.3,243.3 723.7,242.4 726.0,241.8 728.2,241.3 730.5,241.0 732.6,240.9 734.7,241.0 736.7,241.3 738.6,241.8 740.3,242.4 741.9,243.3 743.4,244.3 744.7,245.5 745.9,246.8 746.9,248.3 747.8,249.9 748.4,251.7 748.9,253.5 749.3,255.4 749.4,257.4 749.4,259.5 749.2,261.6 748.8,263.7 748.3,265.8Z" fill="none" stroke="#ff1c00" stroke-width="2.1"/>
<path d="M757.5,245.4 756.6,247.5 755.5,249.6 754.3,251.6 753.0,253.6 751.5,255.5 749.9,257.4 748.2,259.1 746.4,260.7 744.5,262.3 742.5,263.6 740.4,264.9 738.3,266.0 736.1,266.9 734.0,267.7 731.8,268.3 729.6,268.7 727.4,269.0 725.3,269.1 723.2,269.0 721.1,268.7 719.2,268.3 717.3,267.7 715.6,266.9 713.9,266.0 712.4,264.9 711.1,263.6 710.0,262.3 709.0,260.7 708.2,259.1 707.6,257.4 707.2,255.5 707.1,253.6 707.1,251.6 707.4,249.6 707.9,247.5 708.6,245.4 709.5,243.3 710.7,241.1 712.0,239.1 713.5,237.0 715.2,235.0 717.0,233.1 719.0,231.2 721.1,229.5 723.3,227.8 725.6,226.3 727.9,225.0 730.3,223.8 732.7,222.7 735.1,221.9 737.5,221.2 739.8,220.7 742.1,220.4 744.2,220.3 746.3,220.4 748.3,220.7 750.1,221.2 751.8,221.9 753.3,222.7 754.7,223.8 755.9,225.0 756.9,226.3 757.8,227.8 758.5,229.5 759.0,231.2 759.3,233.1 759.4,235.0 759.4,237.0 759.2,239.1 758.8,241.1 758.2,243.3 757.5,245.4Z" fill="none" stroke="#dc11ff" stroke-width="2.1"/>
<path d="M482.0,240.7 479.7,242.8 477.2,244.9 474.7,247.0 472.0,249.0 469.4,250.9 466.6,252.7 463.9,254.4 461.1,256.1 458.3,257.6 455.6,259.0 452.9,260.2 450.2,261.3 447.5,262.2 444.9,263.0 442.4,263.6 440.0,264.0 437.7,264.3 435.5,264.4 433.4,264.3 431.5,264.0 429.8,263.6 428.3,263.0 426.9,262.2 425.8,261.3 424.9,260.2 424.2,259.0 423.9,257.6 423.7,256.1 423.9,254.4 424.4,252.7 425.1,250.9 426.1,249.0 427.5,247.0 429.1,244.9 431.0,242.8 433.2,240.7 435.6,238.6 438.3,236.5 441.1,234.4 444.2,232.3 447.5,230.3 450.8,228.4 454.3,226.5 457.9,224.8 461.4,223.2 465.0,221.7 468.5,220.3 471.9,219.1 475.2,218.0 478.4,217.2 481.4,216.5 484.1,216.0 486.6,215.7 488.9,215.6 490.9,215.7 492.6,216.0 494.0,216.5 495.0,217.2 495.8,218.0 496.3,219.1 496.5,220.3 496.3,221.7 495.9,223.2 495.2,224.8 494.3,226.5 493.1,228.4 491.7,230.3 490.1,232.3 488.3,234.4 486.4,236.5 484.3,238.6 482.0,240.7Z" fill="none" stroke="#59d100" stroke-width="2.1"/>
<path d="M864.2,218.6 863.7,220.7 863.0,222.8 862.2,224.8 861.2,226.8 860.0,228.7 858.7,230.5 857.2,232.2 855.6,233.8 853.9,235.3 852.1,236.6 850.2,237.9 848.2,238.9 846.2,239.9 844.1,240.6 842.0,241.2 839.8,241.6 837.7,241.9 835.5,242.0 833.4,241.9 831.4,241.6 829.4,241.2 827.4,240.6 825.6,239.9 823.9,238.9 822.2,237.9 820.7,236.6 819.4,235.3 818.2,233.8 817.2,232.2 816.4,230.5 815.7,228.7 815.2,226.8 815.0,224.8 814.9,222.8 815.0,220.7 815.4,218.6 815.9,216.5 816.6,214.3 817.5,212.2 818.6,210.2 819.9,208.2 821.3,206.2 822.9,204.3 824.6,202.6 826.4,200.9 828.4,199.4 830.4,198.0 832.5,196.8 834.6,195.7 836.8,194.8 839.0,194.1 841.2,193.6 843.4,193.3 845.5,193.2 847.6,193.3 849.7,193.6 851.6,194.1 853.5,194.8 855.2,195.7 856.8,196.8 858.3,198.0 859.7,199.4 860.9,200.9 862.0,202.6 862.9,204.3 863.6,206.2 864.2,208.2 864.5,210.2 864.7,212.2 864.8,214.3 864.6,216.5 864.2,218.6Z" fill="none" stroke="#00fa72" stroke-width="2.1"/>
<path d="M740.4,317.0 740.3,319.1 740.0,321.3 739.6,323.3 739.0,325.3 738.2,327.3 737.3,329.2 736.2,331.0 735.0,332.7 733.7,334.2 732.3,335.7 730.7,337.0 729.0,338.1 727.2,339.1 725.3,339.9 723.3,340.6 721.3,341.0 719.2,341.3 717.1,341.4 715.0,341.3 712.9,341.0 710.7,340.6 708.6,339.9 706.6,339.1 704.6,338.1 702.7,337.0 700.9,335.7 699.2,334.2 697.7,332.7 696.3,331.0 695.0,329.2 694.0,327.3 693.1,325.3 692.4,323.3 691.9,321.3 691.6,319.1 691.6,317.0 691.7,314.9 692.1,312.8 692.6,310.7 693.4,308.7 694.4,306.7 695.5,304.9 696.8,303.1 698.3,301.4 699.9,299.8 701.6,298.4 703.5,297.0 705.4,295.9 707.4,294.9 709.5,294.1 711.6,293.4 713.8,293.0 715.9,292.7 718.0,292.6 720.2,292.7 722.2,293.0 724.2,293.4 726.2,294.1 728.0,294.9 729.8,295.9 731.4,297.0 733.0,298.4 734.4,299.8 735.6,301.4 736.8,303.1 737.8,304.9 738.6,306.7 739.3,308.7 739.8,310.7 740.2,312.8 740.4,314.9 740.4,317.0Z" fill="none" stroke="#ec84ee" stroke-width="2.1"/>
<text x="902.1" y="25.4" text-anchor="middle" font-size="9.72" fill="#8e8e8e" style="font-family:'DejaVu Sans','Liberation Sans',sans-serif">+90<tspan dx="2.2" dy="-3.2" font-size="6.8">°</tspan></text>
<text x="902.1" y="123.0" text-anchor="middle" font-size="9.72" fill="#8e8e8e" style="font-family:'DejaVu Sans','Liberation Sans',sans-serif">+60<tspan dx="2.2" dy="-3.2" font-size="6.8">°</tspan></text>
<text x="902.1" y="220.5" text-anchor="middle" font-size="9.72" fill="#8e8e8e" style="font-family:'DejaVu Sans','Liberation Sans',sans-serif">+30<tspan dx="2.2" dy="-3.2" font-size="6.8">°</tspan></text>
<text x="902.1" y="427.7" text-anchor="middle" font-size="9.72" fill="#8e8e8e" style="font-family:'DejaVu Sans','Liberation Sans',sans-serif">−30<tspan dx="2.2" dy="-3.2" font-size="6.8">°</tspan></text>
<text x="902.1" y="525.2" text-anchor="middle" font-size="9.72" fill="#8e8e8e" style="font-family:'DejaVu Sans','Liberation Sans',sans-serif">−60<tspan dx="2.2" dy="-3.2" font-size="6.8">°</tspan></text>
<text x="902.1" y="622.8" text-anchor="middle" font-size="9.72" fill="#8e8e8e" style="font-family:'DejaVu Sans','Liberation Sans',sans-serif">−90<tspan dx="2.2" dy="-3.2" font-size="6.8">°</tspan></text>
<text x="1488.1" y="329.9" text-anchor="middle" font-size="9.72" fill="#8e8e8e" style="font-family:'DejaVu Sans','Liberation Sans',sans-serif">+180<tspan dx="2.2" dy="-3.2" font-size="6.8">°</tspan></text>
<text x="1390.5" y="329.9" text-anchor="middle" font-size="9.72" fill="#8e8e8e" style="font-family:'DejaVu Sans','Liberation Sans',sans-serif">+210<tspan dx="2.2" dy="-3.2" font-size="6.8">°</tspan></text>
<text x="1292.8" y="329.9" text-anchor="middle" font-size="9.72" fill="#8e8e8e" style="font-family:'DejaVu Sans','Liberation Sans',sans-serif">+240<tspan dx="2.2" dy="-3.2" font-size="6.8">°</tspan></text>
<text x="1195.1" y="329.9" text-anchor="middle" font-size="9.72" fill="#8e8e8e" style="font-family:'DejaVu Sans','Liberation Sans',sans-serif">+270<tspan dx="2.2" dy="-3.2" font-size="6.8">°</tspan></text>
<text x="1097.4" y="329.9" text-anchor="middle" font-size="9.72" fill="#8e8e8e" style="font-family:'DejaVu Sans','Liberation Sans',sans-serif">+300<tspan dx="2.2" dy="-3.2" font-size="6.8">°</tspan></text>
<text x="999.7" y="329.9" text-anchor="middle" font-size="9.72" fill="#8e8e8e" style="font-family:'DejaVu Sans','Liberation Sans',sans-serif">+330<tspan dx="2.2" dy="-3.2" font-size="6.8">°</tspan></text>
<text x="902.1" y="329.9" text-anchor="middle" font-size="9.72" fill="#8e8e8e" style="font-family:'DejaVu Sans','Liberation Sans',sans-serif">+0<tspan dx="2.2" dy="-3.2" font-size="6.8">°</tspan></text>
<text x="804.4" y="329.9" text-anchor="middle" font-size="9.72" fill="#8e8e8e" style="font-family:'DejaVu Sans','Liberation Sans',sans-serif">+30<tspan dx="2.2" dy="-3.2" font-size="6.8">°</tspan></text>
<text x="706.7" y="329.9" text-anchor="middle" font-size="9.72" fill="#8e8e8e" style="font-family:'DejaVu Sans','Liberation Sans',sans-serif">+60<tspan dx="2.2" dy="-3.2" font-size="6.8">°</tspan></text>
<text x="609.0" y="329.9" text-anchor="middle" font-size="9.72" fill="#8e8e8e" style="font-family:'DejaVu Sans','Liberation Sans',sans-serif">+90<tspan dx="2.2" dy="-3.2" font-size="6.8">°</tspan></text>
<text x="511.3" y="329.9" text-anchor="middle" font-size="9.72" fill="#8e8e8e" style="font-family:'DejaVu Sans','Liberation Sans',sans-serif">+120<tspan dx="2.2" dy="-3.2" font-size="6.8">°</tspan></text>
<text x="413.7" y="329.9" text-anchor="middle" font-size="9.72" fill="#8e8e8e" style="font-family:'DejaVu Sans','Liberation Sans',sans-serif">+150<tspan dx="2.2" dy="-3.2" font-size="6.8">°</tspan></text>
<text x="316.0" y="329.9" text-anchor="middle" font-size="9.72" fill="#8e8e8e" style="font-family:'DejaVu Sans','Liberation Sans',sans-serif">+180<tspan dx="2.2" dy="-3.2" font-size="6.8">°</tspan></text>
<text x="723.3" y="268.7" text-anchor="middle" font-size="10" fill="#fff" style="font-family:'DejaVu Sans','Liberation Sans',sans-serif">STA</text>
<text x="732.6" y="248.1" text-anchor="middle" font-size="10" fill="#fff" style="font-family:'DejaVu Sans','Liberation Sans',sans-serif">NTA</text>
<text x="457.7" y="243.4" text-anchor="middle" font-size="10" fill="#fff" style="font-family:'DejaVu Sans','Liberation Sans',sans-serif">LEO</text>
<text x="839.3" y="221.0" text-anchor="middle" font-size="10" fill="#fff" style="font-family:'DejaVu Sans','Liberation Sans',sans-serif">AND</text>
<text x="715.3" y="320.4" text-anchor="middle" font-size="10" fill="#fff" style="font-family:'DejaVu Sans','Liberation Sans',sans-serif">OER</text>
<text font-size="13.89" fill="#fff" style="font-family:'DejaVu Sans Mono','Liberation Mono',monospace;white-space:pre" xml:space="preserve"><tspan x="315.6" y="29.60">KR000M</tspan><tspan x="315.6" y="42.76">Beg: 20251110 09:32:05 (sol = 227.88°)</tspan><tspan x="315.6" y="56.72">End: 20251110 21:08:39 (sol = 228.37°)</tspan><tspan x="315.6" y="69.08">--------------------------------------</tspan><tspan x="315.6" y="82.24">...: 45</tspan><tspan x="315.6" y="95.40">STA: 20</tspan><tspan x="315.6" y="107.96">NTA: 17</tspan><tspan x="315.6" y="121.72">LEO: 5</tspan><tspan x="315.6" y="134.88">OER: 5</tspan><tspan x="315.6" y="148.04">AND: 4</tspan></text>
<path d="M74.00,842.2 V641.5M218.00,842.2 V641.5M365.00,842.2 V641.5M504.50,842.2 V641.5M650.00,842.2 V641.5M796.75,842.2 V641.5M940.00,842.2 V641.5M1090.75,842.2 V641.5M1238.75,842.2 V641.5M1394.00,842.2 V641.5M1548.00,842.2 V641.5M1687.10,842.2 V641.5" stroke="#7a7a7a" stroke-width="1.8" stroke-dasharray="2.08 3.44" fill="none"/>
<text transform="translate(149.1,643.9) rotate(-90)" text-anchor="end" font-size="27.7" fill="#575757" style="font-family:'DejaVu Sans','Liberation Sans',sans-serif">APR</text>
<text transform="translate(294.1,643.9) rotate(-90)" text-anchor="end" font-size="27.7" fill="#575757" style="font-family:'DejaVu Sans','Liberation Sans',sans-serif">MAY</text>
<text transform="translate(436.3,643.9) rotate(-90)" text-anchor="end" font-size="27.7" fill="#575757" style="font-family:'DejaVu Sans','Liberation Sans',sans-serif">JUN</text>
<text transform="translate(576.3,643.9) rotate(-90)" text-anchor="end" font-size="27.7" fill="#575757" style="font-family:'DejaVu Sans','Liberation Sans',sans-serif">JUL</text>
<text transform="translate(723.3,643.9) rotate(-90)" text-anchor="end" font-size="27.7" fill="#575757" style="font-family:'DejaVu Sans','Liberation Sans',sans-serif">AUG</text>
<text transform="translate(872.5,643.9) rotate(-90)" text-anchor="end" font-size="27.7" fill="#575757" style="font-family:'DejaVu Sans','Liberation Sans',sans-serif">SEP</text>
<text transform="translate(1016.3,643.9) rotate(-90)" text-anchor="end" font-size="27.7" fill="#575757" style="font-family:'DejaVu Sans','Liberation Sans',sans-serif">OCT</text>
<text transform="translate(1169.5,643.9) rotate(-90)" text-anchor="end" font-size="27.7" fill="#575757" style="font-family:'DejaVu Sans','Liberation Sans',sans-serif">NOV</text>
<text transform="translate(1318.3,643.9) rotate(-90)" text-anchor="end" font-size="27.7" fill="#575757" style="font-family:'DejaVu Sans','Liberation Sans',sans-serif">DEC</text>
<text transform="translate(1469.5,643.9) rotate(-90)" text-anchor="end" font-size="27.7" fill="#575757" style="font-family:'DejaVu Sans','Liberation Sans',sans-serif">JAN</text>
<text transform="translate(1628.3,643.9) rotate(-90)" text-anchor="end" font-size="27.7" fill="#575757" style="font-family:'DejaVu Sans','Liberation Sans',sans-serif">FEB</text>
<text transform="translate(1766.9,643.9) rotate(-90)" text-anchor="end" font-size="27.7" fill="#575757" style="font-family:'DejaVu Sans','Liberation Sans',sans-serif">MAR</text>
<path d="M106.0,834.00 H129.0M165.0,834.00 H345.0M366.0,834.00 H625.0M635.0,834.00 H786.0M807.0,834.00 H899.0M920.0,834.00 H973.0M984.0,834.00 H1066.0M1082.0,834.00 H1203.0M1244.0,834.00 H1326.0M1337.0,834.00 H1355.0M1381.0,834.00 H1444.0M1459.0,834.00 H1512.0M1523.0,834.00 H1547.0M1724.0,834.00 H1748.0M1758.0,834.00 H1782.0" stroke="#ec84ee" stroke-width="4.2" fill="none"/>
<path d="M165.0,817.75 H188.0M223.0,817.75 H286.0M312.0,817.75 H340.0M366.0,817.75 H492.0M508.0,817.75 H654.0M704.0,817.75 H737.0M773.0,817.75 H845.0M871.0,817.75 H988.0M1003.0,817.75 H1017.0M1062.0,817.75 H1213.0M1244.0,817.75 H1267.0M1293.0,817.75 H1316.0M1342.0,817.75 H1365.0M1386.0,817.75 H1429.0M1459.0,817.75 H1483.0M1548.0,817.75 H1571.0" stroke="#dc11ff" stroke-width="4.2" fill="none"/>
<path d="M165.0,801.75 H188.0M258.0,801.75 H487.0M508.0,801.75 H615.0M626.0,801.75 H718.0M729.0,801.75 H826.0M949.0,801.75 H1149.0M1160.0,801.75 H1248.0M1258.0,801.75 H1444.0M1459.0,801.75 H1483.0M1552.0,801.75 H1576.0" stroke="#ff1c00" stroke-width="4.2" fill="none"/>
<path d="M194.0,785.00 H218.0M321.0,785.00 H507.0M518.0,785.00 H541.0M557.0,785.00 H683.0M807.0,785.00 H831.0M954.0,785.00 H973.0M988.0,785.00 H1125.0M1155.0,785.00 H1218.0M1244.0,785.00 H1267.0M1317.0,785.00 H1341.0M1396.0,785.00 H1419.0M1464.0,785.00 H1650.0" stroke="#ffb10d" stroke-width="4.2" fill="none"/>
<path d="M341.0,768.75 H370.0M410.0,768.75 H448.0M469.0,768.75 H492.0M527.0,768.75 H546.0M562.0,768.75 H590.0M616.0,768.75 H649.0M959.0,768.75 H988.0M1062.0,768.75 H1086.0M1101.0,768.75 H1125.0M1160.0,768.75 H1194.0M1248.0,768.75 H1272.0M1425.0,768.75 H1512.0" stroke="#fff000" stroke-width="4.2" fill="none"/>
<path d="M420.0,751.75 H443.0M532.0,751.75 H556.0M567.0,751.75 H590.0M621.0,751.75 H742.0M969.0,751.75 H1135.0M1185.0,751.75 H1346.0M1469.0,751.75 H1493.0" stroke="#a4ff27" stroke-width="4.2" fill="none"/>
<path d="M429.0,736.00 H453.0M576.0,736.00 H733.0M993.0,736.00 H1105.0M1116.0,736.00 H1223.0M1263.0,736.00 H1292.0M1489.0,736.00 H1512.0" stroke="#59d100" stroke-width="4.2" fill="none"/>
<path d="M591.0,719.75 H615.0M655.0,719.75 H772.0M1072.0,719.75 H1243.0M1263.0,719.75 H1287.0" stroke="#00fa72" stroke-width="4.2" fill="none"/>
<path d="M596.0,703.00 H733.0M1091.0,703.00 H1120.0M1199.0,703.00 H1223.0M1273.0,703.00 H1326.0" stroke="#00e0ff" stroke-width="4.2" fill="none"/>
<path d="M1111.0,686.75 H1135.0" stroke="#000dcd" stroke-width="4.2" fill="none"/>
<g text-anchor="middle" font-size="11.1" fill="#fff" style="font-family:'DejaVu Sans','Liberation Sans',sans-serif"><text x="117.5" y="831.6">KSE</text><text x="255.0" y="831.6">ETA</text><text x="494.0" y="831.6">NZC</text><text x="710.5" y="831.6">NDA</text><text x="853.0" y="831.6">SPE</text><text x="946.5" y="831.6">ARD</text><text x="1025.0" y="831.6">EGE</text><text x="1142.5" y="831.6">NTA</text><text x="1283.8" y="831.6">MON</text><text x="1343.2" y="831.6">URS</text><text x="1411.5" y="831.6">AHY</text><text x="1485.5" y="831.6">GUM</text><text x="1535.0" y="831.6">OHY</text><text x="1736.0" y="831.6">XHE</text><text x="1770.0" y="831.6">EVI</text><text x="176.5" y="815.4">AVB</text><text x="254.5" y="815.4">ELY</text><text x="326.0" y="815.4">CAM</text><text x="432.0" y="815.4">SSG</text><text x="578.5" y="815.4">PCA</text><text x="720.5" y="815.4">AUD</text><text x="809.0" y="815.4">AUR</text><text x="929.5" y="815.4">DSX</text><text x="1010.0" y="815.4">OCU</text><text x="1137.5" y="815.4">OER</text><text x="1255.5" y="815.4">DKD</text><text x="1304.5" y="815.4">DSV</text><text x="1353.5" y="815.4">ALY</text><text x="1407.5" y="815.4">JLE</text><text x="1471.0" y="815.4">SCC</text><text x="1559.5" y="815.4">FEV</text><text x="176.5" y="799.4">LYR</text><text x="372.5" y="799.4">JMC</text><text x="561.5" y="799.4">JPE</text><text x="672.0" y="799.4">PAU</text><text x="774.0" y="799.4">NIA</text><text x="1050.0" y="799.4">STA</text><text x="1204.0" y="799.4">NOO</text><text x="1353.0" y="799.4">COM</text><text x="1471.0" y="799.4">NCC</text><text x="1564.0" y="799.4">FED</text><text x="206.0" y="782.6">HVI</text><text x="412.0" y="782.6">ARI</text><text x="529.5" y="782.6">SZC</text><text x="617.8" y="782.6">CAP</text><text x="819.0" y="782.6">NUE</text><text x="961.5" y="782.6">OCT</text><text x="1059.2" y="782.6">ORI</text><text x="1186.5" y="782.6">AMO</text><text x="1255.5" y="782.6">DPC</text><text x="1329.0" y="782.6">XVI</text><text x="1407.5" y="782.6">QUA</text><text x="1559.5" y="782.6">AAN</text><text x="353.5" y="766.4">TAH</text><text x="431.0" y="766.4">JEA</text><text x="480.5" y="766.4">JIP</text><text x="538.8" y="766.4">PPS</text><text x="579.0" y="766.4">ZCS</text><text x="632.5" y="766.4">GDR</text><text x="969.8" y="766.4">DRA</text><text x="1074.0" y="766.4">LUM</text><text x="1113.0" y="766.4">RPU</text><text x="1177.0" y="766.4">THA</text><text x="1260.0" y="766.4">PSU</text><text x="1470.5" y="766.4">XCB</text><text x="431.5" y="749.4">JRC</text><text x="544.0" y="749.4">CAN</text><text x="578.5" y="749.4">FAN</text><text x="681.5" y="749.4">PER</text><text x="1048.8" y="749.4">CTA</text><text x="1264.5" y="749.4">HYD</text><text x="1481.0" y="749.4">XUM</text><text x="441.0" y="733.6">COR</text><text x="657.0" y="733.6">SDA</text><text x="1049.0" y="733.6">LMI</text><text x="1166.2" y="733.6">LEO</text><text x="1274.8" y="733.6">EHY</text><text x="1500.5" y="733.6">ECV</text><text x="603.0" y="717.4">JXA</text><text x="715.2" y="717.4">KCG</text><text x="1157.5" y="717.4">AND</text><text x="1275.0" y="717.4">DAD</text><text x="666.5" y="700.6">ERI</text><text x="1108.2" y="700.6">SLD</text><text x="1211.0" y="700.6">ORS</text><text x="1299.5" y="700.6">GEM</text><text x="1123.0" y="684.4">KUM</text></g>
<path d="M112.7,834.00 h8.2 M116.8,829.90 v8.2M240.9,834.00 h8.2 M245.0,829.90 v8.2M510.4,834.00 h8.2 M514.5,829.90 v8.2M706.6,834.00 h8.2 M710.8,829.90 v8.2M832.6,834.00 h8.2 M836.8,829.90 v8.2M961.9,834.00 h8.2 M966.0,829.90 v8.2M985.6,834.00 h8.2 M989.8,829.90 v8.2M1115.7,834.00 h8.2 M1119.8,829.90 v8.2M1294.7,834.00 h8.2 M1298.8,829.90 v8.2M1341.9,834.00 h8.2 M1346.0,829.90 v8.2M1412.7,834.00 h8.2 M1416.8,829.90 v8.2M1481.7,834.00 h8.2 M1485.8,829.90 v8.2M1530.7,834.00 h8.2 M1534.8,829.90 v8.2M1731.9,834.00 h8.2 M1736.0,829.90 v8.2M1765.9,834.00 h8.2 M1770.0,829.90 v8.2M171.7,817.75 h8.2 M175.8,813.65 v8.2M255.9,817.75 h8.2 M260.0,813.65 v8.2M322.6,817.75 h8.2 M326.8,813.65 v8.2M436.6,817.75 h8.2 M440.8,813.65 v8.2M598.6,817.75 h8.2 M602.8,813.65 v8.2M716.9,817.75 h8.2 M721.0,813.65 v8.2M792.6,817.75 h8.2 M796.8,813.65 v8.2M938.6,817.75 h8.2 M942.8,813.65 v8.2M1005.6,817.75 h8.2 M1009.8,813.65 v8.2M1152.7,817.75 h8.2 M1156.8,813.65 v8.2M1250.9,817.75 h8.2 M1255.0,813.65 v8.2M1299.7,817.75 h8.2 M1303.8,813.65 v8.2M1348.7,817.75 h8.2 M1352.8,813.65 v8.2M1402.7,817.75 h8.2 M1406.8,813.65 v8.2M1466.7,817.75 h8.2 M1470.8,813.65 v8.2M1554.7,817.75 h8.2 M1558.8,813.65 v8.2M173.7,801.75 h8.2 M177.8,797.65 v8.2M377.6,801.75 h8.2 M381.8,797.65 v8.2M544.6,801.75 h8.2 M548.8,797.65 v8.2M681.6,801.75 h8.2 M685.8,797.65 v8.2M740.6,801.75 h8.2 M744.8,797.65 v8.2M1074.7,801.75 h8.2 M1078.8,797.65 v8.2M1216.7,801.75 h8.2 M1220.8,797.65 v8.2M1304.7,801.75 h8.2 M1308.8,797.65 v8.2M1466.7,801.75 h8.2 M1470.8,797.65 v8.2M1559.7,801.75 h8.2 M1563.8,797.65 v8.2M201.7,785.00 h8.2 M205.8,780.90 v8.2M399.6,785.00 h8.2 M403.8,780.90 v8.2M524.6,785.00 h8.2 M528.8,780.90 v8.2M638.6,785.00 h8.2 M642.8,780.90 v8.2M814.6,785.00 h8.2 M818.8,780.90 v8.2M958.6,785.00 h8.2 M962.8,780.90 v8.2M1039.7,785.00 h8.2 M1043.8,780.90 v8.2M1187.7,785.00 h8.2 M1191.8,780.90 v8.2M1250.9,785.00 h8.2 M1255.0,780.90 v8.2M1324.7,785.00 h8.2 M1328.8,780.90 v8.2M1402.7,785.00 h8.2 M1406.8,780.90 v8.2M1545.7,785.00 h8.2 M1549.8,780.90 v8.2M355.6,768.75 h8.2 M359.8,764.65 v8.2M425.6,768.75 h8.2 M429.8,764.65 v8.2M475.6,768.75 h8.2 M479.8,764.65 v8.2M534.6,768.75 h8.2 M538.8,764.65 v8.2M570.6,768.75 h8.2 M574.8,764.65 v8.2M630.6,768.75 h8.2 M634.8,764.65 v8.2M973.6,768.75 h8.2 M977.8,764.65 v8.2M1069.7,768.75 h8.2 M1073.8,764.65 v8.2M1108.7,768.75 h8.2 M1112.8,764.65 v8.2M1177.7,768.75 h8.2 M1181.8,764.65 v8.2M1255.4,768.75 h8.2 M1259.5,764.65 v8.2M1466.7,768.75 h8.2 M1470.8,764.65 v8.2M426.6,751.75 h8.2 M430.8,747.65 v8.2M539.6,751.75 h8.2 M543.8,747.65 v8.2M573.6,751.75 h8.2 M577.8,747.65 v8.2M703.6,751.75 h8.2 M707.8,747.65 v8.2M1093.4,751.75 h8.2 M1097.5,747.65 v8.2M1270.7,751.75 h8.2 M1274.8,747.65 v8.2M1476.7,751.75 h8.2 M1480.8,747.65 v8.2M436.6,736.00 h8.2 M440.8,731.90 v8.2M630.6,736.00 h8.2 M634.8,731.90 v8.2M1038.7,736.00 h8.2 M1042.8,731.90 v8.2M1167.7,736.00 h8.2 M1171.8,731.90 v8.2M1274.7,736.00 h8.2 M1278.8,731.90 v8.2M1496.7,736.00 h8.2 M1500.8,731.90 v8.2M598.6,719.75 h8.2 M602.8,715.65 v8.2M726.6,719.75 h8.2 M730.8,715.65 v8.2M1187.7,719.75 h8.2 M1191.8,715.65 v8.2M1270.7,719.75 h8.2 M1274.8,715.65 v8.2M686.6,703.00 h8.2 M690.8,698.90 v8.2M1101.9,703.00 h8.2 M1106.0,698.90 v8.2M1206.9,703.00 h8.2 M1211.0,698.90 v8.2M1299.7,703.00 h8.2 M1303.8,698.90 v8.2M1118.7,686.75 h8.2 M1122.8,682.65 v8.2" stroke="#fff" stroke-width="2.1" fill="none"/>
<path d="M1137,842.2 V641.5 M1139.5,842.2 V641.5" stroke="#ff0000" stroke-width="1.2" stroke-dasharray="4.2 1.8" fill="none"/>
<rect x="19.5" y="641.5" width="1766.0" height="200.75" fill="none" stroke="#fff" stroke-width="1.1"/>
<path d="M19.5,842.25 v4.9M264.8,842.25 v4.9M510.0,842.25 v4.9M755.2,842.25 v4.9M1000.5,842.25 v4.9M1245.8,842.25 v4.9M1491.0,842.25 v4.9M1736.2,842.25 v4.9" stroke="#fff" stroke-width="1.1" fill="none"/>
<g text-anchor="middle" font-size="13.89" fill="#fff" style="font-family:'DejaVu Sans','Liberation Sans',sans-serif"><text x="20.1" y="862.2">0</text><text x="265.4" y="862.2">50</text><text x="510.6" y="862.2">100</text><text x="755.9" y="862.2">150</text><text x="1001.1" y="862.2">200</text><text x="1246.3" y="862.2">250</text><text x="1491.6" y="862.2">300</text><text x="1736.8" y="862.2">350</text></g>
<text x="902.6" y="882" text-anchor="middle" font-size="13.89" fill="#fff" style="font-family:'DejaVu Sans','Liberation Sans',sans-serif">Solar longitude (deg)</text>
</svg>
</body></html>
